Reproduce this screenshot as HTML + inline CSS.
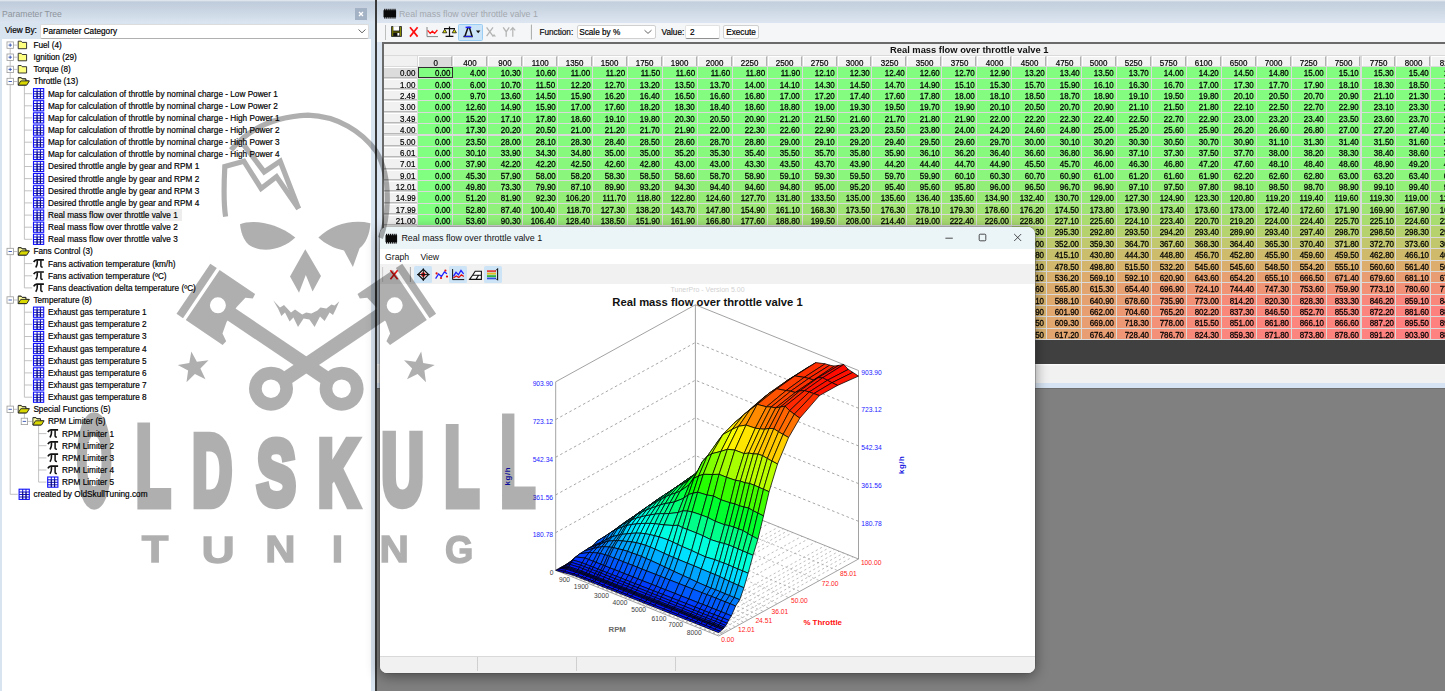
<!DOCTYPE html><html><head><meta charset="utf-8"><title>TunerPro</title><style>
*{box-sizing:border-box}
html,body{margin:0;padding:0}
body{width:1445px;height:691px;overflow:hidden;position:relative;background:#808080;font-family:"Liberation Sans",sans-serif;}
.abs{position:absolute}
.t{position:absolute;white-space:nowrap;line-height:1}
.tree{font-size:8.22px;color:#000;-webkit-text-stroke:0.18px #000}
.cell{position:absolute;height:10.3px;font-size:9.5px;line-height:12.3px;text-align:right;padding-right:1.7px;color:#000;-webkit-text-stroke:0.28px #000;white-space:nowrap;overflow:hidden}
.cell span,.hdr span{display:inline-block;transform:scaleX(0.84);transform-origin:100% 50%}
.hdr.c span{transform-origin:50% 50%}
.hdr{position:absolute;font-size:9.5px;color:#000;-webkit-text-stroke:0.22px #000;white-space:nowrap;overflow:hidden}
</style></head><body>
<div class="abs" style="left:0;top:0;width:376px;height:691px;background:#d9e4f1"></div>
<div class="abs" style="left:0;top:0;width:376px;height:23px;background:linear-gradient(#e9edf2 0px,#bfccdb 2px,#c6d2e0 8px,#dbe5f1 23px)"></div>
<div class="t" style="left:2px;top:10.2px;font-size:8.64px;color:#8e949b">Parameter Tree</div>
<div class="abs" style="left:355px;top:8px;width:12px;height:12px;background:#a4b2c5"></div>
<svg class="abs" style="left:355px;top:8px" width="12" height="12"><path d="M4 4L8 8M8 4L4 8" stroke="#fff" stroke-width="1.3"/></svg>
<div class="t tree" style="left:5px;top:27.3px">View By:</div>
<div class="abs" style="left:40px;top:24px;width:329px;height:14.5px;background:#fff;border:1px solid #dcdcdc;border-bottom-color:#b0b0b0;border-radius:2px"></div>
<div class="t tree" style="left:43px;top:27.6px">Parameter Category</div>
<svg class="abs" style="left:357px;top:27px" width="10" height="8"><path d="M1.5 2.5L5 5.8L8.5 2.5" stroke="#666" stroke-width="1" fill="none"/></svg>
<div class="abs" style="left:2px;top:39px;width:368.5px;height:652px;background:#fff"></div>
<div class="t tree" style="left:33.4px;top:42.0px">Fuel (4)</div>
<div class="t tree" style="left:33.4px;top:54.1px">Ignition (29)</div>
<div class="t tree" style="left:33.4px;top:66.3px">Torque (8)</div>
<div class="t tree" style="left:33.4px;top:78.4px">Throttle (13)</div>
<div class="t tree" style="left:48.0px;top:90.6px">Map for calculation of throttle by nominal charge - Low Power 1</div>
<div class="t tree" style="left:48.0px;top:102.7px">Map for calculation of throttle by nominal charge - Low Power 2</div>
<div class="t tree" style="left:48.0px;top:114.8px">Map for calculation of throttle by nominal charge - High Power 1</div>
<div class="t tree" style="left:48.0px;top:127.0px">Map for calculation of throttle by nominal charge - High Power 2</div>
<div class="t tree" style="left:48.0px;top:139.1px">Map for calculation of throttle by nominal charge - High Power 3</div>
<div class="t tree" style="left:48.0px;top:151.3px">Map for calculation of throttle by nominal charge - High Power 4</div>
<div class="t tree" style="left:48.0px;top:163.4px">Desired throttle angle by gear and RPM 1</div>
<div class="t tree" style="left:48.0px;top:175.5px">Desired throttle angle by gear and RPM 2</div>
<div class="t tree" style="left:48.0px;top:187.7px">Desired throttle angle by gear and RPM 3</div>
<div class="t tree" style="left:48.0px;top:199.8px">Desired throttle angle by gear and RPM 4</div>
<div class="abs" style="left:46.5px;top:209.1px;width:135px;height:12px;background:#ededed"></div>
<div class="t tree" style="left:48.0px;top:212.0px">Real mass flow over throttle valve 1</div>
<div class="t tree" style="left:48.0px;top:224.1px">Real mass flow over throttle valve 2</div>
<div class="t tree" style="left:48.0px;top:236.2px">Real mass flow over throttle valve 3</div>
<div class="t tree" style="left:33.4px;top:248.4px">Fans Control (3)</div>
<div class="t tree" style="left:48.0px;top:260.5px">Fans activation temperature (km/h)</div>
<div class="t tree" style="left:48.0px;top:272.7px">Fans activation temperature (ºC)</div>
<div class="t tree" style="left:48.0px;top:284.8px">Fans deactivation delta temperature (ºC)</div>
<div class="t tree" style="left:33.4px;top:296.9px">Temperature (8)</div>
<div class="t tree" style="left:48.0px;top:309.1px">Exhaust gas temperature 1</div>
<div class="t tree" style="left:48.0px;top:321.2px">Exhaust gas temperature 2</div>
<div class="t tree" style="left:48.0px;top:333.4px">Exhaust gas temperature 3</div>
<div class="t tree" style="left:48.0px;top:345.5px">Exhaust gas temperature 4</div>
<div class="t tree" style="left:48.0px;top:357.6px">Exhaust gas temperature 5</div>
<div class="t tree" style="left:48.0px;top:369.8px">Exhaust gas temperature 6</div>
<div class="t tree" style="left:48.0px;top:381.9px">Exhaust gas temperature 7</div>
<div class="t tree" style="left:48.0px;top:394.1px">Exhaust gas temperature 8</div>
<div class="t tree" style="left:33.4px;top:406.2px">Special Functions (5)</div>
<div class="t tree" style="left:47.9px;top:418.3px">RPM Limiter (5)</div>
<div class="t tree" style="left:62.1px;top:430.5px">RPM Limiter 1</div>
<div class="t tree" style="left:62.1px;top:442.6px">RPM Limiter 2</div>
<div class="t tree" style="left:62.1px;top:454.8px">RPM Limiter 3</div>
<div class="t tree" style="left:62.1px;top:466.9px">RPM Limiter 4</div>
<div class="t tree" style="left:62.1px;top:479.0px">RPM Limiter 5</div>
<div class="t tree" style="left:33.6px;top:491.2px">created by OldSkullTuning.com</div>
<svg class="abs" style="left:0;top:0" width="376" height="691"><path d="M10.2 45.1V494.3" stroke="#b4b4b4" stroke-width="0.8"/><path d="M10.2 45.1H17.2" stroke="#b4b4b4" stroke-width="0.8"/><rect x="7.0" y="41.9" width="6.4" height="6.4" fill="#fff" stroke="#9b9b9b" stroke-width="0.8"/><path d="M8.5 45.1H11.9" stroke="#3050b0" stroke-width="0.9"/><path d="M10.2 43.4V46.8" stroke="#3050b0" stroke-width="0.9"/><path d="M18.2 41.2h3l1 1.2h4.4v6.3h-8.4z" fill="#ffff80" stroke="#222" stroke-width="0.9"/><path d="M10.2 57.2H17.2" stroke="#b4b4b4" stroke-width="0.8"/><rect x="7.0" y="54.0" width="6.4" height="6.4" fill="#fff" stroke="#9b9b9b" stroke-width="0.8"/><path d="M8.5 57.2H11.9" stroke="#3050b0" stroke-width="0.9"/><path d="M10.2 55.5V58.9" stroke="#3050b0" stroke-width="0.9"/><path d="M18.2 53.3h3l1 1.2h4.4v6.3h-8.4z" fill="#ffff80" stroke="#222" stroke-width="0.9"/><path d="M10.2 69.4H17.2" stroke="#b4b4b4" stroke-width="0.8"/><rect x="7.0" y="66.2" width="6.4" height="6.4" fill="#fff" stroke="#9b9b9b" stroke-width="0.8"/><path d="M8.5 69.4H11.9" stroke="#3050b0" stroke-width="0.9"/><path d="M10.2 67.7V71.1" stroke="#3050b0" stroke-width="0.9"/><path d="M18.2 65.5h3l1 1.2h4.4v6.3h-8.4z" fill="#ffff80" stroke="#222" stroke-width="0.9"/><path d="M10.2 81.5H17.2" stroke="#b4b4b4" stroke-width="0.8"/><path d="M24.4 85.5V239.3" stroke="#b4b4b4" stroke-width="0.8"/><rect x="7.0" y="78.3" width="6.4" height="6.4" fill="#fff" stroke="#9b9b9b" stroke-width="0.8"/><path d="M8.5 81.5H11.9" stroke="#3050b0" stroke-width="0.9"/><path d="M18.2 77.6h3l1 1.2h3.6v1.8" fill="#ffffa0" stroke="#222" stroke-width="0.9"/><path d="M18.2 85.1v-7.3h3l1 1.2h3.6v1.9h3l-2.6 4.2z" fill="#ffffa0" stroke="#222" stroke-width="0.9"/><path d="M18.2 85.1l2.6 -4.2h8.6l-2.6 4.2z" fill="#d8d800" stroke="#222" stroke-width="0.9"/><path d="M24.4 93.7H32.2" stroke="#b4b4b4" stroke-width="0.8"/><rect x="33.5" y="88.6" width="10.2" height="10.2" fill="#fff" stroke="#1010ff" stroke-width="1.1"/><path d="M37.1 88.6v10.2M40.4 88.6v10.2M33.5 91.4h10.2M33.5 93.9h10.2M33.5 96.4h10.2" stroke="#1010d0" stroke-width="1"/><path d="M37.1 91.4v7.2M40.4 91.4v7.2" stroke="#101060" stroke-width="0.9"/><path d="M24.4 105.8H32.2" stroke="#b4b4b4" stroke-width="0.8"/><rect x="33.5" y="100.7" width="10.2" height="10.2" fill="#fff" stroke="#1010ff" stroke-width="1.1"/><path d="M37.1 100.7v10.2M40.4 100.7v10.2M33.5 103.5h10.2M33.5 106.0h10.2M33.5 108.5h10.2" stroke="#1010d0" stroke-width="1"/><path d="M37.1 103.5v7.2M40.4 103.5v7.2" stroke="#101060" stroke-width="0.9"/><path d="M24.4 117.9H32.2" stroke="#b4b4b4" stroke-width="0.8"/><rect x="33.5" y="112.8" width="10.2" height="10.2" fill="#fff" stroke="#1010ff" stroke-width="1.1"/><path d="M37.1 112.8v10.2M40.4 112.8v10.2M33.5 115.6h10.2M33.5 118.1h10.2M33.5 120.6h10.2" stroke="#1010d0" stroke-width="1"/><path d="M37.1 115.6v7.2M40.4 115.6v7.2" stroke="#101060" stroke-width="0.9"/><path d="M24.4 130.1H32.2" stroke="#b4b4b4" stroke-width="0.8"/><rect x="33.5" y="125.0" width="10.2" height="10.2" fill="#fff" stroke="#1010ff" stroke-width="1.1"/><path d="M37.1 125.0v10.2M40.4 125.0v10.2M33.5 127.8h10.2M33.5 130.3h10.2M33.5 132.8h10.2" stroke="#1010d0" stroke-width="1"/><path d="M37.1 127.8v7.2M40.4 127.8v7.2" stroke="#101060" stroke-width="0.9"/><path d="M24.4 142.2H32.2" stroke="#b4b4b4" stroke-width="0.8"/><rect x="33.5" y="137.1" width="10.2" height="10.2" fill="#fff" stroke="#1010ff" stroke-width="1.1"/><path d="M37.1 137.1v10.2M40.4 137.1v10.2M33.5 139.9h10.2M33.5 142.4h10.2M33.5 144.9h10.2" stroke="#1010d0" stroke-width="1"/><path d="M37.1 139.9v7.2M40.4 139.9v7.2" stroke="#101060" stroke-width="0.9"/><path d="M24.4 154.4H32.2" stroke="#b4b4b4" stroke-width="0.8"/><rect x="33.5" y="149.3" width="10.2" height="10.2" fill="#fff" stroke="#1010ff" stroke-width="1.1"/><path d="M37.1 149.3v10.2M40.4 149.3v10.2M33.5 152.1h10.2M33.5 154.6h10.2M33.5 157.1h10.2" stroke="#1010d0" stroke-width="1"/><path d="M37.1 152.1v7.2M40.4 152.1v7.2" stroke="#101060" stroke-width="0.9"/><path d="M24.4 166.5H32.2" stroke="#b4b4b4" stroke-width="0.8"/><rect x="33.5" y="161.4" width="10.2" height="10.2" fill="#fff" stroke="#1010ff" stroke-width="1.1"/><path d="M37.1 161.4v10.2M40.4 161.4v10.2M33.5 164.2h10.2M33.5 166.7h10.2M33.5 169.2h10.2" stroke="#1010d0" stroke-width="1"/><path d="M37.1 164.2v7.2M40.4 164.2v7.2" stroke="#101060" stroke-width="0.9"/><path d="M24.4 178.6H32.2" stroke="#b4b4b4" stroke-width="0.8"/><rect x="33.5" y="173.5" width="10.2" height="10.2" fill="#fff" stroke="#1010ff" stroke-width="1.1"/><path d="M37.1 173.5v10.2M40.4 173.5v10.2M33.5 176.3h10.2M33.5 178.8h10.2M33.5 181.3h10.2" stroke="#1010d0" stroke-width="1"/><path d="M37.1 176.3v7.2M40.4 176.3v7.2" stroke="#101060" stroke-width="0.9"/><path d="M24.4 190.8H32.2" stroke="#b4b4b4" stroke-width="0.8"/><rect x="33.5" y="185.7" width="10.2" height="10.2" fill="#fff" stroke="#1010ff" stroke-width="1.1"/><path d="M37.1 185.7v10.2M40.4 185.7v10.2M33.5 188.5h10.2M33.5 191.0h10.2M33.5 193.5h10.2" stroke="#1010d0" stroke-width="1"/><path d="M37.1 188.5v7.2M40.4 188.5v7.2" stroke="#101060" stroke-width="0.9"/><path d="M24.4 202.9H32.2" stroke="#b4b4b4" stroke-width="0.8"/><rect x="33.5" y="197.8" width="10.2" height="10.2" fill="#fff" stroke="#1010ff" stroke-width="1.1"/><path d="M37.1 197.8v10.2M40.4 197.8v10.2M33.5 200.6h10.2M33.5 203.1h10.2M33.5 205.6h10.2" stroke="#1010d0" stroke-width="1"/><path d="M37.1 200.6v7.2M40.4 200.6v7.2" stroke="#101060" stroke-width="0.9"/><path d="M24.4 215.1H32.2" stroke="#b4b4b4" stroke-width="0.8"/><rect x="33.5" y="210.0" width="10.2" height="10.2" fill="#fff" stroke="#1010ff" stroke-width="1.1"/><path d="M37.1 210.0v10.2M40.4 210.0v10.2M33.5 212.8h10.2M33.5 215.3h10.2M33.5 217.8h10.2" stroke="#1010d0" stroke-width="1"/><path d="M37.1 212.8v7.2M40.4 212.8v7.2" stroke="#101060" stroke-width="0.9"/><path d="M24.4 227.2H32.2" stroke="#b4b4b4" stroke-width="0.8"/><rect x="33.5" y="222.1" width="10.2" height="10.2" fill="#fff" stroke="#1010ff" stroke-width="1.1"/><path d="M37.1 222.1v10.2M40.4 222.1v10.2M33.5 224.9h10.2M33.5 227.4h10.2M33.5 229.9h10.2" stroke="#1010d0" stroke-width="1"/><path d="M37.1 224.9v7.2M40.4 224.9v7.2" stroke="#101060" stroke-width="0.9"/><path d="M24.4 239.3H32.2" stroke="#b4b4b4" stroke-width="0.8"/><rect x="33.5" y="234.2" width="10.2" height="10.2" fill="#fff" stroke="#1010ff" stroke-width="1.1"/><path d="M37.1 234.2v10.2M40.4 234.2v10.2M33.5 237.0h10.2M33.5 239.5h10.2M33.5 242.0h10.2" stroke="#1010d0" stroke-width="1"/><path d="M37.1 237.0v7.2M40.4 237.0v7.2" stroke="#101060" stroke-width="0.9"/><path d="M10.2 251.5H17.2" stroke="#b4b4b4" stroke-width="0.8"/><path d="M24.4 255.5V287.9" stroke="#b4b4b4" stroke-width="0.8"/><rect x="7.0" y="248.3" width="6.4" height="6.4" fill="#fff" stroke="#9b9b9b" stroke-width="0.8"/><path d="M8.5 251.5H11.9" stroke="#3050b0" stroke-width="0.9"/><path d="M18.2 247.6h3l1 1.2h3.6v1.8" fill="#ffffa0" stroke="#222" stroke-width="0.9"/><path d="M18.2 255.1v-7.3h3l1 1.2h3.6v1.9h3l-2.6 4.2z" fill="#ffffa0" stroke="#222" stroke-width="0.9"/><path d="M18.2 255.1l2.6 -4.2h8.6l-2.6 4.2z" fill="#d8d800" stroke="#222" stroke-width="0.9"/><path d="M24.4 263.6H32.2" stroke="#b4b4b4" stroke-width="0.8"/><path d="M33.7 262.0q1.2 -2.2 3 -2.2h7.2" stroke="#111" stroke-width="1.7" fill="none"/><path d="M37.3 260.2q0.3 5 -1.6 7.2M40.9 260.2v5.6q0 1.6 1.8 1.2" stroke="#111" stroke-width="1.5" fill="none"/><path d="M24.4 275.8H32.2" stroke="#b4b4b4" stroke-width="0.8"/><path d="M33.7 274.2q1.2 -2.2 3 -2.2h7.2" stroke="#111" stroke-width="1.7" fill="none"/><path d="M37.3 272.4q0.3 5 -1.6 7.2M40.9 272.4v5.6q0 1.6 1.8 1.2" stroke="#111" stroke-width="1.5" fill="none"/><path d="M24.4 287.9H32.2" stroke="#b4b4b4" stroke-width="0.8"/><path d="M33.7 286.3q1.2 -2.2 3 -2.2h7.2" stroke="#111" stroke-width="1.7" fill="none"/><path d="M37.3 284.5q0.3 5 -1.6 7.2M40.9 284.5v5.6q0 1.6 1.8 1.2" stroke="#111" stroke-width="1.5" fill="none"/><path d="M10.2 300.0H17.2" stroke="#b4b4b4" stroke-width="0.8"/><path d="M24.4 304.0V397.2" stroke="#b4b4b4" stroke-width="0.8"/><rect x="7.0" y="296.8" width="6.4" height="6.4" fill="#fff" stroke="#9b9b9b" stroke-width="0.8"/><path d="M8.5 300.0H11.9" stroke="#3050b0" stroke-width="0.9"/><path d="M18.2 296.1h3l1 1.2h3.6v1.8" fill="#ffffa0" stroke="#222" stroke-width="0.9"/><path d="M18.2 303.6v-7.3h3l1 1.2h3.6v1.9h3l-2.6 4.2z" fill="#ffffa0" stroke="#222" stroke-width="0.9"/><path d="M18.2 303.6l2.6 -4.2h8.6l-2.6 4.2z" fill="#d8d800" stroke="#222" stroke-width="0.9"/><path d="M24.4 312.2H32.2" stroke="#b4b4b4" stroke-width="0.8"/><rect x="33.5" y="307.1" width="10.2" height="10.2" fill="#fff" stroke="#1010ff" stroke-width="1.1"/><path d="M37.1 307.1v10.2M40.4 307.1v10.2M33.5 309.9h10.2M33.5 312.4h10.2M33.5 314.9h10.2" stroke="#1010d0" stroke-width="1"/><path d="M37.1 309.9v7.2M40.4 309.9v7.2" stroke="#101060" stroke-width="0.9"/><path d="M24.4 324.3H32.2" stroke="#b4b4b4" stroke-width="0.8"/><rect x="33.5" y="319.2" width="10.2" height="10.2" fill="#fff" stroke="#1010ff" stroke-width="1.1"/><path d="M37.1 319.2v10.2M40.4 319.2v10.2M33.5 322.0h10.2M33.5 324.5h10.2M33.5 327.0h10.2" stroke="#1010d0" stroke-width="1"/><path d="M37.1 322.0v7.2M40.4 322.0v7.2" stroke="#101060" stroke-width="0.9"/><path d="M24.4 336.5H32.2" stroke="#b4b4b4" stroke-width="0.8"/><rect x="33.5" y="331.4" width="10.2" height="10.2" fill="#fff" stroke="#1010ff" stroke-width="1.1"/><path d="M37.1 331.4v10.2M40.4 331.4v10.2M33.5 334.2h10.2M33.5 336.7h10.2M33.5 339.2h10.2" stroke="#1010d0" stroke-width="1"/><path d="M37.1 334.2v7.2M40.4 334.2v7.2" stroke="#101060" stroke-width="0.9"/><path d="M24.4 348.6H32.2" stroke="#b4b4b4" stroke-width="0.8"/><rect x="33.5" y="343.5" width="10.2" height="10.2" fill="#fff" stroke="#1010ff" stroke-width="1.1"/><path d="M37.1 343.5v10.2M40.4 343.5v10.2M33.5 346.3h10.2M33.5 348.8h10.2M33.5 351.3h10.2" stroke="#1010d0" stroke-width="1"/><path d="M37.1 346.3v7.2M40.4 346.3v7.2" stroke="#101060" stroke-width="0.9"/><path d="M24.4 360.7H32.2" stroke="#b4b4b4" stroke-width="0.8"/><rect x="33.5" y="355.6" width="10.2" height="10.2" fill="#fff" stroke="#1010ff" stroke-width="1.1"/><path d="M37.1 355.6v10.2M40.4 355.6v10.2M33.5 358.4h10.2M33.5 360.9h10.2M33.5 363.4h10.2" stroke="#1010d0" stroke-width="1"/><path d="M37.1 358.4v7.2M40.4 358.4v7.2" stroke="#101060" stroke-width="0.9"/><path d="M24.4 372.9H32.2" stroke="#b4b4b4" stroke-width="0.8"/><rect x="33.5" y="367.8" width="10.2" height="10.2" fill="#fff" stroke="#1010ff" stroke-width="1.1"/><path d="M37.1 367.8v10.2M40.4 367.8v10.2M33.5 370.6h10.2M33.5 373.1h10.2M33.5 375.6h10.2" stroke="#1010d0" stroke-width="1"/><path d="M37.1 370.6v7.2M40.4 370.6v7.2" stroke="#101060" stroke-width="0.9"/><path d="M24.4 385.0H32.2" stroke="#b4b4b4" stroke-width="0.8"/><rect x="33.5" y="379.9" width="10.2" height="10.2" fill="#fff" stroke="#1010ff" stroke-width="1.1"/><path d="M37.1 379.9v10.2M40.4 379.9v10.2M33.5 382.7h10.2M33.5 385.2h10.2M33.5 387.7h10.2" stroke="#1010d0" stroke-width="1"/><path d="M37.1 382.7v7.2M40.4 382.7v7.2" stroke="#101060" stroke-width="0.9"/><path d="M24.4 397.2H32.2" stroke="#b4b4b4" stroke-width="0.8"/><rect x="33.5" y="392.1" width="10.2" height="10.2" fill="#fff" stroke="#1010ff" stroke-width="1.1"/><path d="M37.1 392.1v10.2M40.4 392.1v10.2M33.5 394.9h10.2M33.5 397.4h10.2M33.5 399.9h10.2" stroke="#1010d0" stroke-width="1"/><path d="M37.1 394.9v7.2M40.4 394.9v7.2" stroke="#101060" stroke-width="0.9"/><path d="M10.2 409.3H17.2" stroke="#b4b4b4" stroke-width="0.8"/><path d="M24.4 413.3V421.4" stroke="#b4b4b4" stroke-width="0.8"/><rect x="7.0" y="406.1" width="6.4" height="6.4" fill="#fff" stroke="#9b9b9b" stroke-width="0.8"/><path d="M8.5 409.3H11.9" stroke="#3050b0" stroke-width="0.9"/><path d="M18.2 405.4h3l1 1.2h3.6v1.8" fill="#ffffa0" stroke="#222" stroke-width="0.9"/><path d="M18.2 412.9v-7.3h3l1 1.2h3.6v1.9h3l-2.6 4.2z" fill="#ffffa0" stroke="#222" stroke-width="0.9"/><path d="M18.2 412.9l2.6 -4.2h8.6l-2.6 4.2z" fill="#d8d800" stroke="#222" stroke-width="0.9"/><path d="M24.4 421.4H31.9" stroke="#b4b4b4" stroke-width="0.8"/><path d="M38.6 425.4V482.1" stroke="#b4b4b4" stroke-width="0.8"/><rect x="21.2" y="418.2" width="6.4" height="6.4" fill="#fff" stroke="#9b9b9b" stroke-width="0.8"/><path d="M22.7 421.4H26.1" stroke="#3050b0" stroke-width="0.9"/><path d="M32.9 417.5h3l1 1.2h3.6v1.8" fill="#ffffa0" stroke="#222" stroke-width="0.9"/><path d="M32.9 425.0v-7.3h3l1 1.2h3.6v1.9h3l-2.6 4.2z" fill="#ffffa0" stroke="#222" stroke-width="0.9"/><path d="M32.9 425.0l2.6 -4.2h8.6l-2.6 4.2z" fill="#d8d800" stroke="#222" stroke-width="0.9"/><path d="M38.6 433.6H46.4" stroke="#b4b4b4" stroke-width="0.8"/><path d="M47.9 432.0q1.2 -2.2 3 -2.2h7.2" stroke="#111" stroke-width="1.7" fill="none"/><path d="M51.5 430.2q0.3 5 -1.6 7.2M55.1 430.2v5.6q0 1.6 1.8 1.2" stroke="#111" stroke-width="1.5" fill="none"/><path d="M38.6 445.7H46.4" stroke="#b4b4b4" stroke-width="0.8"/><path d="M47.9 444.1q1.2 -2.2 3 -2.2h7.2" stroke="#111" stroke-width="1.7" fill="none"/><path d="M51.5 442.3q0.3 5 -1.6 7.2M55.1 442.3v5.6q0 1.6 1.8 1.2" stroke="#111" stroke-width="1.5" fill="none"/><path d="M38.6 457.9H46.4" stroke="#b4b4b4" stroke-width="0.8"/><path d="M47.9 456.3q1.2 -2.2 3 -2.2h7.2" stroke="#111" stroke-width="1.7" fill="none"/><path d="M51.5 454.5q0.3 5 -1.6 7.2M55.1 454.5v5.6q0 1.6 1.8 1.2" stroke="#111" stroke-width="1.5" fill="none"/><path d="M38.6 470.0H46.4" stroke="#b4b4b4" stroke-width="0.8"/><path d="M47.9 468.4q1.2 -2.2 3 -2.2h7.2" stroke="#111" stroke-width="1.7" fill="none"/><path d="M51.5 466.6q0.3 5 -1.6 7.2M55.1 466.6v5.6q0 1.6 1.8 1.2" stroke="#111" stroke-width="1.5" fill="none"/><path d="M38.6 482.1H46.4" stroke="#b4b4b4" stroke-width="0.8"/><rect x="47.7" y="477.0" width="10.2" height="10.2" fill="#fff" stroke="#1010ff" stroke-width="1.1"/><path d="M51.3 477.0v10.2M54.6 477.0v10.2M47.7 479.8h10.2M47.7 482.3h10.2M47.7 484.8h10.2" stroke="#1010d0" stroke-width="1"/><path d="M51.3 479.8v7.2M54.6 479.8v7.2" stroke="#101060" stroke-width="0.9"/><path d="M10.2 494.3H17.8" stroke="#b4b4b4" stroke-width="0.8"/><rect x="19.1" y="489.2" width="10.2" height="10.2" fill="#fff" stroke="#1010ff" stroke-width="1.1"/><path d="M22.7 489.2v10.2M26.0 489.2v10.2M19.1 492.0h10.2M19.1 494.5h10.2M19.1 497.0h10.2" stroke="#1010d0" stroke-width="1"/><path d="M22.7 492.0v7.2M26.0 492.0v7.2" stroke="#101060" stroke-width="0.9"/></svg>
<div class="abs" style="left:375px;top:0;width:1.6px;height:691px;background:#3a3a3a"></div>
<div class="abs" style="left:376.6px;top:0;width:1070px;height:23px;background:linear-gradient(#eef1f5 0px,#c3cfdd 2px,#cbd6e3 9px,#dde6f1 23px)"></div>
<div class="abs" style="left:376.6px;top:22px;width:1070px;height:342px;background:#dbe5f1"></div>
<svg class="abs" style="left:383.0px;top:8.0px" width="14" height="12"><rect x="0.5" y="2.2" width="12.6" height="7" fill="#0a0a0a"/><rect x="1.2" y="0.8" width="1.2" height="9.8" fill="#0a0a0a"/><rect x="3.2" y="0.8" width="1.2" height="9.8" fill="#0a0a0a"/><rect x="5.3" y="0.8" width="1.2" height="9.8" fill="#0a0a0a"/><rect x="7.3" y="0.8" width="1.2" height="9.8" fill="#0a0a0a"/><rect x="9.4" y="0.8" width="1.2" height="9.8" fill="#0a0a0a"/><rect x="11.4" y="0.8" width="1.2" height="9.8" fill="#0a0a0a"/></svg>
<div class="t" style="left:399px;top:9.6px;font-size:8.81px;color:#a3a8ae">Real mass flow over throttle valve 1</div>
<div class="abs" style="left:377.4px;top:22.5px;width:1069px;height:19.5px;background:#f5f6f7"></div>
<div class="abs" style="left:384.6px;top:24.5px;width:1px;height:15px;background:#bdbdbd"></div>
<div class="abs" style="left:458.2px;top:24px;width:24.8px;height:16.5px;background:#cce4f7;border:0.8px solid #99cdf3;border-radius:1.5px"></div>
<svg class="abs" style="left:385px;top:22px" width="160" height="20"><rect x="6.2" y="4.2" width="10.6" height="10.6" fill="#111"/><rect x="8.2" y="4.2" width="6" height="4.4" fill="#fff"/><rect x="7.2" y="5" width="1" height="9" fill="#8a8a00"/><rect x="15" y="5" width="1" height="9" fill="#8a8a00"/><rect x="12.4" y="11" width="2" height="2.6" fill="#fff"/><rect x="8" y="9.6" width="7" height="0.9" fill="#8a8a00"/><path d="M25 5.2L32.6 14.6M32.6 5.2L25 14.6" stroke="#ff1010" stroke-width="1.7"/><path d="M42 5v9.6h11" stroke="#777" stroke-width="0.9" fill="none"/><path d="M42.6 8.4l2.6 3 2.2-2.2 2.2 2.2 2.8-3.4" stroke="#ff1010" stroke-width="1.3" fill="none"/><path d="M64.5 4.6v9.2M60.6 14.4h7.8M59 6.6h11" stroke="#111" stroke-width="1.2"/><path d="M57.6 10.8h4.2l-2.1-3.6zM67.2 10.8h4.2l-2.1-3.6z" fill="#e8e800" stroke="#111" stroke-width="0.8"/><path d="M78.4 14.6h9.4M80 14l3-8.4h1.4l2.6 8.4" stroke="#111" stroke-width="1.5" fill="none"/><path d="M80.6 5.4h5.6" stroke="#2020ff" stroke-width="1.5"/><path d="M79.4 14.4h7.8" stroke="#2020ff" stroke-width="1"/><path d="M91 8.6h4.4l-2.2 2.6z" fill="#111"/><path d="M101.6 5.4l6.4 8.8M108 5.4l-6.4 8.8" stroke="#b4b4b4" stroke-width="1.3"/><path d="M107 14.6l2-2.6 2 2.6z" fill="#b4b4b4"/><path d="M118.2 5.4l3 4.4v5M124.2 5.4l-3 4.4" stroke="#b4b4b4" stroke-width="1.3" fill="none"/><path d="M127.8 14.8V6M125.4 8.4l2.4-2.8 2.4 2.8" stroke="#b4b4b4" stroke-width="1.2" fill="none"/><path d="M146.4 2.6v15" stroke="#a8a8a8" stroke-width="1"/></svg>
<div class="t tree" style="left:539.4px;top:28.9px;color:#111">Function:</div>
<div class="abs" style="left:576.6px;top:24.6px;width:79px;height:14.8px;background:#fff;border:0.8px solid #d0d0d0;border-radius:2px"></div>
<div class="t tree" style="left:579.2px;top:29.1px">Scale by %</div>
<svg class="abs" style="left:643px;top:28px" width="10" height="8"><path d="M1.5 2.2L5 5.4L8.5 2.2" stroke="#555" stroke-width="0.9" fill="none"/></svg>
<div class="t tree" style="left:661.6px;top:28.9px">Value:</div>
<div class="abs" style="left:685.4px;top:24.6px;width:34.6px;height:14.8px;background:#fff;border:0.8px solid #e2e2e2;border-bottom-color:#909090;border-radius:2px"></div>
<div class="t tree" style="left:690px;top:29.1px">2</div>
<div class="abs" style="left:723.4px;top:24.6px;width:35.4px;height:14.8px;background:#fdfdfd;border:0.8px solid #d0d0d0;border-radius:2px"></div>
<div class="t tree" style="left:726.2px;top:29.1px">Execute</div>
<div class="abs" style="left:382.4px;top:42.0px;width:1064px;height:298px;background:#dadada"></div>
<div class="abs" style="left:382.4px;top:42.0px;width:1064px;height:1.8px;background:#6a6a6a"></div>
<div class="abs" style="left:382.4px;top:42.0px;width:1.6px;height:298px;background:#6a6a6a"></div>
<div class="abs" style="left:384px;top:44px;width:1062px;height:10.8px;background:#f1f1f1"></div>
<div class="t" style="left:889.8px;top:45.8px;font-size:8.6px;font-weight:bold;color:#111;transform-origin:0 0;transform:scaleX(1.088)">Real mass flow over throttle valve 1</div>
<div class="abs" style="left:384px;top:55.8px;width:33.4px;height:10.6px;background:#f1f1f1"></div>
<div class="hdr c" style="left:418.40px;top:55.8px;width:33.9px;height:10.6px;background:#dcdcdc;border-left:1px solid #fff;border-top:1px solid #fff;border-right:0.8px solid #b0b0b0;text-align:center;line-height:12.2px"><span>0</span></div>
<div class="hdr c" style="left:453.33px;top:55.8px;width:33.9px;height:10.6px;background:#f3f3f3;border-left:1px solid #fff;border-top:1px solid #fff;border-right:0.8px solid #b0b0b0;text-align:center;line-height:12.2px"><span>400</span></div>
<div class="hdr c" style="left:488.26px;top:55.8px;width:33.9px;height:10.6px;background:#f3f3f3;border-left:1px solid #fff;border-top:1px solid #fff;border-right:0.8px solid #b0b0b0;text-align:center;line-height:12.2px"><span>900</span></div>
<div class="hdr c" style="left:523.19px;top:55.8px;width:33.9px;height:10.6px;background:#f3f3f3;border-left:1px solid #fff;border-top:1px solid #fff;border-right:0.8px solid #b0b0b0;text-align:center;line-height:12.2px"><span>1100</span></div>
<div class="hdr c" style="left:558.12px;top:55.8px;width:33.9px;height:10.6px;background:#f3f3f3;border-left:1px solid #fff;border-top:1px solid #fff;border-right:0.8px solid #b0b0b0;text-align:center;line-height:12.2px"><span>1350</span></div>
<div class="hdr c" style="left:593.05px;top:55.8px;width:33.9px;height:10.6px;background:#f3f3f3;border-left:1px solid #fff;border-top:1px solid #fff;border-right:0.8px solid #b0b0b0;text-align:center;line-height:12.2px"><span>1500</span></div>
<div class="hdr c" style="left:627.98px;top:55.8px;width:33.9px;height:10.6px;background:#f3f3f3;border-left:1px solid #fff;border-top:1px solid #fff;border-right:0.8px solid #b0b0b0;text-align:center;line-height:12.2px"><span>1750</span></div>
<div class="hdr c" style="left:662.91px;top:55.8px;width:33.9px;height:10.6px;background:#f3f3f3;border-left:1px solid #fff;border-top:1px solid #fff;border-right:0.8px solid #b0b0b0;text-align:center;line-height:12.2px"><span>1900</span></div>
<div class="hdr c" style="left:697.84px;top:55.8px;width:33.9px;height:10.6px;background:#f3f3f3;border-left:1px solid #fff;border-top:1px solid #fff;border-right:0.8px solid #b0b0b0;text-align:center;line-height:12.2px"><span>2000</span></div>
<div class="hdr c" style="left:732.77px;top:55.8px;width:33.9px;height:10.6px;background:#f3f3f3;border-left:1px solid #fff;border-top:1px solid #fff;border-right:0.8px solid #b0b0b0;text-align:center;line-height:12.2px"><span>2250</span></div>
<div class="hdr c" style="left:767.70px;top:55.8px;width:33.9px;height:10.6px;background:#f3f3f3;border-left:1px solid #fff;border-top:1px solid #fff;border-right:0.8px solid #b0b0b0;text-align:center;line-height:12.2px"><span>2500</span></div>
<div class="hdr c" style="left:802.63px;top:55.8px;width:33.9px;height:10.6px;background:#f3f3f3;border-left:1px solid #fff;border-top:1px solid #fff;border-right:0.8px solid #b0b0b0;text-align:center;line-height:12.2px"><span>2750</span></div>
<div class="hdr c" style="left:837.56px;top:55.8px;width:33.9px;height:10.6px;background:#f3f3f3;border-left:1px solid #fff;border-top:1px solid #fff;border-right:0.8px solid #b0b0b0;text-align:center;line-height:12.2px"><span>3000</span></div>
<div class="hdr c" style="left:872.49px;top:55.8px;width:33.9px;height:10.6px;background:#f3f3f3;border-left:1px solid #fff;border-top:1px solid #fff;border-right:0.8px solid #b0b0b0;text-align:center;line-height:12.2px"><span>3250</span></div>
<div class="hdr c" style="left:907.42px;top:55.8px;width:33.9px;height:10.6px;background:#f3f3f3;border-left:1px solid #fff;border-top:1px solid #fff;border-right:0.8px solid #b0b0b0;text-align:center;line-height:12.2px"><span>3500</span></div>
<div class="hdr c" style="left:942.35px;top:55.8px;width:33.9px;height:10.6px;background:#f3f3f3;border-left:1px solid #fff;border-top:1px solid #fff;border-right:0.8px solid #b0b0b0;text-align:center;line-height:12.2px"><span>3750</span></div>
<div class="hdr c" style="left:977.28px;top:55.8px;width:33.9px;height:10.6px;background:#f3f3f3;border-left:1px solid #fff;border-top:1px solid #fff;border-right:0.8px solid #b0b0b0;text-align:center;line-height:12.2px"><span>4000</span></div>
<div class="hdr c" style="left:1012.21px;top:55.8px;width:33.9px;height:10.6px;background:#f3f3f3;border-left:1px solid #fff;border-top:1px solid #fff;border-right:0.8px solid #b0b0b0;text-align:center;line-height:12.2px"><span>4500</span></div>
<div class="hdr c" style="left:1047.14px;top:55.8px;width:33.9px;height:10.6px;background:#f3f3f3;border-left:1px solid #fff;border-top:1px solid #fff;border-right:0.8px solid #b0b0b0;text-align:center;line-height:12.2px"><span>4750</span></div>
<div class="hdr c" style="left:1082.07px;top:55.8px;width:33.9px;height:10.6px;background:#f3f3f3;border-left:1px solid #fff;border-top:1px solid #fff;border-right:0.8px solid #b0b0b0;text-align:center;line-height:12.2px"><span>5000</span></div>
<div class="hdr c" style="left:1117.00px;top:55.8px;width:33.9px;height:10.6px;background:#f3f3f3;border-left:1px solid #fff;border-top:1px solid #fff;border-right:0.8px solid #b0b0b0;text-align:center;line-height:12.2px"><span>5250</span></div>
<div class="hdr c" style="left:1151.93px;top:55.8px;width:33.9px;height:10.6px;background:#f3f3f3;border-left:1px solid #fff;border-top:1px solid #fff;border-right:0.8px solid #b0b0b0;text-align:center;line-height:12.2px"><span>5750</span></div>
<div class="hdr c" style="left:1186.86px;top:55.8px;width:33.9px;height:10.6px;background:#f3f3f3;border-left:1px solid #fff;border-top:1px solid #fff;border-right:0.8px solid #b0b0b0;text-align:center;line-height:12.2px"><span>6100</span></div>
<div class="hdr c" style="left:1221.79px;top:55.8px;width:33.9px;height:10.6px;background:#f3f3f3;border-left:1px solid #fff;border-top:1px solid #fff;border-right:0.8px solid #b0b0b0;text-align:center;line-height:12.2px"><span>6500</span></div>
<div class="hdr c" style="left:1256.72px;top:55.8px;width:33.9px;height:10.6px;background:#f3f3f3;border-left:1px solid #fff;border-top:1px solid #fff;border-right:0.8px solid #b0b0b0;text-align:center;line-height:12.2px"><span>7000</span></div>
<div class="hdr c" style="left:1291.65px;top:55.8px;width:33.9px;height:10.6px;background:#f3f3f3;border-left:1px solid #fff;border-top:1px solid #fff;border-right:0.8px solid #b0b0b0;text-align:center;line-height:12.2px"><span>7250</span></div>
<div class="hdr c" style="left:1326.58px;top:55.8px;width:33.9px;height:10.6px;background:#f3f3f3;border-left:1px solid #fff;border-top:1px solid #fff;border-right:0.8px solid #b0b0b0;text-align:center;line-height:12.2px"><span>7500</span></div>
<div class="hdr c" style="left:1361.51px;top:55.8px;width:33.9px;height:10.6px;background:#f3f3f3;border-left:1px solid #fff;border-top:1px solid #fff;border-right:0.8px solid #b0b0b0;text-align:center;line-height:12.2px"><span>7750</span></div>
<div class="hdr c" style="left:1396.44px;top:55.8px;width:33.9px;height:10.6px;background:#f3f3f3;border-left:1px solid #fff;border-top:1px solid #fff;border-right:0.8px solid #b0b0b0;text-align:center;line-height:12.2px"><span>8000</span></div>
<div class="hdr c" style="left:1431.37px;top:55.8px;width:33.9px;height:10.6px;background:#f3f3f3;border-left:1px solid #fff;border-top:1px solid #fff;border-right:0.8px solid #b0b0b0;text-align:center;line-height:12.2px"><span>8250</span></div>
<div class="hdr" style="left:384px;top:67.30px;width:33.4px;height:10.3px;background:#dcdcdc;border-top:1px solid #fff;border-bottom:0.8px solid #b8b8b8;text-align:right;padding-right:2.1px;line-height:10.4px"><span>0.00</span></div>
<div class="cell" style="left:418.40px;top:67.30px;width:33.9px;background:rgb(128,255,128)"><span>0.00</span></div>
<div class="cell" style="left:453.33px;top:67.30px;width:33.9px;background:rgb(129,254,128)"><span>4.00</span></div>
<div class="cell" style="left:488.26px;top:67.30px;width:33.9px;background:rgb(130,253,127)"><span>10.30</span></div>
<div class="cell" style="left:523.19px;top:67.30px;width:33.9px;background:rgb(130,253,127)"><span>10.60</span></div>
<div class="cell" style="left:558.12px;top:67.30px;width:33.9px;background:rgb(130,253,127)"><span>11.00</span></div>
<div class="cell" style="left:593.05px;top:67.30px;width:33.9px;background:rgb(130,253,127)"><span>11.20</span></div>
<div class="cell" style="left:627.98px;top:67.30px;width:33.9px;background:rgb(130,253,127)"><span>11.50</span></div>
<div class="cell" style="left:662.91px;top:67.30px;width:33.9px;background:rgb(130,253,127)"><span>11.60</span></div>
<div class="cell" style="left:697.84px;top:67.30px;width:33.9px;background:rgb(130,253,127)"><span>11.60</span></div>
<div class="cell" style="left:732.77px;top:67.30px;width:33.9px;background:rgb(130,253,127)"><span>11.80</span></div>
<div class="cell" style="left:767.70px;top:67.30px;width:33.9px;background:rgb(130,253,127)"><span>11.90</span></div>
<div class="cell" style="left:802.63px;top:67.30px;width:33.9px;background:rgb(130,253,127)"><span>12.10</span></div>
<div class="cell" style="left:837.56px;top:67.30px;width:33.9px;background:rgb(130,253,127)"><span>12.30</span></div>
<div class="cell" style="left:872.49px;top:67.30px;width:33.9px;background:rgb(130,253,127)"><span>12.40</span></div>
<div class="cell" style="left:907.42px;top:67.30px;width:33.9px;background:rgb(130,253,127)"><span>12.60</span></div>
<div class="cell" style="left:942.35px;top:67.30px;width:33.9px;background:rgb(130,253,127)"><span>12.70</span></div>
<div class="cell" style="left:977.28px;top:67.30px;width:33.9px;background:rgb(130,253,127)"><span>12.90</span></div>
<div class="cell" style="left:1012.21px;top:67.30px;width:33.9px;background:rgb(130,253,127)"><span>13.20</span></div>
<div class="cell" style="left:1047.14px;top:67.30px;width:33.9px;background:rgb(131,253,127)"><span>13.40</span></div>
<div class="cell" style="left:1082.07px;top:67.30px;width:33.9px;background:rgb(131,253,127)"><span>13.50</span></div>
<div class="cell" style="left:1117.00px;top:67.30px;width:33.9px;background:rgb(131,253,127)"><span>13.70</span></div>
<div class="cell" style="left:1151.93px;top:67.30px;width:33.9px;background:rgb(131,253,127)"><span>14.00</span></div>
<div class="cell" style="left:1186.86px;top:67.30px;width:33.9px;background:rgb(131,253,127)"><span>14.20</span></div>
<div class="cell" style="left:1221.79px;top:67.30px;width:33.9px;background:rgb(131,253,127)"><span>14.50</span></div>
<div class="cell" style="left:1256.72px;top:67.30px;width:33.9px;background:rgb(131,253,127)"><span>14.80</span></div>
<div class="cell" style="left:1291.65px;top:67.30px;width:33.9px;background:rgb(131,253,127)"><span>15.00</span></div>
<div class="cell" style="left:1326.58px;top:67.30px;width:33.9px;background:rgb(131,253,127)"><span>15.10</span></div>
<div class="cell" style="left:1361.51px;top:67.30px;width:33.9px;background:rgb(131,253,127)"><span>15.30</span></div>
<div class="cell" style="left:1396.44px;top:67.30px;width:33.9px;background:rgb(131,253,127)"><span>15.40</span></div>
<div class="cell" style="left:1431.37px;top:67.30px;width:33.9px;background:rgb(131,253,127)"><span>15.50</span></div>
<div class="hdr" style="left:384px;top:78.67px;width:33.4px;height:10.3px;background:#f1f1f1;border-top:1px solid #fff;border-bottom:0.8px solid #b8b8b8;text-align:right;padding-right:2.1px;line-height:10.4px"><span>1.00</span></div>
<div class="cell" style="left:418.40px;top:78.67px;width:33.9px;background:rgb(128,255,128)"><span>0.00</span></div>
<div class="cell" style="left:453.33px;top:78.67px;width:33.9px;background:rgb(129,254,128)"><span>6.00</span></div>
<div class="cell" style="left:488.26px;top:78.67px;width:33.9px;background:rgb(130,253,127)"><span>10.70</span></div>
<div class="cell" style="left:523.19px;top:78.67px;width:33.9px;background:rgb(130,253,127)"><span>11.50</span></div>
<div class="cell" style="left:558.12px;top:78.67px;width:33.9px;background:rgb(130,253,127)"><span>12.20</span></div>
<div class="cell" style="left:593.05px;top:78.67px;width:33.9px;background:rgb(130,253,127)"><span>12.70</span></div>
<div class="cell" style="left:627.98px;top:78.67px;width:33.9px;background:rgb(130,253,127)"><span>13.20</span></div>
<div class="cell" style="left:662.91px;top:78.67px;width:33.9px;background:rgb(131,253,127)"><span>13.50</span></div>
<div class="cell" style="left:697.84px;top:78.67px;width:33.9px;background:rgb(131,253,127)"><span>13.70</span></div>
<div class="cell" style="left:732.77px;top:78.67px;width:33.9px;background:rgb(131,253,127)"><span>14.00</span></div>
<div class="cell" style="left:767.70px;top:78.67px;width:33.9px;background:rgb(131,253,127)"><span>14.10</span></div>
<div class="cell" style="left:802.63px;top:78.67px;width:33.9px;background:rgb(131,253,127)"><span>14.30</span></div>
<div class="cell" style="left:837.56px;top:78.67px;width:33.9px;background:rgb(131,253,127)"><span>14.50</span></div>
<div class="cell" style="left:872.49px;top:78.67px;width:33.9px;background:rgb(131,253,127)"><span>14.70</span></div>
<div class="cell" style="left:907.42px;top:78.67px;width:33.9px;background:rgb(131,253,127)"><span>14.90</span></div>
<div class="cell" style="left:942.35px;top:78.67px;width:33.9px;background:rgb(131,253,127)"><span>15.10</span></div>
<div class="cell" style="left:977.28px;top:78.67px;width:33.9px;background:rgb(131,253,127)"><span>15.30</span></div>
<div class="cell" style="left:1012.21px;top:78.67px;width:33.9px;background:rgb(131,253,127)"><span>15.70</span></div>
<div class="cell" style="left:1047.14px;top:78.67px;width:33.9px;background:rgb(131,253,127)"><span>15.90</span></div>
<div class="cell" style="left:1082.07px;top:78.67px;width:33.9px;background:rgb(131,253,127)"><span>16.10</span></div>
<div class="cell" style="left:1117.00px;top:78.67px;width:33.9px;background:rgb(131,252,127)"><span>16.30</span></div>
<div class="cell" style="left:1151.93px;top:78.67px;width:33.9px;background:rgb(131,252,127)"><span>16.70</span></div>
<div class="cell" style="left:1186.86px;top:78.67px;width:33.9px;background:rgb(131,252,127)"><span>17.00</span></div>
<div class="cell" style="left:1221.79px;top:78.67px;width:33.9px;background:rgb(131,252,127)"><span>17.30</span></div>
<div class="cell" style="left:1256.72px;top:78.67px;width:33.9px;background:rgb(131,252,127)"><span>17.70</span></div>
<div class="cell" style="left:1291.65px;top:78.67px;width:33.9px;background:rgb(131,252,127)"><span>17.90</span></div>
<div class="cell" style="left:1326.58px;top:78.67px;width:33.9px;background:rgb(131,252,127)"><span>18.10</span></div>
<div class="cell" style="left:1361.51px;top:78.67px;width:33.9px;background:rgb(131,252,127)"><span>18.30</span></div>
<div class="cell" style="left:1396.44px;top:78.67px;width:33.9px;background:rgb(131,252,127)"><span>18.50</span></div>
<div class="cell" style="left:1431.37px;top:78.67px;width:33.9px;background:rgb(132,252,127)"><span>18.60</span></div>
<div class="hdr" style="left:384px;top:90.04px;width:33.4px;height:10.3px;background:#f1f1f1;border-top:1px solid #fff;border-bottom:0.8px solid #b8b8b8;text-align:right;padding-right:2.1px;line-height:10.4px"><span>2.49</span></div>
<div class="cell" style="left:418.40px;top:90.04px;width:33.9px;background:rgb(128,255,128)"><span>0.00</span></div>
<div class="cell" style="left:453.33px;top:90.04px;width:33.9px;background:rgb(130,254,127)"><span>9.70</span></div>
<div class="cell" style="left:488.26px;top:90.04px;width:33.9px;background:rgb(131,253,127)"><span>13.60</span></div>
<div class="cell" style="left:523.19px;top:90.04px;width:33.9px;background:rgb(131,253,127)"><span>14.50</span></div>
<div class="cell" style="left:558.12px;top:90.04px;width:33.9px;background:rgb(131,253,127)"><span>15.90</span></div>
<div class="cell" style="left:593.05px;top:90.04px;width:33.9px;background:rgb(131,252,127)"><span>16.20</span></div>
<div class="cell" style="left:627.98px;top:90.04px;width:33.9px;background:rgb(131,252,127)"><span>16.40</span></div>
<div class="cell" style="left:662.91px;top:90.04px;width:33.9px;background:rgb(131,252,127)"><span>16.50</span></div>
<div class="cell" style="left:697.84px;top:90.04px;width:33.9px;background:rgb(131,252,127)"><span>16.60</span></div>
<div class="cell" style="left:732.77px;top:90.04px;width:33.9px;background:rgb(131,252,127)"><span>16.80</span></div>
<div class="cell" style="left:767.70px;top:90.04px;width:33.9px;background:rgb(131,252,127)"><span>17.00</span></div>
<div class="cell" style="left:802.63px;top:90.04px;width:33.9px;background:rgb(131,252,127)"><span>17.20</span></div>
<div class="cell" style="left:837.56px;top:90.04px;width:33.9px;background:rgb(131,252,127)"><span>17.40</span></div>
<div class="cell" style="left:872.49px;top:90.04px;width:33.9px;background:rgb(131,252,127)"><span>17.60</span></div>
<div class="cell" style="left:907.42px;top:90.04px;width:33.9px;background:rgb(131,252,127)"><span>17.80</span></div>
<div class="cell" style="left:942.35px;top:90.04px;width:33.9px;background:rgb(131,252,127)"><span>18.00</span></div>
<div class="cell" style="left:977.28px;top:90.04px;width:33.9px;background:rgb(131,252,127)"><span>18.10</span></div>
<div class="cell" style="left:1012.21px;top:90.04px;width:33.9px;background:rgb(131,252,127)"><span>18.50</span></div>
<div class="cell" style="left:1047.14px;top:90.04px;width:33.9px;background:rgb(132,252,127)"><span>18.70</span></div>
<div class="cell" style="left:1082.07px;top:90.04px;width:33.9px;background:rgb(132,252,127)"><span>18.90</span></div>
<div class="cell" style="left:1117.00px;top:90.04px;width:33.9px;background:rgb(132,252,127)"><span>19.10</span></div>
<div class="cell" style="left:1151.93px;top:90.04px;width:33.9px;background:rgb(132,252,127)"><span>19.50</span></div>
<div class="cell" style="left:1186.86px;top:90.04px;width:33.9px;background:rgb(132,252,127)"><span>19.80</span></div>
<div class="cell" style="left:1221.79px;top:90.04px;width:33.9px;background:rgb(132,252,127)"><span>20.10</span></div>
<div class="cell" style="left:1256.72px;top:90.04px;width:33.9px;background:rgb(132,252,127)"><span>20.50</span></div>
<div class="cell" style="left:1291.65px;top:90.04px;width:33.9px;background:rgb(132,252,127)"><span>20.70</span></div>
<div class="cell" style="left:1326.58px;top:90.04px;width:33.9px;background:rgb(132,252,127)"><span>20.90</span></div>
<div class="cell" style="left:1361.51px;top:90.04px;width:33.9px;background:rgb(132,252,127)"><span>21.10</span></div>
<div class="cell" style="left:1396.44px;top:90.04px;width:33.9px;background:rgb(132,252,127)"><span>21.30</span></div>
<div class="cell" style="left:1431.37px;top:90.04px;width:33.9px;background:rgb(132,252,127)"><span>21.40</span></div>
<div class="hdr" style="left:384px;top:101.41px;width:33.4px;height:10.3px;background:#f1f1f1;border-top:1px solid #fff;border-bottom:0.8px solid #b8b8b8;text-align:right;padding-right:2.1px;line-height:10.4px"><span>3.00</span></div>
<div class="cell" style="left:418.40px;top:101.41px;width:33.9px;background:rgb(128,255,128)"><span>0.00</span></div>
<div class="cell" style="left:453.33px;top:101.41px;width:33.9px;background:rgb(130,253,127)"><span>12.60</span></div>
<div class="cell" style="left:488.26px;top:101.41px;width:33.9px;background:rgb(131,253,127)"><span>14.90</span></div>
<div class="cell" style="left:523.19px;top:101.41px;width:33.9px;background:rgb(131,253,127)"><span>15.90</span></div>
<div class="cell" style="left:558.12px;top:101.41px;width:33.9px;background:rgb(131,252,127)"><span>17.00</span></div>
<div class="cell" style="left:593.05px;top:101.41px;width:33.9px;background:rgb(131,252,127)"><span>17.60</span></div>
<div class="cell" style="left:627.98px;top:101.41px;width:33.9px;background:rgb(131,252,127)"><span>18.20</span></div>
<div class="cell" style="left:662.91px;top:101.41px;width:33.9px;background:rgb(131,252,127)"><span>18.30</span></div>
<div class="cell" style="left:697.84px;top:101.41px;width:33.9px;background:rgb(131,252,127)"><span>18.40</span></div>
<div class="cell" style="left:732.77px;top:101.41px;width:33.9px;background:rgb(132,252,127)"><span>18.60</span></div>
<div class="cell" style="left:767.70px;top:101.41px;width:33.9px;background:rgb(132,252,127)"><span>18.80</span></div>
<div class="cell" style="left:802.63px;top:101.41px;width:33.9px;background:rgb(132,252,127)"><span>19.00</span></div>
<div class="cell" style="left:837.56px;top:101.41px;width:33.9px;background:rgb(132,252,127)"><span>19.30</span></div>
<div class="cell" style="left:872.49px;top:101.41px;width:33.9px;background:rgb(132,252,127)"><span>19.50</span></div>
<div class="cell" style="left:907.42px;top:101.41px;width:33.9px;background:rgb(132,252,127)"><span>19.70</span></div>
<div class="cell" style="left:942.35px;top:101.41px;width:33.9px;background:rgb(132,252,127)"><span>19.90</span></div>
<div class="cell" style="left:977.28px;top:101.41px;width:33.9px;background:rgb(132,252,127)"><span>20.10</span></div>
<div class="cell" style="left:1012.21px;top:101.41px;width:33.9px;background:rgb(132,252,127)"><span>20.50</span></div>
<div class="cell" style="left:1047.14px;top:101.41px;width:33.9px;background:rgb(132,252,127)"><span>20.70</span></div>
<div class="cell" style="left:1082.07px;top:101.41px;width:33.9px;background:rgb(132,252,127)"><span>20.90</span></div>
<div class="cell" style="left:1117.00px;top:101.41px;width:33.9px;background:rgb(132,252,127)"><span>21.10</span></div>
<div class="cell" style="left:1151.93px;top:101.41px;width:33.9px;background:rgb(132,252,127)"><span>21.50</span></div>
<div class="cell" style="left:1186.86px;top:101.41px;width:33.9px;background:rgb(132,252,126)"><span>21.80</span></div>
<div class="cell" style="left:1221.79px;top:101.41px;width:33.9px;background:rgb(132,252,126)"><span>22.10</span></div>
<div class="cell" style="left:1256.72px;top:101.41px;width:33.9px;background:rgb(132,252,126)"><span>22.50</span></div>
<div class="cell" style="left:1291.65px;top:101.41px;width:33.9px;background:rgb(132,251,126)"><span>22.70</span></div>
<div class="cell" style="left:1326.58px;top:101.41px;width:33.9px;background:rgb(132,251,126)"><span>22.90</span></div>
<div class="cell" style="left:1361.51px;top:101.41px;width:33.9px;background:rgb(132,251,126)"><span>23.10</span></div>
<div class="cell" style="left:1396.44px;top:101.41px;width:33.9px;background:rgb(132,251,126)"><span>23.30</span></div>
<div class="cell" style="left:1431.37px;top:101.41px;width:33.9px;background:rgb(132,251,126)"><span>23.40</span></div>
<div class="hdr" style="left:384px;top:112.78px;width:33.4px;height:10.3px;background:#f1f1f1;border-top:1px solid #fff;border-bottom:0.8px solid #b8b8b8;text-align:right;padding-right:2.1px;line-height:10.4px"><span>3.49</span></div>
<div class="cell" style="left:418.40px;top:112.78px;width:33.9px;background:rgb(128,255,128)"><span>0.00</span></div>
<div class="cell" style="left:453.33px;top:112.78px;width:33.9px;background:rgb(131,253,127)"><span>15.20</span></div>
<div class="cell" style="left:488.26px;top:112.78px;width:33.9px;background:rgb(131,252,127)"><span>17.10</span></div>
<div class="cell" style="left:523.19px;top:112.78px;width:33.9px;background:rgb(131,252,127)"><span>17.80</span></div>
<div class="cell" style="left:558.12px;top:112.78px;width:33.9px;background:rgb(132,252,127)"><span>18.60</span></div>
<div class="cell" style="left:593.05px;top:112.78px;width:33.9px;background:rgb(132,252,127)"><span>19.10</span></div>
<div class="cell" style="left:627.98px;top:112.78px;width:33.9px;background:rgb(132,252,127)"><span>19.80</span></div>
<div class="cell" style="left:662.91px;top:112.78px;width:33.9px;background:rgb(132,252,127)"><span>20.30</span></div>
<div class="cell" style="left:697.84px;top:112.78px;width:33.9px;background:rgb(132,252,127)"><span>20.50</span></div>
<div class="cell" style="left:732.77px;top:112.78px;width:33.9px;background:rgb(132,252,127)"><span>20.90</span></div>
<div class="cell" style="left:767.70px;top:112.78px;width:33.9px;background:rgb(132,252,127)"><span>21.20</span></div>
<div class="cell" style="left:802.63px;top:112.78px;width:33.9px;background:rgb(132,252,127)"><span>21.50</span></div>
<div class="cell" style="left:837.56px;top:112.78px;width:33.9px;background:rgb(132,252,126)"><span>21.60</span></div>
<div class="cell" style="left:872.49px;top:112.78px;width:33.9px;background:rgb(132,252,126)"><span>21.70</span></div>
<div class="cell" style="left:907.42px;top:112.78px;width:33.9px;background:rgb(132,252,126)"><span>21.80</span></div>
<div class="cell" style="left:942.35px;top:112.78px;width:33.9px;background:rgb(132,252,126)"><span>21.90</span></div>
<div class="cell" style="left:977.28px;top:112.78px;width:33.9px;background:rgb(132,252,126)"><span>22.00</span></div>
<div class="cell" style="left:1012.21px;top:112.78px;width:33.9px;background:rgb(132,252,126)"><span>22.20</span></div>
<div class="cell" style="left:1047.14px;top:112.78px;width:33.9px;background:rgb(132,252,126)"><span>22.30</span></div>
<div class="cell" style="left:1082.07px;top:112.78px;width:33.9px;background:rgb(132,252,126)"><span>22.40</span></div>
<div class="cell" style="left:1117.00px;top:112.78px;width:33.9px;background:rgb(132,252,126)"><span>22.50</span></div>
<div class="cell" style="left:1151.93px;top:112.78px;width:33.9px;background:rgb(132,251,126)"><span>22.70</span></div>
<div class="cell" style="left:1186.86px;top:112.78px;width:33.9px;background:rgb(132,251,126)"><span>22.90</span></div>
<div class="cell" style="left:1221.79px;top:112.78px;width:33.9px;background:rgb(132,251,126)"><span>23.00</span></div>
<div class="cell" style="left:1256.72px;top:112.78px;width:33.9px;background:rgb(132,251,126)"><span>23.20</span></div>
<div class="cell" style="left:1291.65px;top:112.78px;width:33.9px;background:rgb(132,251,126)"><span>23.40</span></div>
<div class="cell" style="left:1326.58px;top:112.78px;width:33.9px;background:rgb(132,251,126)"><span>23.50</span></div>
<div class="cell" style="left:1361.51px;top:112.78px;width:33.9px;background:rgb(132,251,126)"><span>23.60</span></div>
<div class="cell" style="left:1396.44px;top:112.78px;width:33.9px;background:rgb(132,251,126)"><span>23.70</span></div>
<div class="cell" style="left:1431.37px;top:112.78px;width:33.9px;background:rgb(133,251,126)"><span>23.80</span></div>
<div class="hdr" style="left:384px;top:124.15px;width:33.4px;height:10.3px;background:#f1f1f1;border-top:1px solid #fff;border-bottom:0.8px solid #b8b8b8;text-align:right;padding-right:2.1px;line-height:10.4px"><span>4.00</span></div>
<div class="cell" style="left:418.40px;top:124.15px;width:33.9px;background:rgb(128,255,128)"><span>0.00</span></div>
<div class="cell" style="left:453.33px;top:124.15px;width:33.9px;background:rgb(131,252,127)"><span>17.30</span></div>
<div class="cell" style="left:488.26px;top:124.15px;width:33.9px;background:rgb(132,252,127)"><span>20.20</span></div>
<div class="cell" style="left:523.19px;top:124.15px;width:33.9px;background:rgb(132,252,127)"><span>20.50</span></div>
<div class="cell" style="left:558.12px;top:124.15px;width:33.9px;background:rgb(132,252,127)"><span>21.00</span></div>
<div class="cell" style="left:593.05px;top:124.15px;width:33.9px;background:rgb(132,252,127)"><span>21.20</span></div>
<div class="cell" style="left:627.98px;top:124.15px;width:33.9px;background:rgb(132,252,126)"><span>21.70</span></div>
<div class="cell" style="left:662.91px;top:124.15px;width:33.9px;background:rgb(132,252,126)"><span>21.90</span></div>
<div class="cell" style="left:697.84px;top:124.15px;width:33.9px;background:rgb(132,252,126)"><span>22.00</span></div>
<div class="cell" style="left:732.77px;top:124.15px;width:33.9px;background:rgb(132,252,126)"><span>22.30</span></div>
<div class="cell" style="left:767.70px;top:124.15px;width:33.9px;background:rgb(132,252,126)"><span>22.60</span></div>
<div class="cell" style="left:802.63px;top:124.15px;width:33.9px;background:rgb(132,251,126)"><span>22.90</span></div>
<div class="cell" style="left:837.56px;top:124.15px;width:33.9px;background:rgb(132,251,126)"><span>23.20</span></div>
<div class="cell" style="left:872.49px;top:124.15px;width:33.9px;background:rgb(132,251,126)"><span>23.50</span></div>
<div class="cell" style="left:907.42px;top:124.15px;width:33.9px;background:rgb(133,251,126)"><span>23.80</span></div>
<div class="cell" style="left:942.35px;top:124.15px;width:33.9px;background:rgb(133,251,126)"><span>24.00</span></div>
<div class="cell" style="left:977.28px;top:124.15px;width:33.9px;background:rgb(133,251,126)"><span>24.20</span></div>
<div class="cell" style="left:1012.21px;top:124.15px;width:33.9px;background:rgb(133,251,126)"><span>24.60</span></div>
<div class="cell" style="left:1047.14px;top:124.15px;width:33.9px;background:rgb(133,251,126)"><span>24.80</span></div>
<div class="cell" style="left:1082.07px;top:124.15px;width:33.9px;background:rgb(133,251,126)"><span>25.00</span></div>
<div class="cell" style="left:1117.00px;top:124.15px;width:33.9px;background:rgb(133,251,126)"><span>25.20</span></div>
<div class="cell" style="left:1151.93px;top:124.15px;width:33.9px;background:rgb(133,251,126)"><span>25.60</span></div>
<div class="cell" style="left:1186.86px;top:124.15px;width:33.9px;background:rgb(133,251,126)"><span>25.90</span></div>
<div class="cell" style="left:1221.79px;top:124.15px;width:33.9px;background:rgb(133,251,126)"><span>26.20</span></div>
<div class="cell" style="left:1256.72px;top:124.15px;width:33.9px;background:rgb(133,251,126)"><span>26.60</span></div>
<div class="cell" style="left:1291.65px;top:124.15px;width:33.9px;background:rgb(133,251,126)"><span>26.80</span></div>
<div class="cell" style="left:1326.58px;top:124.15px;width:33.9px;background:rgb(133,251,126)"><span>27.00</span></div>
<div class="cell" style="left:1361.51px;top:124.15px;width:33.9px;background:rgb(133,251,126)"><span>27.20</span></div>
<div class="cell" style="left:1396.44px;top:124.15px;width:33.9px;background:rgb(133,251,126)"><span>27.40</span></div>
<div class="cell" style="left:1431.37px;top:124.15px;width:33.9px;background:rgb(133,251,126)"><span>27.50</span></div>
<div class="hdr" style="left:384px;top:135.52px;width:33.4px;height:10.3px;background:#f1f1f1;border-top:1px solid #fff;border-bottom:0.8px solid #b8b8b8;text-align:right;padding-right:2.1px;line-height:10.4px"><span>5.00</span></div>
<div class="cell" style="left:418.40px;top:135.52px;width:33.9px;background:rgb(128,255,128)"><span>0.00</span></div>
<div class="cell" style="left:453.33px;top:135.52px;width:33.9px;background:rgb(132,251,126)"><span>23.50</span></div>
<div class="cell" style="left:488.26px;top:135.52px;width:33.9px;background:rgb(133,251,126)"><span>28.00</span></div>
<div class="cell" style="left:523.19px;top:135.52px;width:33.9px;background:rgb(133,251,126)"><span>28.10</span></div>
<div class="cell" style="left:558.12px;top:135.52px;width:33.9px;background:rgb(133,251,126)"><span>28.30</span></div>
<div class="cell" style="left:593.05px;top:135.52px;width:33.9px;background:rgb(133,251,126)"><span>28.40</span></div>
<div class="cell" style="left:627.98px;top:135.52px;width:33.9px;background:rgb(133,251,126)"><span>28.50</span></div>
<div class="cell" style="left:662.91px;top:135.52px;width:33.9px;background:rgb(133,251,126)"><span>28.60</span></div>
<div class="cell" style="left:697.84px;top:135.52px;width:33.9px;background:rgb(133,251,126)"><span>28.70</span></div>
<div class="cell" style="left:732.77px;top:135.52px;width:33.9px;background:rgb(133,251,126)"><span>28.80</span></div>
<div class="cell" style="left:767.70px;top:135.52px;width:33.9px;background:rgb(133,251,126)"><span>29.00</span></div>
<div class="cell" style="left:802.63px;top:135.52px;width:33.9px;background:rgb(134,251,126)"><span>29.10</span></div>
<div class="cell" style="left:837.56px;top:135.52px;width:33.9px;background:rgb(134,250,126)"><span>29.20</span></div>
<div class="cell" style="left:872.49px;top:135.52px;width:33.9px;background:rgb(134,250,126)"><span>29.40</span></div>
<div class="cell" style="left:907.42px;top:135.52px;width:33.9px;background:rgb(134,250,126)"><span>29.50</span></div>
<div class="cell" style="left:942.35px;top:135.52px;width:33.9px;background:rgb(134,250,126)"><span>29.60</span></div>
<div class="cell" style="left:977.28px;top:135.52px;width:33.9px;background:rgb(134,250,126)"><span>29.70</span></div>
<div class="cell" style="left:1012.21px;top:135.52px;width:33.9px;background:rgb(134,250,126)"><span>30.00</span></div>
<div class="cell" style="left:1047.14px;top:135.52px;width:33.9px;background:rgb(134,250,126)"><span>30.10</span></div>
<div class="cell" style="left:1082.07px;top:135.52px;width:33.9px;background:rgb(134,250,126)"><span>30.20</span></div>
<div class="cell" style="left:1117.00px;top:135.52px;width:33.9px;background:rgb(134,250,126)"><span>30.30</span></div>
<div class="cell" style="left:1151.93px;top:135.52px;width:33.9px;background:rgb(134,250,126)"><span>30.50</span></div>
<div class="cell" style="left:1186.86px;top:135.52px;width:33.9px;background:rgb(134,250,126)"><span>30.70</span></div>
<div class="cell" style="left:1221.79px;top:135.52px;width:33.9px;background:rgb(134,250,126)"><span>30.90</span></div>
<div class="cell" style="left:1256.72px;top:135.52px;width:33.9px;background:rgb(134,250,126)"><span>31.10</span></div>
<div class="cell" style="left:1291.65px;top:135.52px;width:33.9px;background:rgb(134,250,126)"><span>31.30</span></div>
<div class="cell" style="left:1326.58px;top:135.52px;width:33.9px;background:rgb(134,250,126)"><span>31.40</span></div>
<div class="cell" style="left:1361.51px;top:135.52px;width:33.9px;background:rgb(134,250,126)"><span>31.50</span></div>
<div class="cell" style="left:1396.44px;top:135.52px;width:33.9px;background:rgb(134,250,126)"><span>31.60</span></div>
<div class="cell" style="left:1431.37px;top:135.52px;width:33.9px;background:rgb(134,250,126)"><span>31.70</span></div>
<div class="hdr" style="left:384px;top:146.89px;width:33.4px;height:10.3px;background:#f1f1f1;border-top:1px solid #fff;border-bottom:0.8px solid #b8b8b8;text-align:right;padding-right:2.1px;line-height:10.4px"><span>6.01</span></div>
<div class="cell" style="left:418.40px;top:146.89px;width:33.9px;background:rgb(128,255,128)"><span>0.00</span></div>
<div class="cell" style="left:453.33px;top:146.89px;width:33.9px;background:rgb(134,250,126)"><span>30.10</span></div>
<div class="cell" style="left:488.26px;top:146.89px;width:33.9px;background:rgb(134,250,126)"><span>33.90</span></div>
<div class="cell" style="left:523.19px;top:146.89px;width:33.9px;background:rgb(134,250,126)"><span>34.30</span></div>
<div class="cell" style="left:558.12px;top:146.89px;width:33.9px;background:rgb(135,250,126)"><span>34.80</span></div>
<div class="cell" style="left:593.05px;top:146.89px;width:33.9px;background:rgb(135,250,126)"><span>35.00</span></div>
<div class="cell" style="left:627.98px;top:146.89px;width:33.9px;background:rgb(135,250,126)"><span>35.00</span></div>
<div class="cell" style="left:662.91px;top:146.89px;width:33.9px;background:rgb(135,250,126)"><span>35.20</span></div>
<div class="cell" style="left:697.84px;top:146.89px;width:33.9px;background:rgb(135,250,126)"><span>35.30</span></div>
<div class="cell" style="left:732.77px;top:146.89px;width:33.9px;background:rgb(135,250,126)"><span>35.40</span></div>
<div class="cell" style="left:767.70px;top:146.89px;width:33.9px;background:rgb(135,250,126)"><span>35.50</span></div>
<div class="cell" style="left:802.63px;top:146.89px;width:33.9px;background:rgb(135,249,126)"><span>35.70</span></div>
<div class="cell" style="left:837.56px;top:146.89px;width:33.9px;background:rgb(135,249,126)"><span>35.80</span></div>
<div class="cell" style="left:872.49px;top:146.89px;width:33.9px;background:rgb(135,249,126)"><span>35.90</span></div>
<div class="cell" style="left:907.42px;top:146.89px;width:33.9px;background:rgb(135,249,125)"><span>36.10</span></div>
<div class="cell" style="left:942.35px;top:146.89px;width:33.9px;background:rgb(135,249,125)"><span>36.20</span></div>
<div class="cell" style="left:977.28px;top:146.89px;width:33.9px;background:rgb(135,249,125)"><span>36.40</span></div>
<div class="cell" style="left:1012.21px;top:146.89px;width:33.9px;background:rgb(135,249,125)"><span>36.60</span></div>
<div class="cell" style="left:1047.14px;top:146.89px;width:33.9px;background:rgb(135,249,125)"><span>36.80</span></div>
<div class="cell" style="left:1082.07px;top:146.89px;width:33.9px;background:rgb(135,249,125)"><span>36.90</span></div>
<div class="cell" style="left:1117.00px;top:146.89px;width:33.9px;background:rgb(135,249,125)"><span>37.10</span></div>
<div class="cell" style="left:1151.93px;top:146.89px;width:33.9px;background:rgb(135,249,125)"><span>37.30</span></div>
<div class="cell" style="left:1186.86px;top:146.89px;width:33.9px;background:rgb(135,249,125)"><span>37.50</span></div>
<div class="cell" style="left:1221.79px;top:146.89px;width:33.9px;background:rgb(135,249,125)"><span>37.70</span></div>
<div class="cell" style="left:1256.72px;top:146.89px;width:33.9px;background:rgb(135,249,125)"><span>38.00</span></div>
<div class="cell" style="left:1291.65px;top:146.89px;width:33.9px;background:rgb(135,249,125)"><span>38.20</span></div>
<div class="cell" style="left:1326.58px;top:146.89px;width:33.9px;background:rgb(135,249,125)"><span>38.30</span></div>
<div class="cell" style="left:1361.51px;top:146.89px;width:33.9px;background:rgb(135,249,125)"><span>38.40</span></div>
<div class="cell" style="left:1396.44px;top:146.89px;width:33.9px;background:rgb(135,249,125)"><span>38.60</span></div>
<div class="cell" style="left:1431.37px;top:146.89px;width:33.9px;background:rgb(135,249,125)"><span>38.70</span></div>
<div class="hdr" style="left:384px;top:158.26px;width:33.4px;height:10.3px;background:#f1f1f1;border-top:1px solid #fff;border-bottom:0.8px solid #b8b8b8;text-align:right;padding-right:2.1px;line-height:10.4px"><span>7.01</span></div>
<div class="cell" style="left:418.40px;top:158.26px;width:33.9px;background:rgb(128,255,128)"><span>0.00</span></div>
<div class="cell" style="left:453.33px;top:158.26px;width:33.9px;background:rgb(135,249,125)"><span>37.90</span></div>
<div class="cell" style="left:488.26px;top:158.26px;width:33.9px;background:rgb(136,248,125)"><span>42.20</span></div>
<div class="cell" style="left:523.19px;top:158.26px;width:33.9px;background:rgb(136,248,125)"><span>42.20</span></div>
<div class="cell" style="left:558.12px;top:158.26px;width:33.9px;background:rgb(136,248,125)"><span>42.50</span></div>
<div class="cell" style="left:593.05px;top:158.26px;width:33.9px;background:rgb(136,248,125)"><span>42.60</span></div>
<div class="cell" style="left:627.98px;top:158.26px;width:33.9px;background:rgb(136,248,125)"><span>42.80</span></div>
<div class="cell" style="left:662.91px;top:158.26px;width:33.9px;background:rgb(136,248,125)"><span>43.00</span></div>
<div class="cell" style="left:697.84px;top:158.26px;width:33.9px;background:rgb(136,248,125)"><span>43.00</span></div>
<div class="cell" style="left:732.77px;top:158.26px;width:33.9px;background:rgb(136,248,125)"><span>43.30</span></div>
<div class="cell" style="left:767.70px;top:158.26px;width:33.9px;background:rgb(136,248,125)"><span>43.50</span></div>
<div class="cell" style="left:802.63px;top:158.26px;width:33.9px;background:rgb(136,248,125)"><span>43.70</span></div>
<div class="cell" style="left:837.56px;top:158.26px;width:33.9px;background:rgb(136,248,125)"><span>43.90</span></div>
<div class="cell" style="left:872.49px;top:158.26px;width:33.9px;background:rgb(136,248,125)"><span>44.20</span></div>
<div class="cell" style="left:907.42px;top:158.26px;width:33.9px;background:rgb(136,248,125)"><span>44.40</span></div>
<div class="cell" style="left:942.35px;top:158.26px;width:33.9px;background:rgb(136,248,125)"><span>44.70</span></div>
<div class="cell" style="left:977.28px;top:158.26px;width:33.9px;background:rgb(136,248,125)"><span>44.90</span></div>
<div class="cell" style="left:1012.21px;top:158.26px;width:33.9px;background:rgb(137,248,125)"><span>45.50</span></div>
<div class="cell" style="left:1047.14px;top:158.26px;width:33.9px;background:rgb(137,248,125)"><span>45.70</span></div>
<div class="cell" style="left:1082.07px;top:158.26px;width:33.9px;background:rgb(137,248,125)"><span>46.00</span></div>
<div class="cell" style="left:1117.00px;top:158.26px;width:33.9px;background:rgb(137,248,125)"><span>46.30</span></div>
<div class="cell" style="left:1151.93px;top:158.26px;width:33.9px;background:rgb(137,248,125)"><span>46.80</span></div>
<div class="cell" style="left:1186.86px;top:158.26px;width:33.9px;background:rgb(137,248,125)"><span>47.20</span></div>
<div class="cell" style="left:1221.79px;top:158.26px;width:33.9px;background:rgb(137,248,125)"><span>47.60</span></div>
<div class="cell" style="left:1256.72px;top:158.26px;width:33.9px;background:rgb(137,248,125)"><span>48.10</span></div>
<div class="cell" style="left:1291.65px;top:158.26px;width:33.9px;background:rgb(137,248,125)"><span>48.40</span></div>
<div class="cell" style="left:1326.58px;top:158.26px;width:33.9px;background:rgb(137,247,125)"><span>48.60</span></div>
<div class="cell" style="left:1361.51px;top:158.26px;width:33.9px;background:rgb(137,247,125)"><span>48.90</span></div>
<div class="cell" style="left:1396.44px;top:158.26px;width:33.9px;background:rgb(137,247,125)"><span>49.20</span></div>
<div class="cell" style="left:1431.37px;top:158.26px;width:33.9px;background:rgb(137,247,125)"><span>49.40</span></div>
<div class="hdr" style="left:384px;top:169.63px;width:33.4px;height:10.3px;background:#f1f1f1;border-top:1px solid #fff;border-bottom:0.8px solid #b8b8b8;text-align:right;padding-right:2.1px;line-height:10.4px"><span>9.01</span></div>
<div class="cell" style="left:418.40px;top:169.63px;width:33.9px;background:rgb(128,255,128)"><span>0.00</span></div>
<div class="cell" style="left:453.33px;top:169.63px;width:33.9px;background:rgb(137,248,125)"><span>45.30</span></div>
<div class="cell" style="left:488.26px;top:169.63px;width:33.9px;background:rgb(139,246,124)"><span>57.90</span></div>
<div class="cell" style="left:523.19px;top:169.63px;width:33.9px;background:rgb(139,246,124)"><span>58.00</span></div>
<div class="cell" style="left:558.12px;top:169.63px;width:33.9px;background:rgb(139,246,124)"><span>58.20</span></div>
<div class="cell" style="left:593.05px;top:169.63px;width:33.9px;background:rgb(139,246,124)"><span>58.30</span></div>
<div class="cell" style="left:627.98px;top:169.63px;width:33.9px;background:rgb(139,246,124)"><span>58.50</span></div>
<div class="cell" style="left:662.91px;top:169.63px;width:33.9px;background:rgb(139,246,124)"><span>58.60</span></div>
<div class="cell" style="left:697.84px;top:169.63px;width:33.9px;background:rgb(139,246,124)"><span>58.70</span></div>
<div class="cell" style="left:732.77px;top:169.63px;width:33.9px;background:rgb(139,246,124)"><span>58.90</span></div>
<div class="cell" style="left:767.70px;top:169.63px;width:33.9px;background:rgb(139,246,124)"><span>59.10</span></div>
<div class="cell" style="left:802.63px;top:169.63px;width:33.9px;background:rgb(139,246,124)"><span>59.30</span></div>
<div class="cell" style="left:837.56px;top:169.63px;width:33.9px;background:rgb(139,246,124)"><span>59.50</span></div>
<div class="cell" style="left:872.49px;top:169.63px;width:33.9px;background:rgb(139,246,124)"><span>59.70</span></div>
<div class="cell" style="left:907.42px;top:169.63px;width:33.9px;background:rgb(139,246,124)"><span>59.90</span></div>
<div class="cell" style="left:942.35px;top:169.63px;width:33.9px;background:rgb(139,246,124)"><span>60.10</span></div>
<div class="cell" style="left:977.28px;top:169.63px;width:33.9px;background:rgb(139,246,124)"><span>60.30</span></div>
<div class="cell" style="left:1012.21px;top:169.63px;width:33.9px;background:rgb(139,246,124)"><span>60.70</span></div>
<div class="cell" style="left:1047.14px;top:169.63px;width:33.9px;background:rgb(139,246,124)"><span>60.90</span></div>
<div class="cell" style="left:1082.07px;top:169.63px;width:33.9px;background:rgb(140,246,124)"><span>61.00</span></div>
<div class="cell" style="left:1117.00px;top:169.63px;width:33.9px;background:rgb(140,246,124)"><span>61.20</span></div>
<div class="cell" style="left:1151.93px;top:169.63px;width:33.9px;background:rgb(140,245,124)"><span>61.60</span></div>
<div class="cell" style="left:1186.86px;top:169.63px;width:33.9px;background:rgb(140,245,124)"><span>61.90</span></div>
<div class="cell" style="left:1221.79px;top:169.63px;width:33.9px;background:rgb(140,245,124)"><span>62.20</span></div>
<div class="cell" style="left:1256.72px;top:169.63px;width:33.9px;background:rgb(140,245,124)"><span>62.60</span></div>
<div class="cell" style="left:1291.65px;top:169.63px;width:33.9px;background:rgb(140,245,124)"><span>62.80</span></div>
<div class="cell" style="left:1326.58px;top:169.63px;width:33.9px;background:rgb(140,245,124)"><span>63.00</span></div>
<div class="cell" style="left:1361.51px;top:169.63px;width:33.9px;background:rgb(140,245,124)"><span>63.20</span></div>
<div class="cell" style="left:1396.44px;top:169.63px;width:33.9px;background:rgb(140,245,124)"><span>63.40</span></div>
<div class="cell" style="left:1431.37px;top:169.63px;width:33.9px;background:rgb(140,245,124)"><span>63.50</span></div>
<div class="hdr" style="left:384px;top:181.00px;width:33.4px;height:10.3px;background:#f1f1f1;border-top:1px solid #fff;border-bottom:0.8px solid #b8b8b8;text-align:right;padding-right:2.1px;line-height:10.4px"><span>12.01</span></div>
<div class="cell" style="left:418.40px;top:181.00px;width:33.9px;background:rgb(128,255,128)"><span>0.00</span></div>
<div class="cell" style="left:453.33px;top:181.00px;width:33.9px;background:rgb(137,247,125)"><span>49.80</span></div>
<div class="cell" style="left:488.26px;top:181.00px;width:33.9px;background:rgb(142,244,123)"><span>73.30</span></div>
<div class="cell" style="left:523.19px;top:181.00px;width:33.9px;background:rgb(143,243,123)"><span>79.90</span></div>
<div class="cell" style="left:558.12px;top:181.00px;width:33.9px;background:rgb(144,242,122)"><span>87.10</span></div>
<div class="cell" style="left:593.05px;top:181.00px;width:33.9px;background:rgb(145,241,122)"><span>89.90</span></div>
<div class="cell" style="left:627.98px;top:181.00px;width:33.9px;background:rgb(146,241,122)"><span>93.20</span></div>
<div class="cell" style="left:662.91px;top:181.00px;width:33.9px;background:rgb(146,240,122)"><span>94.30</span></div>
<div class="cell" style="left:697.84px;top:181.00px;width:33.9px;background:rgb(146,240,122)"><span>94.40</span></div>
<div class="cell" style="left:732.77px;top:181.00px;width:33.9px;background:rgb(146,240,122)"><span>94.60</span></div>
<div class="cell" style="left:767.70px;top:181.00px;width:33.9px;background:rgb(146,240,122)"><span>94.80</span></div>
<div class="cell" style="left:802.63px;top:181.00px;width:33.9px;background:rgb(146,240,122)"><span>95.00</span></div>
<div class="cell" style="left:837.56px;top:181.00px;width:33.9px;background:rgb(146,240,122)"><span>95.20</span></div>
<div class="cell" style="left:872.49px;top:181.00px;width:33.9px;background:rgb(146,240,121)"><span>95.40</span></div>
<div class="cell" style="left:907.42px;top:181.00px;width:33.9px;background:rgb(146,240,121)"><span>95.60</span></div>
<div class="cell" style="left:942.35px;top:181.00px;width:33.9px;background:rgb(146,240,121)"><span>95.80</span></div>
<div class="cell" style="left:977.28px;top:181.00px;width:33.9px;background:rgb(146,240,121)"><span>96.00</span></div>
<div class="cell" style="left:1012.21px;top:181.00px;width:33.9px;background:rgb(146,240,121)"><span>96.50</span></div>
<div class="cell" style="left:1047.14px;top:181.00px;width:33.9px;background:rgb(146,240,121)"><span>96.70</span></div>
<div class="cell" style="left:1082.07px;top:181.00px;width:33.9px;background:rgb(146,240,121)"><span>96.90</span></div>
<div class="cell" style="left:1117.00px;top:181.00px;width:33.9px;background:rgb(146,240,121)"><span>97.10</span></div>
<div class="cell" style="left:1151.93px;top:181.00px;width:33.9px;background:rgb(146,240,121)"><span>97.50</span></div>
<div class="cell" style="left:1186.86px;top:181.00px;width:33.9px;background:rgb(146,240,121)"><span>97.80</span></div>
<div class="cell" style="left:1221.79px;top:181.00px;width:33.9px;background:rgb(146,240,121)"><span>98.10</span></div>
<div class="cell" style="left:1256.72px;top:181.00px;width:33.9px;background:rgb(147,240,121)"><span>98.50</span></div>
<div class="cell" style="left:1291.65px;top:181.00px;width:33.9px;background:rgb(147,240,121)"><span>98.70</span></div>
<div class="cell" style="left:1326.58px;top:181.00px;width:33.9px;background:rgb(147,240,121)"><span>98.90</span></div>
<div class="cell" style="left:1361.51px;top:181.00px;width:33.9px;background:rgb(147,240,121)"><span>99.10</span></div>
<div class="cell" style="left:1396.44px;top:181.00px;width:33.9px;background:rgb(147,240,121)"><span>99.40</span></div>
<div class="cell" style="left:1431.37px;top:181.00px;width:33.9px;background:rgb(147,240,121)"><span>99.50</span></div>
<div class="hdr" style="left:384px;top:192.37px;width:33.4px;height:10.3px;background:#f1f1f1;border-top:1px solid #fff;border-bottom:0.8px solid #b8b8b8;text-align:right;padding-right:2.1px;line-height:10.4px"><span>14.99</span></div>
<div class="cell" style="left:418.40px;top:192.37px;width:33.9px;background:rgb(128,255,128)"><span>0.00</span></div>
<div class="cell" style="left:453.33px;top:192.37px;width:33.9px;background:rgb(138,247,124)"><span>51.20</span></div>
<div class="cell" style="left:488.26px;top:192.37px;width:33.9px;background:rgb(143,242,122)"><span>81.90</span></div>
<div class="cell" style="left:523.19px;top:192.37px;width:33.9px;background:rgb(145,241,122)"><span>92.30</span></div>
<div class="cell" style="left:558.12px;top:192.37px;width:33.9px;background:rgb(148,239,121)"><span>106.20</span></div>
<div class="cell" style="left:593.05px;top:192.37px;width:33.9px;background:rgb(149,238,120)"><span>111.70</span></div>
<div class="cell" style="left:627.98px;top:192.37px;width:33.9px;background:rgb(150,237,120)"><span>118.80</span></div>
<div class="cell" style="left:662.91px;top:192.37px;width:33.9px;background:rgb(151,236,120)"><span>122.80</span></div>
<div class="cell" style="left:697.84px;top:192.37px;width:33.9px;background:rgb(151,236,120)"><span>124.60</span></div>
<div class="cell" style="left:732.77px;top:192.37px;width:33.9px;background:rgb(152,235,119)"><span>127.70</span></div>
<div class="cell" style="left:767.70px;top:192.37px;width:33.9px;background:rgb(153,235,119)"><span>131.80</span></div>
<div class="cell" style="left:802.63px;top:192.37px;width:33.9px;background:rgb(153,234,119)"><span>133.50</span></div>
<div class="cell" style="left:837.56px;top:192.37px;width:33.9px;background:rgb(153,234,119)"><span>135.00</span></div>
<div class="cell" style="left:872.49px;top:192.37px;width:33.9px;background:rgb(153,234,119)"><span>135.60</span></div>
<div class="cell" style="left:907.42px;top:192.37px;width:33.9px;background:rgb(154,234,119)"><span>136.40</span></div>
<div class="cell" style="left:942.35px;top:192.37px;width:33.9px;background:rgb(153,234,119)"><span>135.60</span></div>
<div class="cell" style="left:977.28px;top:192.37px;width:33.9px;background:rgb(153,234,119)"><span>134.90</span></div>
<div class="cell" style="left:1012.21px;top:192.37px;width:33.9px;background:rgb(153,235,119)"><span>132.40</span></div>
<div class="cell" style="left:1047.14px;top:192.37px;width:33.9px;background:rgb(153,235,119)"><span>130.70</span></div>
<div class="cell" style="left:1082.07px;top:192.37px;width:33.9px;background:rgb(152,235,119)"><span>129.00</span></div>
<div class="cell" style="left:1117.00px;top:192.37px;width:33.9px;background:rgb(152,235,119)"><span>127.30</span></div>
<div class="cell" style="left:1151.93px;top:192.37px;width:33.9px;background:rgb(151,236,120)"><span>124.90</span></div>
<div class="cell" style="left:1186.86px;top:192.37px;width:33.9px;background:rgb(151,236,120)"><span>123.30</span></div>
<div class="cell" style="left:1221.79px;top:192.37px;width:33.9px;background:rgb(151,236,120)"><span>120.80</span></div>
<div class="cell" style="left:1256.72px;top:192.37px;width:33.9px;background:rgb(150,237,120)"><span>119.20</span></div>
<div class="cell" style="left:1291.65px;top:192.37px;width:33.9px;background:rgb(150,237,120)"><span>119.40</span></div>
<div class="cell" style="left:1326.58px;top:192.37px;width:33.9px;background:rgb(150,237,120)"><span>119.60</span></div>
<div class="cell" style="left:1361.51px;top:192.37px;width:33.9px;background:rgb(150,237,120)"><span>119.30</span></div>
<div class="cell" style="left:1396.44px;top:192.37px;width:33.9px;background:rgb(150,237,120)"><span>119.00</span></div>
<div class="cell" style="left:1431.37px;top:192.37px;width:33.9px;background:rgb(150,237,120)"><span>118.80</span></div>
<div class="hdr" style="left:384px;top:203.74px;width:33.4px;height:10.3px;background:#f1f1f1;border-top:1px solid #fff;border-bottom:0.8px solid #b8b8b8;text-align:right;padding-right:2.1px;line-height:10.4px"><span>17.99</span></div>
<div class="cell" style="left:418.40px;top:203.74px;width:33.9px;background:rgb(128,255,128)"><span>0.00</span></div>
<div class="cell" style="left:453.33px;top:203.74px;width:33.9px;background:rgb(138,247,124)"><span>52.80</span></div>
<div class="cell" style="left:488.26px;top:203.74px;width:33.9px;background:rgb(144,242,122)"><span>87.40</span></div>
<div class="cell" style="left:523.19px;top:203.74px;width:33.9px;background:rgb(147,240,121)"><span>100.40</span></div>
<div class="cell" style="left:558.12px;top:203.74px;width:33.9px;background:rgb(150,237,120)"><span>118.70</span></div>
<div class="cell" style="left:593.05px;top:203.74px;width:33.9px;background:rgb(152,235,119)"><span>127.30</span></div>
<div class="cell" style="left:627.98px;top:203.74px;width:33.9px;background:rgb(154,234,119)"><span>138.20</span></div>
<div class="cell" style="left:662.91px;top:203.74px;width:33.9px;background:rgb(155,233,118)"><span>143.70</span></div>
<div class="cell" style="left:697.84px;top:203.74px;width:33.9px;background:rgb(156,232,118)"><span>147.80</span></div>
<div class="cell" style="left:732.77px;top:203.74px;width:33.9px;background:rgb(157,231,118)"><span>154.90</span></div>
<div class="cell" style="left:767.70px;top:203.74px;width:33.9px;background:rgb(158,230,117)"><span>161.10</span></div>
<div class="cell" style="left:802.63px;top:203.74px;width:33.9px;background:rgb(159,229,117)"><span>168.30</span></div>
<div class="cell" style="left:837.56px;top:203.74px;width:33.9px;background:rgb(160,228,117)"><span>173.50</span></div>
<div class="cell" style="left:872.49px;top:203.74px;width:33.9px;background:rgb(161,228,116)"><span>176.30</span></div>
<div class="cell" style="left:907.42px;top:203.74px;width:33.9px;background:rgb(161,228,116)"><span>178.10</span></div>
<div class="cell" style="left:942.35px;top:203.74px;width:33.9px;background:rgb(161,227,116)"><span>179.30</span></div>
<div class="cell" style="left:977.28px;top:203.74px;width:33.9px;background:rgb(161,228,116)"><span>178.60</span></div>
<div class="cell" style="left:1012.21px;top:203.74px;width:33.9px;background:rgb(161,228,117)"><span>176.20</span></div>
<div class="cell" style="left:1047.14px;top:203.74px;width:33.9px;background:rgb(160,228,117)"><span>174.50</span></div>
<div class="cell" style="left:1082.07px;top:203.74px;width:33.9px;background:rgb(160,228,117)"><span>173.80</span></div>
<div class="cell" style="left:1117.00px;top:203.74px;width:33.9px;background:rgb(160,228,117)"><span>173.90</span></div>
<div class="cell" style="left:1151.93px;top:203.74px;width:33.9px;background:rgb(160,228,117)"><span>173.40</span></div>
<div class="cell" style="left:1186.86px;top:203.74px;width:33.9px;background:rgb(160,228,117)"><span>173.60</span></div>
<div class="cell" style="left:1221.79px;top:203.74px;width:33.9px;background:rgb(160,228,117)"><span>173.00</span></div>
<div class="cell" style="left:1256.72px;top:203.74px;width:33.9px;background:rgb(160,229,117)"><span>172.40</span></div>
<div class="cell" style="left:1291.65px;top:203.74px;width:33.9px;background:rgb(160,228,117)"><span>172.60</span></div>
<div class="cell" style="left:1326.58px;top:203.74px;width:33.9px;background:rgb(160,229,117)"><span>171.90</span></div>
<div class="cell" style="left:1361.51px;top:203.74px;width:33.9px;background:rgb(160,229,117)"><span>169.90</span></div>
<div class="cell" style="left:1396.44px;top:203.74px;width:33.9px;background:rgb(159,229,117)"><span>167.90</span></div>
<div class="cell" style="left:1431.37px;top:203.74px;width:33.9px;background:rgb(159,229,117)"><span>166.50</span></div>
<div class="hdr" style="left:384px;top:215.11px;width:33.4px;height:10.3px;background:#f1f1f1;border-top:1px solid #fff;border-bottom:0.8px solid #b8b8b8;text-align:right;padding-right:2.1px;line-height:10.4px"><span>21.00</span></div>
<div class="cell" style="left:418.40px;top:215.11px;width:33.9px;background:rgb(128,255,128)"><span>0.00</span></div>
<div class="cell" style="left:453.33px;top:215.11px;width:33.9px;background:rgb(138,247,124)"><span>53.60</span></div>
<div class="cell" style="left:488.26px;top:215.11px;width:33.9px;background:rgb(145,241,122)"><span>90.30</span></div>
<div class="cell" style="left:523.19px;top:215.11px;width:33.9px;background:rgb(148,239,121)"><span>106.40</span></div>
<div class="cell" style="left:558.12px;top:215.11px;width:33.9px;background:rgb(152,235,119)"><span>128.40</span></div>
<div class="cell" style="left:593.05px;top:215.11px;width:33.9px;background:rgb(154,234,119)"><span>138.50</span></div>
<div class="cell" style="left:627.98px;top:215.11px;width:33.9px;background:rgb(156,232,118)"><span>151.90</span></div>
<div class="cell" style="left:662.91px;top:215.11px;width:33.9px;background:rgb(158,230,117)"><span>161.90</span></div>
<div class="cell" style="left:697.84px;top:215.11px;width:33.9px;background:rgb(159,229,117)"><span>166.80</span></div>
<div class="cell" style="left:732.77px;top:215.11px;width:33.9px;background:rgb(161,228,116)"><span>177.60</span></div>
<div class="cell" style="left:767.70px;top:215.11px;width:33.9px;background:rgb(163,226,116)"><span>188.80</span></div>
<div class="cell" style="left:802.63px;top:215.11px;width:33.9px;background:rgb(165,224,115)"><span>199.50</span></div>
<div class="cell" style="left:837.56px;top:215.11px;width:33.9px;background:rgb(166,223,115)"><span>208.00</span></div>
<div class="cell" style="left:872.49px;top:215.11px;width:33.9px;background:rgb(168,222,114)"><span>214.40</span></div>
<div class="cell" style="left:907.42px;top:215.11px;width:33.9px;background:rgb(168,221,114)"><span>219.00</span></div>
<div class="cell" style="left:942.35px;top:215.11px;width:33.9px;background:rgb(169,221,114)"><span>222.40</span></div>
<div class="cell" style="left:977.28px;top:215.11px;width:33.9px;background:rgb(170,220,114)"><span>226.00</span></div>
<div class="cell" style="left:1012.21px;top:215.11px;width:33.9px;background:rgb(170,220,114)"><span>228.80</span></div>
<div class="cell" style="left:1047.14px;top:215.11px;width:33.9px;background:rgb(170,220,114)"><span>227.10</span></div>
<div class="cell" style="left:1082.07px;top:215.11px;width:33.9px;background:rgb(170,220,114)"><span>225.60</span></div>
<div class="cell" style="left:1117.00px;top:215.11px;width:33.9px;background:rgb(169,221,114)"><span>224.10</span></div>
<div class="cell" style="left:1151.93px;top:215.11px;width:33.9px;background:rgb(169,221,114)"><span>223.40</span></div>
<div class="cell" style="left:1186.86px;top:215.11px;width:33.9px;background:rgb(169,221,114)"><span>220.70</span></div>
<div class="cell" style="left:1221.79px;top:215.11px;width:33.9px;background:rgb(168,221,114)"><span>219.20</span></div>
<div class="cell" style="left:1256.72px;top:215.11px;width:33.9px;background:rgb(169,221,114)"><span>224.00</span></div>
<div class="cell" style="left:1291.65px;top:215.11px;width:33.9px;background:rgb(169,221,114)"><span>224.40</span></div>
<div class="cell" style="left:1326.58px;top:215.11px;width:33.9px;background:rgb(170,220,114)"><span>225.70</span></div>
<div class="cell" style="left:1361.51px;top:215.11px;width:33.9px;background:rgb(169,221,114)"><span>225.10</span></div>
<div class="cell" style="left:1396.44px;top:215.11px;width:33.9px;background:rgb(169,221,114)"><span>224.60</span></div>
<div class="cell" style="left:1431.37px;top:215.11px;width:33.9px;background:rgb(169,221,114)"><span>224.10</span></div>
<div class="hdr" style="left:384px;top:226.48px;width:33.4px;height:10.3px;background:#f1f1f1;border-top:1px solid #fff;border-bottom:0.8px solid #b8b8b8;text-align:right;padding-right:2.1px;line-height:10.4px"><span>24.51</span></div>
<div class="cell" style="left:1012.21px;top:226.48px;width:33.9px;background:rgb(180,212,111)"><span>285.30</span></div>
<div class="cell" style="left:1047.14px;top:226.48px;width:33.9px;background:rgb(181,210,111)"><span>295.30</span></div>
<div class="cell" style="left:1082.07px;top:226.48px;width:33.9px;background:rgb(181,210,111)"><span>292.80</span></div>
<div class="cell" style="left:1117.00px;top:226.48px;width:33.9px;background:rgb(181,210,111)"><span>293.50</span></div>
<div class="cell" style="left:1151.93px;top:226.48px;width:33.9px;background:rgb(181,210,111)"><span>294.20</span></div>
<div class="cell" style="left:1186.86px;top:226.48px;width:33.9px;background:rgb(181,210,111)"><span>293.40</span></div>
<div class="cell" style="left:1221.79px;top:226.48px;width:33.9px;background:rgb(181,211,111)"><span>289.90</span></div>
<div class="cell" style="left:1256.72px;top:226.48px;width:33.9px;background:rgb(181,210,111)"><span>293.40</span></div>
<div class="cell" style="left:1291.65px;top:226.48px;width:33.9px;background:rgb(182,210,111)"><span>297.40</span></div>
<div class="cell" style="left:1326.58px;top:226.48px;width:33.9px;background:rgb(182,210,111)"><span>298.70</span></div>
<div class="cell" style="left:1361.51px;top:226.48px;width:33.9px;background:rgb(182,210,111)"><span>298.50</span></div>
<div class="cell" style="left:1396.44px;top:226.48px;width:33.9px;background:rgb(182,210,111)"><span>298.30</span></div>
<div class="cell" style="left:1431.37px;top:226.48px;width:33.9px;background:rgb(182,210,111)"><span>297.60</span></div>
<div class="hdr" style="left:384px;top:237.85px;width:33.4px;height:10.3px;background:#f1f1f1;border-top:1px solid #fff;border-bottom:0.8px solid #b8b8b8;text-align:right;padding-right:2.1px;line-height:10.4px"><span>28.00</span></div>
<div class="cell" style="left:1012.21px;top:237.85px;width:33.9px;background:rgb(188,204,110)"><span>335.00</span></div>
<div class="cell" style="left:1047.14px;top:237.85px;width:33.9px;background:rgb(191,202,109)"><span>352.00</span></div>
<div class="cell" style="left:1082.07px;top:237.85px;width:33.9px;background:rgb(192,201,109)"><span>359.30</span></div>
<div class="cell" style="left:1117.00px;top:237.85px;width:33.9px;background:rgb(193,200,109)"><span>364.70</span></div>
<div class="cell" style="left:1151.93px;top:237.85px;width:33.9px;background:rgb(193,200,109)"><span>367.60</span></div>
<div class="cell" style="left:1186.86px;top:237.85px;width:33.9px;background:rgb(193,199,109)"><span>368.30</span></div>
<div class="cell" style="left:1221.79px;top:237.85px;width:33.9px;background:rgb(193,200,109)"><span>364.40</span></div>
<div class="cell" style="left:1256.72px;top:237.85px;width:33.9px;background:rgb(193,200,109)"><span>365.30</span></div>
<div class="cell" style="left:1291.65px;top:237.85px;width:33.9px;background:rgb(193,199,109)"><span>370.40</span></div>
<div class="cell" style="left:1326.58px;top:237.85px;width:33.9px;background:rgb(194,199,109)"><span>371.80</span></div>
<div class="cell" style="left:1361.51px;top:237.85px;width:33.9px;background:rgb(194,199,109)"><span>372.70</span></div>
<div class="cell" style="left:1396.44px;top:237.85px;width:33.9px;background:rgb(194,199,109)"><span>373.60</span></div>
<div class="cell" style="left:1431.37px;top:237.85px;width:33.9px;background:rgb(193,199,109)"><span>368.20</span></div>
<div class="hdr" style="left:384px;top:249.22px;width:33.4px;height:10.3px;background:#f1f1f1;border-top:1px solid #fff;border-bottom:0.8px solid #b8b8b8;text-align:right;padding-right:2.1px;line-height:10.4px"><span>32.00</span></div>
<div class="cell" style="left:1012.21px;top:249.22px;width:33.9px;background:rgb(196,196,108)"><span>388.80</span></div>
<div class="cell" style="left:1047.14px;top:249.22px;width:33.9px;background:rgb(200,193,108)"><span>415.10</span></div>
<div class="cell" style="left:1082.07px;top:249.22px;width:33.9px;background:rgb(202,190,108)"><span>430.80</span></div>
<div class="cell" style="left:1117.00px;top:249.22px;width:33.9px;background:rgb(204,189,108)"><span>444.30</span></div>
<div class="cell" style="left:1151.93px;top:249.22px;width:33.9px;background:rgb(205,188,108)"><span>448.80</span></div>
<div class="cell" style="left:1186.86px;top:249.22px;width:33.9px;background:rgb(206,187,108)"><span>456.70</span></div>
<div class="cell" style="left:1221.79px;top:249.22px;width:33.9px;background:rgb(206,187,108)"><span>452.80</span></div>
<div class="cell" style="left:1256.72px;top:249.22px;width:33.9px;background:rgb(206,187,108)"><span>455.90</span></div>
<div class="cell" style="left:1291.65px;top:249.22px;width:33.9px;background:rgb(207,186,108)"><span>459.60</span></div>
<div class="cell" style="left:1326.58px;top:249.22px;width:33.9px;background:rgb(207,186,108)"><span>459.50</span></div>
<div class="cell" style="left:1361.51px;top:249.22px;width:33.9px;background:rgb(207,186,108)"><span>462.80</span></div>
<div class="cell" style="left:1396.44px;top:249.22px;width:33.9px;background:rgb(207,186,108)"><span>466.10</span></div>
<div class="cell" style="left:1431.37px;top:249.22px;width:33.9px;background:rgb(207,186,108)"><span>462.40</span></div>
<div class="hdr" style="left:384px;top:260.59px;width:33.4px;height:10.3px;background:#f1f1f1;border-top:1px solid #fff;border-bottom:0.8px solid #b8b8b8;text-align:right;padding-right:2.1px;line-height:10.4px"><span>36.01</span></div>
<div class="cell" style="left:1012.21px;top:260.59px;width:33.9px;background:rgb(204,189,108)"><span>439.10</span></div>
<div class="cell" style="left:1047.14px;top:260.59px;width:33.9px;background:rgb(209,184,108)"><span>478.50</span></div>
<div class="cell" style="left:1082.07px;top:260.59px;width:33.9px;background:rgb(212,181,108)"><span>498.80</span></div>
<div class="cell" style="left:1117.00px;top:260.59px;width:33.9px;background:rgb(214,179,108)"><span>515.50</span></div>
<div class="cell" style="left:1151.93px;top:260.59px;width:33.9px;background:rgb(216,176,109)"><span>532.20</span></div>
<div class="cell" style="left:1186.86px;top:260.59px;width:33.9px;background:rgb(218,175,109)"><span>545.60</span></div>
<div class="cell" style="left:1221.79px;top:260.59px;width:33.9px;background:rgb(218,175,109)"><span>545.60</span></div>
<div class="cell" style="left:1256.72px;top:260.59px;width:33.9px;background:rgb(218,174,109)"><span>548.50</span></div>
<div class="cell" style="left:1291.65px;top:260.59px;width:33.9px;background:rgb(219,173,109)"><span>554.20</span></div>
<div class="cell" style="left:1326.58px;top:260.59px;width:33.9px;background:rgb(219,173,109)"><span>555.10</span></div>
<div class="cell" style="left:1361.51px;top:260.59px;width:33.9px;background:rgb(220,173,109)"><span>560.60</span></div>
<div class="cell" style="left:1396.44px;top:260.59px;width:33.9px;background:rgb(220,172,109)"><span>561.40</span></div>
<div class="cell" style="left:1431.37px;top:260.59px;width:33.9px;background:rgb(220,173,109)"><span>560.30</span></div>
<div class="hdr" style="left:384px;top:271.96px;width:33.4px;height:10.3px;background:#f1f1f1;border-top:1px solid #fff;border-bottom:0.8px solid #b8b8b8;text-align:right;padding-right:2.1px;line-height:10.4px"><span>42.00</span></div>
<div class="cell" style="left:1012.21px;top:271.96px;width:33.9px;background:rgb(210,183,108)"><span>483.10</span></div>
<div class="cell" style="left:1047.14px;top:271.96px;width:33.9px;background:rgb(217,176,109)"><span>536.20</span></div>
<div class="cell" style="left:1082.07px;top:271.96px;width:33.9px;background:rgb(221,171,110)"><span>569.10</span></div>
<div class="cell" style="left:1117.00px;top:271.96px;width:33.9px;background:rgb(224,168,110)"><span>592.10</span></div>
<div class="cell" style="left:1151.93px;top:271.96px;width:33.9px;background:rgb(227,164,111)"><span>620.90</span></div>
<div class="cell" style="left:1186.86px;top:271.96px;width:33.9px;background:rgb(229,161,112)"><span>643.60</span></div>
<div class="cell" style="left:1221.79px;top:271.96px;width:33.9px;background:rgb(231,160,113)"><span>654.20</span></div>
<div class="cell" style="left:1256.72px;top:271.96px;width:33.9px;background:rgb(231,160,113)"><span>655.10</span></div>
<div class="cell" style="left:1291.65px;top:271.96px;width:33.9px;background:rgb(232,158,113)"><span>666.50</span></div>
<div class="cell" style="left:1326.58px;top:271.96px;width:33.9px;background:rgb(232,158,114)"><span>671.40</span></div>
<div class="cell" style="left:1361.51px;top:271.96px;width:33.9px;background:rgb(233,157,114)"><span>679.60</span></div>
<div class="cell" style="left:1396.44px;top:271.96px;width:33.9px;background:rgb(233,157,114)"><span>681.10</span></div>
<div class="cell" style="left:1431.37px;top:271.96px;width:33.9px;background:rgb(233,157,114)"><span>676.20</span></div>
<div class="hdr" style="left:384px;top:283.33px;width:33.4px;height:10.3px;background:#f1f1f1;border-top:1px solid #fff;border-bottom:0.8px solid #b8b8b8;text-align:right;padding-right:2.1px;line-height:10.4px"><span>50.00</span></div>
<div class="cell" style="left:1012.21px;top:283.33px;width:33.9px;background:rgb(213,180,108)"><span>504.60</span></div>
<div class="cell" style="left:1047.14px;top:283.33px;width:33.9px;background:rgb(220,172,110)"><span>565.80</span></div>
<div class="cell" style="left:1082.07px;top:283.33px;width:33.9px;background:rgb(226,165,111)"><span>615.30</span></div>
<div class="cell" style="left:1117.00px;top:283.33px;width:33.9px;background:rgb(231,160,113)"><span>654.40</span></div>
<div class="cell" style="left:1151.93px;top:283.33px;width:33.9px;background:rgb(235,154,115)"><span>696.90</span></div>
<div class="cell" style="left:1186.86px;top:283.33px;width:33.9px;background:rgb(238,151,116)"><span>724.10</span></div>
<div class="cell" style="left:1221.79px;top:283.33px;width:33.9px;background:rgb(240,148,117)"><span>744.40</span></div>
<div class="cell" style="left:1256.72px;top:283.33px;width:33.9px;background:rgb(240,148,118)"><span>747.30</span></div>
<div class="cell" style="left:1291.65px;top:283.33px;width:33.9px;background:rgb(241,147,118)"><span>753.60</span></div>
<div class="cell" style="left:1326.58px;top:283.33px;width:33.9px;background:rgb(241,146,118)"><span>759.90</span></div>
<div class="cell" style="left:1361.51px;top:283.33px;width:33.9px;background:rgb(243,145,119)"><span>773.10</span></div>
<div class="cell" style="left:1396.44px;top:283.33px;width:33.9px;background:rgb(243,144,120)"><span>780.60</span></div>
<div class="cell" style="left:1431.37px;top:283.33px;width:33.9px;background:rgb(243,144,119)"><span>774.80</span></div>
<div class="hdr" style="left:384px;top:294.70px;width:33.4px;height:10.3px;background:#f1f1f1;border-top:1px solid #fff;border-bottom:0.8px solid #b8b8b8;text-align:right;padding-right:2.1px;line-height:10.4px"><span>58.00</span></div>
<div class="cell" style="left:1012.21px;top:294.70px;width:33.9px;background:rgb(215,178,109)"><span>520.10</span></div>
<div class="cell" style="left:1047.14px;top:294.70px;width:33.9px;background:rgb(223,169,110)"><span>588.10</span></div>
<div class="cell" style="left:1082.07px;top:294.70px;width:33.9px;background:rgb(229,162,112)"><span>640.90</span></div>
<div class="cell" style="left:1117.00px;top:294.70px;width:33.9px;background:rgb(233,157,114)"><span>678.60</span></div>
<div class="cell" style="left:1151.93px;top:294.70px;width:33.9px;background:rgb(239,149,117)"><span>735.90</span></div>
<div class="cell" style="left:1186.86px;top:294.70px;width:33.9px;background:rgb(243,145,119)"><span>773.00</span></div>
<div class="cell" style="left:1221.79px;top:294.70px;width:33.9px;background:rgb(247,139,122)"><span>814.20</span></div>
<div class="cell" style="left:1256.72px;top:294.70px;width:33.9px;background:rgb(247,139,122)"><span>820.30</span></div>
<div class="cell" style="left:1291.65px;top:294.70px;width:33.9px;background:rgb(248,138,123)"><span>828.30</span></div>
<div class="cell" style="left:1326.58px;top:294.70px;width:33.9px;background:rgb(248,137,123)"><span>833.30</span></div>
<div class="cell" style="left:1361.51px;top:294.70px;width:33.9px;background:rgb(250,135,124)"><span>846.20</span></div>
<div class="cell" style="left:1396.44px;top:294.70px;width:33.9px;background:rgb(251,134,125)"><span>859.10</span></div>
<div class="cell" style="left:1431.37px;top:294.70px;width:33.9px;background:rgb(250,135,124)"><span>846.50</span></div>
<div class="hdr" style="left:384px;top:306.07px;width:33.4px;height:10.3px;background:#f1f1f1;border-top:1px solid #fff;border-bottom:0.8px solid #b8b8b8;text-align:right;padding-right:2.1px;line-height:10.4px"><span>72.00</span></div>
<div class="cell" style="left:1012.21px;top:306.07px;width:33.9px;background:rgb(216,177,109)"><span>529.90</span></div>
<div class="cell" style="left:1047.14px;top:306.07px;width:33.9px;background:rgb(225,167,111)"><span>601.90</span></div>
<div class="cell" style="left:1082.07px;top:306.07px;width:33.9px;background:rgb(231,159,113)"><span>662.00</span></div>
<div class="cell" style="left:1117.00px;top:306.07px;width:33.9px;background:rgb(236,153,115)"><span>704.60</span></div>
<div class="cell" style="left:1151.93px;top:306.07px;width:33.9px;background:rgb(242,146,119)"><span>765.20</span></div>
<div class="cell" style="left:1186.86px;top:306.07px;width:33.9px;background:rgb(246,141,121)"><span>802.20</span></div>
<div class="cell" style="left:1221.79px;top:306.07px;width:33.9px;background:rgb(249,136,123)"><span>837.30</span></div>
<div class="cell" style="left:1256.72px;top:306.07px;width:33.9px;background:rgb(250,135,124)"><span>846.50</span></div>
<div class="cell" style="left:1291.65px;top:306.07px;width:33.9px;background:rgb(250,134,124)"><span>852.70</span></div>
<div class="cell" style="left:1326.58px;top:306.07px;width:33.9px;background:rgb(251,134,125)"><span>855.30</span></div>
<div class="cell" style="left:1361.51px;top:306.07px;width:33.9px;background:rgb(252,132,126)"><span>872.20</span></div>
<div class="cell" style="left:1396.44px;top:306.07px;width:33.9px;background:rgb(253,131,126)"><span>881.60</span></div>
<div class="cell" style="left:1431.37px;top:306.07px;width:33.9px;background:rgb(253,130,127)"><span>884.30</span></div>
<div class="hdr" style="left:384px;top:317.44px;width:33.4px;height:10.3px;background:#f1f1f1;border-top:1px solid #fff;border-bottom:0.8px solid #b8b8b8;text-align:right;padding-right:2.1px;line-height:10.4px"><span>85.01</span></div>
<div class="cell" style="left:1012.21px;top:317.44px;width:33.9px;background:rgb(217,176,109)"><span>534.50</span></div>
<div class="cell" style="left:1047.14px;top:317.44px;width:33.9px;background:rgb(226,166,111)"><span>609.30</span></div>
<div class="cell" style="left:1082.07px;top:317.44px;width:33.9px;background:rgb(232,158,113)"><span>669.00</span></div>
<div class="cell" style="left:1117.00px;top:317.44px;width:33.9px;background:rgb(237,152,116)"><span>718.30</span></div>
<div class="cell" style="left:1151.93px;top:317.44px;width:33.9px;background:rgb(243,144,120)"><span>778.00</span></div>
<div class="cell" style="left:1186.86px;top:317.44px;width:33.9px;background:rgb(247,139,122)"><span>815.50</span></div>
<div class="cell" style="left:1221.79px;top:317.44px;width:33.9px;background:rgb(250,135,124)"><span>851.00</span></div>
<div class="cell" style="left:1256.72px;top:317.44px;width:33.9px;background:rgb(251,133,125)"><span>861.80</span></div>
<div class="cell" style="left:1291.65px;top:317.44px;width:33.9px;background:rgb(252,133,125)"><span>866.10</span></div>
<div class="cell" style="left:1326.58px;top:317.44px;width:33.9px;background:rgb(252,133,125)"><span>866.60</span></div>
<div class="cell" style="left:1361.51px;top:317.44px;width:33.9px;background:rgb(253,130,127)"><span>887.20</span></div>
<div class="cell" style="left:1396.44px;top:317.44px;width:33.9px;background:rgb(254,129,127)"><span>895.50</span></div>
<div class="cell" style="left:1431.37px;top:317.44px;width:33.9px;background:rgb(254,129,127)"><span>892.70</span></div>
<div class="hdr" style="left:384px;top:328.81px;width:33.4px;height:10.3px;background:#f1f1f1;border-top:1px solid #fff;border-bottom:0.8px solid #b8b8b8;text-align:right;padding-right:2.1px;line-height:10.4px"><span>100.00</span></div>
<div class="cell" style="left:1012.21px;top:328.81px;width:33.9px;background:rgb(217,175,109)"><span>539.50</span></div>
<div class="cell" style="left:1047.14px;top:328.81px;width:33.9px;background:rgb(226,165,111)"><span>617.20</span></div>
<div class="cell" style="left:1082.07px;top:328.81px;width:33.9px;background:rgb(233,157,114)"><span>676.40</span></div>
<div class="cell" style="left:1117.00px;top:328.81px;width:33.9px;background:rgb(238,150,117)"><span>728.40</span></div>
<div class="cell" style="left:1151.93px;top:328.81px;width:33.9px;background:rgb(244,143,120)"><span>786.70</span></div>
<div class="cell" style="left:1186.86px;top:328.81px;width:33.9px;background:rgb(248,138,123)"><span>824.30</span></div>
<div class="cell" style="left:1221.79px;top:328.81px;width:33.9px;background:rgb(251,134,125)"><span>859.30</span></div>
<div class="cell" style="left:1256.72px;top:328.81px;width:33.9px;background:rgb(252,132,126)"><span>871.80</span></div>
<div class="cell" style="left:1291.65px;top:328.81px;width:33.9px;background:rgb(252,132,126)"><span>873.80</span></div>
<div class="cell" style="left:1326.58px;top:328.81px;width:33.9px;background:rgb(253,131,126)"><span>878.60</span></div>
<div class="cell" style="left:1361.51px;top:328.81px;width:33.9px;background:rgb(254,130,127)"><span>891.20</span></div>
<div class="cell" style="left:1396.44px;top:328.81px;width:33.9px;background:rgb(255,128,128)"><span>903.90</span></div>
<div class="cell" style="left:1431.37px;top:328.81px;width:33.9px;background:rgb(254,130,127)"><span>889.40</span></div>
<div class="abs" style="left:417.8px;top:66.6px;width:35.3px;height:11.6px;border:1px solid #303030"></div>
<div class="abs" style="left:382.4px;top:339.8px;width:1064px;height:24px;background:#404040"></div>
<div class="abs" style="left:376.6px;top:363.6px;width:1070px;height:19.2px;background:linear-gradient(#fff 0,#f1f1f1 2px,#f1f1f1 100%)"></div>
<div class="abs" style="left:376.6px;top:382.6px;width:1070px;height:5.2px;background:#d6e3f2"></div>
<div class="abs" style="left:376.6px;top:387.8px;width:1070px;height:1px;background:#6e6e6e"></div>
<div class="abs" style="left:380px;top:227.4px;width:655.4px;height:445.4px;background:#fff;border-radius:7px;box-shadow:0 3px 14px rgba(0,0,0,0.45),0 0 0 0.6px rgba(90,90,90,0.55);overflow:hidden">
<div class="abs" style="left:0;top:0;width:100%;height:21.6px;background:#ebf4f7"></div>
<div class="abs" style="left:0;top:36.8px;width:100%;height:20px;background:#f1f1f1"></div>
<div class="abs" style="left:0;top:428.6px;width:100%;height:17px;background:#f1f1f1;border-top:0.8px solid #d9d9d9"></div>
<div class="abs" style="left:97.4px;top:430px;width:0.8px;height:14px;background:#d0d0d0"></div>
<div class="abs" style="left:196.3px;top:430px;width:0.8px;height:14px;background:#d0d0d0"></div>
<div class="abs" style="left:294.5px;top:430px;width:0.8px;height:14px;background:#d0d0d0"></div>
</div>
<svg class="abs" style="left:385.2px;top:232.6px" width="14" height="12"><rect x="0.5" y="2.2" width="11.6" height="7" fill="#0a0a0a"/><rect x="1.0" y="0.8" width="1.2" height="9.8" fill="#0a0a0a"/><rect x="2.9" y="0.8" width="1.2" height="9.8" fill="#0a0a0a"/><rect x="4.8" y="0.8" width="1.2" height="9.8" fill="#0a0a0a"/><rect x="6.7" y="0.8" width="1.2" height="9.8" fill="#0a0a0a"/><rect x="8.6" y="0.8" width="1.2" height="9.8" fill="#0a0a0a"/><rect x="10.5" y="0.8" width="1.2" height="9.8" fill="#0a0a0a"/></svg>
<div class="t" style="left:401.4px;top:233.8px;font-size:8.93px;color:#111">Real mass flow over throttle valve 1</div>
<svg class="abs" style="left:940px;top:228px" width="95" height="21"><path d="M5.4 10.2h7.4" stroke="#222" stroke-width="0.8"/><rect x="39.2" y="6.2" width="6.6" height="6.6" rx="1" fill="none" stroke="#222" stroke-width="0.8"/><path d="M74.2 6l7 7M81.2 6l-7 7" stroke="#222" stroke-width="0.8"/></svg>
<div class="t" style="left:385px;top:252.8px;font-size:8.7px;color:#111">Graph</div>
<div class="t" style="left:420.4px;top:252.8px;font-size:8.7px;color:#111">View</div>
<div class="abs" style="left:414.4px;top:266px;width:17.8px;height:17px;background:#cde4f7;border-radius:1.5px"></div>
<div class="abs" style="left:449.4px;top:266px;width:17.8px;height:17px;background:#cde4f7;border-radius:1.5px"></div>
<div class="abs" style="left:484.2px;top:266px;width:17.8px;height:17px;background:#cde4f7;border-radius:1.5px"></div>
<svg class="abs" style="left:380px;top:264px" width="130" height="21"><path d="M2.6 3v15" stroke="#c6c6c6" stroke-width="0.9"/><path d="M10.4 6.2L17.6 15.2M17.6 6.2L10.4 15.2" stroke="#e81010" stroke-width="1.6"/><path d="M30.4 3v15" stroke="#a0a0a0" stroke-width="0.9"/><path d="M43.3 5.4l5.2 5.2-5.2 5.2-5.2-5.2z" fill="#fff" stroke="#111" stroke-width="1.3"/><circle cx="43.3" cy="10.6" r="2.3" fill="#e01010"/><path d="M43.3 4.4v12.4M37 10.6h12.6" stroke="#111" stroke-width="1"/><path d="M55.6 14.6l3-4.6 2.8 2.6 3-4.6 2.6 1.8" stroke="#2020ff" stroke-width="1.3" fill="none"/><circle cx="56.6" cy="9.4" r="1.1" fill="#e01010"/><circle cx="61" cy="14" r="1.1" fill="#e01010"/><circle cx="65.4" cy="6.6" r="1.1" fill="#e01010"/><circle cx="67" cy="12.6" r="1.1" fill="#e01010"/><path d="M72.6 5v10.6h11.6" stroke="#111" stroke-width="1" fill="none"/><path d="M73.4 12.4l2.6-4 2.4 2.4 2.6-4.4 2.6 3.4" stroke="#2020ff" stroke-width="1.3" fill="none"/><path d="M73.4 14l2.8-2 2.6 1.4 2.6-2.6 2.4 1.6" stroke="#e01010" stroke-width="1.2" fill="none"/><path d="M89.6 15.4l3-4.2h8.8v4.2zM92.6 11.2l2.6-4h6.2v4M96 15.4l2.6-4.2M95.2 7.2" stroke="#111" stroke-width="1.1" fill="#fff"/><rect x="107" y="6.2" width="9" height="1.9" fill="#e04040"/><rect x="107" y="8.7" width="9" height="1.9" fill="#e0c020"/><rect x="107" y="11.2" width="9" height="1.9" fill="#30b040"/><rect x="107" y="13.6" width="9" height="1.7" fill="#3050e0"/><path d="M117.6 4.6v11.6" stroke="#111" stroke-width="1.1"/><path d="M116 6.4l1.6-1.8M116 14.6l1.6 1.6" stroke="#111" stroke-width="0.9"/></svg>
<svg class="abs" style="left:380px;top:284px" width="655" height="372" viewBox="380 284 655 372" font-family="Liberation Sans, sans-serif"><path d="M563.1 573.3L702.8 496.3M572.4 577.0L712.1 500.0M576.1 578.5L715.8 501.5M580.7 580.4L720.4 503.4M583.5 581.5L723.2 504.5M588.1 583.4L727.8 506.4M590.9 584.5L730.6 507.5M592.8 585.2L732.5 508.2M597.4 587.1L737.1 510.1M602.0 589.0L741.7 512.0M606.7 590.8L746.4 513.8M611.3 592.7L751.0 515.7M615.9 594.6L755.6 517.6M620.6 596.4L760.3 519.4M625.2 598.3L764.9 521.3M629.8 600.2L769.5 523.2M639.1 603.9L778.8 526.9M643.7 605.8L783.4 528.8M648.4 607.6L788.1 530.6M653.0 609.5L792.7 532.5M662.3 613.2L802.0 536.2M668.8 615.8L808.5 538.8M676.2 618.8L815.9 541.8M685.4 622.6L825.1 545.6M690.1 624.4L829.8 547.4M694.7 626.3L834.4 549.3M699.3 628.2L839.0 551.2M704.0 630.0L843.7 553.0M708.6 631.9L848.3 554.9M713.2 633.8L852.9 556.8M557.1 569.5L720.2 635.2M559.2 568.4L722.3 634.1M559.9 568.0L723.0 633.7M560.6 567.6L723.7 633.3M561.3 567.2L724.4 632.9M562.7 566.4L725.8 632.1M564.1 565.7L727.2 631.4M565.5 564.9L728.6 630.6M568.3 563.4L731.4 629.1M572.5 561.1L735.6 626.8M576.6 558.8L739.7 624.5M580.8 556.4L743.9 622.1M585.0 554.1L748.1 619.8M589.9 551.4L753.0 617.1M594.8 548.7L757.9 614.4M600.4 545.7L763.5 611.4M606.0 542.6L769.1 608.3M614.4 538.0L777.5 603.7M625.6 531.8L788.6 597.5M636.7 525.6L799.8 591.3M656.3 514.9L819.4 580.6M674.5 504.8L837.6 570.5" stroke="#a0a0a0" stroke-width="0.7" stroke-dasharray="2.2 2.6" fill="none"/><path d="M555.7 532.6L695.4 455.6L858.5 521.3M555.7 494.9L695.4 417.9L858.5 483.6M555.7 457.2L695.4 380.2L858.5 445.9M555.7 419.5L695.4 342.5L858.5 408.2" stroke="#909090" stroke-width="0.8" stroke-dasharray="2.6 2.6" fill="none"/><path d="M555.7 381.8L695.4 304.8L858.5 370.5M555.7 570.3L695.4 493.3L858.5 559.0M555.7 570.3L718.8 636.0L858.5 559.0M555.7 570.3V381.8M695.4 493.3V304.8M858.5 559.0V370.5" stroke="#8a8a8a" stroke-width="0.8" fill="none"/><g stroke="#000" stroke-width="0.75" stroke-linejoin="round"><path d="M674.5 504.8L681.9 494.1L702.8 482.5L695.4 493.3Z" fill="#0025ff"/><path d="M681.9 494.1L691.1 487.4L712.1 475.8L702.8 482.5Z" fill="#0066ff"/><path d="M691.1 487.4L694.8 484.1L715.8 472.5L712.1 475.8Z" fill="#008fff"/><path d="M694.8 484.1L699.5 479.5L720.4 467.9L715.8 472.5Z" fill="#00aeff"/><path d="M699.5 479.5L702.3 477.5L723.2 466.0L720.4 467.9Z" fill="#00c8ff"/><path d="M702.3 477.5L706.9 473.6L727.8 462.0L723.2 466.0Z" fill="#00e0ff"/><path d="M706.9 473.6L709.7 471.3L730.6 459.6L727.8 462.0Z" fill="#00f9ff"/><path d="M709.7 471.3L711.5 469.7L732.5 458.0L730.6 459.6Z" fill="#00fff5"/><path d="M711.5 469.7L716.2 465.8L737.1 454.1L732.5 458.0Z" fill="#00ffdf"/><path d="M716.2 465.8L720.8 462.2L741.7 450.5L737.1 454.1Z" fill="#00ffc0"/><path d="M720.8 462.2L725.4 458.6L746.4 446.9L741.7 450.5Z" fill="#00ffa3"/><path d="M725.4 458.6L730.1 455.1L751.0 443.3L746.4 446.9Z" fill="#00ff85"/><path d="M730.1 455.1L734.7 451.1L755.6 439.2L751.0 443.3Z" fill="#00ff66"/><path d="M734.7 451.1L739.3 447.4L760.3 435.4L755.6 439.2Z" fill="#00ff47"/><path d="M739.3 447.4L744.0 444.4L764.9 432.4L760.3 435.4Z" fill="#00ff2b"/><path d="M744.0 444.4L748.6 440.7L769.5 428.5L764.9 432.4Z" fill="#00ff0e"/><path d="M748.6 440.7L757.9 427.0L778.8 414.4L769.5 428.5Z" fill="#30ff00"/><path d="M757.9 427.0L762.5 413.2L783.4 400.1L778.8 414.4Z" fill="#8aff00"/><path d="M762.5 413.2L767.1 402.7L788.1 389.6L783.4 400.1Z" fill="#d7ff00"/><path d="M767.1 402.7L771.8 394.2L792.7 380.6L788.1 389.6Z" fill="#ffe800"/><path d="M771.8 394.2L781.0 385.5L802.0 372.2L792.7 380.6Z" fill="#ffaa00"/><path d="M781.0 385.5L787.5 380.3L808.5 366.9L802.0 372.2Z" fill="#ff7300"/><path d="M787.5 380.3L794.9 375.9L815.9 362.6L808.5 366.9Z" fill="#ff4a00"/><path d="M794.9 375.9L804.2 377.4L825.1 363.8L815.9 362.6Z" fill="#ff3000"/><path d="M804.2 377.4L808.8 378.4L829.8 365.2L825.1 363.8Z" fill="#ff2800"/><path d="M808.8 378.4L813.5 380.1L834.4 366.1L829.8 365.2Z" fill="#ff2400"/><path d="M813.5 380.1L818.1 377.7L839.0 365.3L834.4 366.1Z" fill="#ff1900"/><path d="M818.1 377.7L822.7 377.8L843.7 364.5L839.0 365.3Z" fill="#ff0a00"/><path d="M822.7 377.8L827.4 380.3L848.3 369.4L843.7 364.5Z" fill="#ff0900"/><path d="M827.4 380.3L832.0 382.7L852.9 372.4L848.3 369.4Z" fill="#ff1000"/><path d="M832.0 382.7L837.6 385.4L858.5 376.1L852.9 372.4Z" fill="#ff1500"/><path d="M656.3 514.9L663.7 504.1L681.9 494.1L674.5 504.8Z" fill="#0025ff"/><path d="M663.7 504.1L673.0 497.4L691.1 487.4L681.9 494.1Z" fill="#0066ff"/><path d="M673.0 497.4L676.7 494.1L694.8 484.1L691.1 487.4Z" fill="#008fff"/><path d="M676.7 494.1L681.3 489.6L699.5 479.5L694.8 484.1Z" fill="#00aeff"/><path d="M681.3 489.6L684.1 487.6L702.3 477.5L699.5 479.5Z" fill="#00c7ff"/><path d="M684.1 487.6L688.7 483.7L706.9 473.6L702.3 477.5Z" fill="#00dfff"/><path d="M688.7 483.7L691.5 481.4L709.7 471.3L706.9 473.6Z" fill="#00f8ff"/><path d="M691.5 481.4L693.4 479.8L711.5 469.7L709.7 471.3Z" fill="#00fff5"/><path d="M693.4 479.8L698.0 476.0L716.2 465.8L711.5 469.7Z" fill="#00ffdf"/><path d="M698.0 476.0L702.6 472.4L720.8 462.2L716.2 465.8Z" fill="#00ffc1"/><path d="M702.6 472.4L707.3 468.9L725.4 458.6L720.8 462.2Z" fill="#00ffa4"/><path d="M707.3 468.9L711.9 465.4L730.1 455.1L725.4 458.6Z" fill="#00ff86"/><path d="M711.9 465.4L716.5 461.5L734.7 451.1L730.1 455.1Z" fill="#00ff68"/><path d="M716.5 461.5L721.2 457.8L739.3 447.4L734.7 451.1Z" fill="#00ff49"/><path d="M721.2 457.8L725.8 455.0L744.0 444.4L739.3 447.4Z" fill="#00ff2d"/><path d="M725.8 455.0L730.4 451.3L748.6 440.7L744.0 444.4Z" fill="#00ff11"/><path d="M730.4 451.3L739.7 438.0L757.9 427.0L748.6 440.7Z" fill="#2bff00"/><path d="M739.7 438.0L744.3 424.8L762.5 413.2L757.9 427.0Z" fill="#83ff00"/><path d="M744.3 424.8L749.0 414.1L767.1 402.7L762.5 413.2Z" fill="#cfff00"/><path d="M749.0 414.1L753.6 407.1L771.8 394.2L767.1 402.7Z" fill="#fff300"/><path d="M753.6 407.1L762.9 398.2L781.0 385.5L771.8 394.2Z" fill="#ffb700"/><path d="M762.9 398.2L769.3 393.1L787.5 380.3L781.0 385.5Z" fill="#ff8000"/><path d="M769.3 393.1L776.8 388.8L794.9 375.9L787.5 380.3Z" fill="#ff5700"/><path d="M776.8 388.8L786.0 390.6L804.2 377.4L794.9 375.9Z" fill="#ff3d00"/><path d="M786.0 390.6L790.7 391.2L808.8 378.4L804.2 377.4Z" fill="#ff3500"/><path d="M790.7 391.2L795.3 392.5L813.5 380.1L808.8 378.4Z" fill="#ff3100"/><path d="M795.3 392.5L799.9 390.8L818.1 377.7L813.5 380.1Z" fill="#ff2500"/><path d="M799.9 390.8L804.6 390.7L822.7 377.8L818.1 377.7Z" fill="#ff1600"/><path d="M804.6 390.7L809.2 392.0L827.4 380.3L822.7 377.8Z" fill="#ff1100"/><path d="M809.2 392.0L813.8 393.6L832.0 382.7L827.4 380.3Z" fill="#ff1100"/><path d="M813.8 393.6L819.4 395.6L837.6 385.4L832.0 382.7Z" fill="#ff1200"/><path d="M636.7 525.6L644.1 514.9L663.7 504.1L656.3 514.9Z" fill="#0025ff"/><path d="M644.1 514.9L653.4 508.2L673.0 497.4L663.7 504.1Z" fill="#0066ff"/><path d="M653.4 508.2L657.1 504.9L676.7 494.1L673.0 497.4Z" fill="#008fff"/><path d="M657.1 504.9L661.7 500.4L681.3 489.6L676.7 494.1Z" fill="#00adff"/><path d="M661.7 500.4L664.5 498.5L684.1 487.6L681.3 489.6Z" fill="#00c7ff"/><path d="M664.5 498.5L669.2 494.6L688.7 483.7L684.1 487.6Z" fill="#00dfff"/><path d="M669.2 494.6L671.9 492.3L691.5 481.4L688.7 483.7Z" fill="#00f8ff"/><path d="M671.9 492.3L673.8 490.8L693.4 479.8L691.5 481.4Z" fill="#00fff6"/><path d="M673.8 490.8L678.4 487.0L698.0 476.0L693.4 479.8Z" fill="#00ffe0"/><path d="M678.4 487.0L683.1 483.5L702.6 472.4L698.0 476.0Z" fill="#00ffc2"/><path d="M683.1 483.5L687.7 480.1L707.3 468.9L702.6 472.4Z" fill="#00ffa5"/><path d="M687.7 480.1L692.3 476.7L711.9 465.4L707.3 468.9Z" fill="#00ff89"/><path d="M692.3 476.7L697.0 473.0L716.5 461.5L711.9 465.4Z" fill="#00ff6b"/><path d="M697.0 473.0L701.6 469.5L721.2 457.8L716.5 461.5Z" fill="#00ff4d"/><path d="M701.6 469.5L706.2 466.8L725.8 455.0L721.2 457.8Z" fill="#00ff31"/><path d="M706.2 466.8L710.9 463.3L730.4 451.3L725.8 455.0Z" fill="#00ff16"/><path d="M710.9 463.3L720.1 450.8L739.7 438.0L730.4 451.3Z" fill="#25ff00"/><path d="M720.1 450.8L724.8 438.5L744.3 424.8L739.7 438.0Z" fill="#79ff00"/><path d="M724.8 438.5L729.4 429.3L749.0 414.1L744.3 424.8Z" fill="#c1ff00"/><path d="M729.4 429.3L734.0 423.3L753.6 407.1L749.0 414.1Z" fill="#f7ff00"/><path d="M734.0 423.3L743.3 415.1L762.9 398.2L753.6 407.1Z" fill="#ffce00"/><path d="M743.3 415.1L749.8 410.0L769.3 393.1L762.9 398.2Z" fill="#ff9800"/><path d="M749.8 410.0L757.2 404.4L776.8 388.8L769.3 393.1Z" fill="#ff6d00"/><path d="M757.2 404.4L766.5 406.8L786.0 390.6L776.8 388.8Z" fill="#ff5300"/><path d="M766.5 406.8L771.1 407.0L790.7 391.2L786.0 390.6Z" fill="#ff4b00"/><path d="M771.1 407.0L775.7 407.9L795.3 392.5L790.7 391.2Z" fill="#ff4500"/><path d="M775.7 407.9L780.4 407.0L799.9 390.8L795.3 392.5Z" fill="#ff3a00"/><path d="M780.4 407.0L785.0 406.2L804.6 390.7L799.9 390.8Z" fill="#ff2c00"/><path d="M785.0 406.2L789.6 410.7L809.2 392.0L804.6 390.7Z" fill="#ff2800"/><path d="M789.6 410.7L794.3 414.2L813.8 393.6L809.2 392.0Z" fill="#ff2d00"/><path d="M794.3 414.2L799.8 418.2L819.4 395.6L813.8 393.6Z" fill="#ff3000"/><path d="M625.6 531.8L633.0 521.1L644.1 514.9L636.7 525.6Z" fill="#0025ff"/><path d="M633.0 521.1L642.2 514.4L653.4 508.2L644.1 514.9Z" fill="#0066ff"/><path d="M642.2 514.4L645.9 511.2L657.1 504.9L653.4 508.2Z" fill="#008fff"/><path d="M645.9 511.2L650.6 506.7L661.7 500.4L657.1 504.9Z" fill="#00adff"/><path d="M650.6 506.7L653.4 504.8L664.5 498.5L661.7 500.4Z" fill="#00c6ff"/><path d="M653.4 504.8L658.0 501.0L669.2 494.6L664.5 498.5Z" fill="#00deff"/><path d="M658.0 501.0L660.8 498.8L671.9 492.3L669.2 494.6Z" fill="#00f7ff"/><path d="M660.8 498.8L662.6 497.2L673.8 490.8L671.9 492.3Z" fill="#00fff7"/><path d="M662.6 497.2L667.3 493.6L678.4 487.0L673.8 490.8Z" fill="#00ffe2"/><path d="M667.3 493.6L671.9 490.3L683.1 483.5L678.4 487.0Z" fill="#00ffc4"/><path d="M671.9 490.3L676.5 487.0L687.7 480.1L683.1 483.5Z" fill="#00ffa8"/><path d="M676.5 487.0L681.2 483.9L692.3 476.7L687.7 480.1Z" fill="#00ff8c"/><path d="M681.2 483.9L685.8 480.3L697.0 473.0L692.3 476.7Z" fill="#00ff6f"/><path d="M685.8 480.3L690.4 477.1L701.6 469.5L697.0 473.0Z" fill="#00ff52"/><path d="M690.4 477.1L695.1 474.6L706.2 466.8L701.6 469.5Z" fill="#00ff38"/><path d="M695.1 474.6L699.7 471.5L710.9 463.3L706.2 466.8Z" fill="#00ff1e"/><path d="M699.7 471.5L709.0 460.2L720.1 450.8L710.9 463.3Z" fill="#19ff00"/><path d="M709.0 460.2L713.6 449.3L724.8 438.5L720.1 450.8Z" fill="#68ff00"/><path d="M713.6 449.3L718.2 440.8L729.4 429.3L724.8 438.5Z" fill="#a9ff00"/><path d="M718.2 440.8L722.9 434.5L734.0 423.3L729.4 429.3Z" fill="#dcff00"/><path d="M722.9 434.5L732.1 429.4L743.3 415.1L734.0 423.3Z" fill="#ffef00"/><path d="M732.1 429.4L738.6 426.3L749.8 410.0L743.3 415.1Z" fill="#ffc100"/><path d="M738.6 426.3L746.0 425.1L757.2 404.4L749.8 410.0Z" fill="#ff9d00"/><path d="M746.0 425.1L755.3 428.2L766.5 406.8L757.2 404.4Z" fill="#ff8a00"/><path d="M755.3 428.2L759.9 428.8L771.1 407.0L766.5 406.8Z" fill="#ff8300"/><path d="M759.9 428.8L764.6 429.3L775.7 407.9L771.1 407.0Z" fill="#ff7c00"/><path d="M764.6 429.3L769.2 428.4L780.4 407.0L775.7 407.9Z" fill="#ff7100"/><path d="M769.2 428.4L773.8 428.7L785.0 406.2L780.4 407.0Z" fill="#ff6400"/><path d="M773.8 428.7L778.5 431.8L789.6 410.7L785.0 406.2Z" fill="#ff6400"/><path d="M778.5 431.8L783.1 434.4L794.3 414.2L789.6 410.7Z" fill="#ff6c00"/><path d="M783.1 434.4L788.6 437.5L799.8 418.2L794.3 414.2Z" fill="#ff7300"/><path d="M614.4 538.0L621.8 527.2L633.0 521.1L625.6 531.8Z" fill="#0025ff"/><path d="M621.8 527.2L631.1 520.6L642.2 514.4L633.0 521.1Z" fill="#0066ff"/><path d="M631.1 520.6L634.8 517.4L645.9 511.2L642.2 514.4Z" fill="#008fff"/><path d="M634.8 517.4L639.4 513.0L650.6 506.7L645.9 511.2Z" fill="#00acff"/><path d="M639.4 513.0L642.2 511.2L653.4 504.8L650.6 506.7Z" fill="#00c6ff"/><path d="M642.2 511.2L646.8 507.5L658.0 501.0L653.4 504.8Z" fill="#00ddff"/><path d="M646.8 507.5L649.6 505.3L660.8 498.8L658.0 501.0Z" fill="#00f5ff"/><path d="M649.6 505.3L651.4 503.9L662.6 497.2L660.8 498.8Z" fill="#00fff9"/><path d="M651.4 503.9L656.1 500.4L667.3 493.6L662.6 497.2Z" fill="#00ffe4"/><path d="M656.1 500.4L660.7 497.3L671.9 490.3L667.3 493.6Z" fill="#00ffc8"/><path d="M660.7 497.3L665.3 494.3L676.5 487.0L671.9 490.3Z" fill="#00ffad"/><path d="M665.3 494.3L670.0 491.4L681.2 483.9L676.5 487.0Z" fill="#00ff92"/><path d="M670.0 491.4L674.6 488.2L685.8 480.3L681.2 483.9Z" fill="#00ff76"/><path d="M674.6 488.2L679.2 485.3L690.4 477.1L685.8 480.3Z" fill="#00ff5b"/><path d="M679.2 485.3L683.9 483.2L695.1 474.6L690.4 477.1Z" fill="#00ff42"/><path d="M683.9 483.2L688.5 480.5L699.7 471.5L695.1 474.6Z" fill="#00ff2a"/><path d="M688.5 480.5L697.8 470.8L709.0 460.2L699.7 471.5Z" fill="#08ff00"/><path d="M697.8 470.8L702.4 461.6L713.6 449.3L709.0 460.2Z" fill="#4fff00"/><path d="M702.4 461.6L707.0 456.6L718.2 440.8L713.6 449.3Z" fill="#87ff00"/><path d="M707.0 456.6L711.7 453.7L722.9 434.5L718.2 440.8Z" fill="#afff00"/><path d="M711.7 453.7L720.9 451.4L732.1 429.4L722.9 434.5Z" fill="#d5ff00"/><path d="M720.9 451.4L727.4 449.3L738.6 426.3L732.1 429.4Z" fill="#f7ff00"/><path d="M727.4 449.3L734.8 450.1L746.0 425.1L738.6 426.3Z" fill="#ffef00"/><path d="M734.8 450.1L744.1 453.6L755.3 428.2L746.0 425.1Z" fill="#ffe500"/><path d="M744.1 453.6L748.7 453.1L759.9 428.8L755.3 428.2Z" fill="#ffdf00"/><path d="M748.7 453.1L753.4 453.9L764.6 429.3L759.9 428.8Z" fill="#ffd700"/><path d="M753.4 453.9L758.0 454.1L769.2 428.4L764.6 429.3Z" fill="#ffce00"/><path d="M758.0 454.1L762.6 455.7L773.8 428.7L769.2 428.4Z" fill="#ffc500"/><path d="M762.6 455.7L767.3 458.5L778.5 431.8L773.8 428.7Z" fill="#ffc600"/><path d="M767.3 458.5L771.9 461.0L783.1 434.4L778.5 431.8Z" fill="#ffcb00"/><path d="M771.9 461.0L777.5 464.0L788.6 437.5L783.1 434.4Z" fill="#ffcf00"/><path d="M606.0 542.6L613.4 531.9L621.8 527.2L614.4 538.0Z" fill="#0025ff"/><path d="M613.4 531.9L622.7 525.4L631.1 520.6L621.8 527.2Z" fill="#0066ff"/><path d="M622.7 525.4L626.4 522.3L634.8 517.4L631.1 520.6Z" fill="#008eff"/><path d="M626.4 522.3L631.0 518.1L639.4 513.0L634.8 517.4Z" fill="#00abff"/><path d="M631.0 518.1L633.8 516.3L642.2 511.2L639.4 513.0Z" fill="#00c4ff"/><path d="M633.8 516.3L638.4 512.9L646.8 507.5L642.2 511.2Z" fill="#00daff"/><path d="M638.4 512.9L641.2 511.0L649.6 505.3L646.8 507.5Z" fill="#00f1ff"/><path d="M641.2 511.0L643.1 509.7L651.4 503.9L649.6 505.3Z" fill="#00fffd"/><path d="M643.1 509.7L647.7 506.6L656.1 500.4L651.4 503.9Z" fill="#00ffea"/><path d="M647.7 506.6L652.3 504.0L660.7 497.3L656.1 500.4Z" fill="#00ffcf"/><path d="M652.3 504.0L657.0 501.5L665.3 494.3L660.7 497.3Z" fill="#00ffb6"/><path d="M657.0 501.5L661.6 499.1L670.0 491.4L665.3 494.3Z" fill="#00ff9d"/><path d="M661.6 499.1L666.2 496.6L674.6 488.2L670.0 491.4Z" fill="#00ff84"/><path d="M666.2 496.6L670.9 494.5L679.2 485.3L674.6 488.2Z" fill="#00ff6b"/><path d="M670.9 494.5L675.5 493.1L683.9 483.2L679.2 485.3Z" fill="#00ff56"/><path d="M675.5 493.1L680.1 491.2L688.5 480.5L683.9 483.2Z" fill="#00ff41"/><path d="M680.1 491.2L689.4 484.6L697.8 470.8L688.5 480.5Z" fill="#00ff15"/><path d="M689.4 484.6L694.0 478.2L702.4 461.6L697.8 470.8Z" fill="#24ff00"/><path d="M694.0 478.2L698.7 475.9L707.0 456.6L702.4 461.6Z" fill="#4dff00"/><path d="M698.7 475.9L703.3 474.3L711.7 453.7L707.0 456.6Z" fill="#67ff00"/><path d="M703.3 474.3L712.6 474.5L720.9 451.4L711.7 453.7Z" fill="#7fff00"/><path d="M712.6 474.5L719.1 474.3L727.4 449.3L720.9 451.4Z" fill="#96ff00"/><path d="M719.1 474.3L726.5 477.3L734.8 450.1L727.4 449.3Z" fill="#a3ff00"/><path d="M726.5 477.3L735.7 480.4L744.1 453.6L734.8 450.1Z" fill="#a8ff00"/><path d="M735.7 480.4L740.4 481.1L748.7 453.1L744.1 453.6Z" fill="#adff00"/><path d="M740.4 481.1L745.0 482.8L753.4 453.9L748.7 453.1Z" fill="#b4ff00"/><path d="M745.0 482.8L749.6 483.5L758.0 454.1L753.4 453.9Z" fill="#b9ff00"/><path d="M749.6 483.5L754.3 485.2L762.6 455.7L758.0 454.1Z" fill="#beff00"/><path d="M754.3 485.2L758.9 487.3L767.3 458.5L762.6 455.7Z" fill="#bdff00"/><path d="M758.9 487.3L763.5 489.3L771.9 461.0L767.3 458.5Z" fill="#baff00"/><path d="M763.5 489.3L769.1 491.7L777.5 464.0L771.9 461.0Z" fill="#b8ff00"/><path d="M600.4 545.7L607.8 535.0L613.4 531.9L606.0 542.6Z" fill="#0024ff"/><path d="M607.8 535.0L617.1 528.7L622.7 525.4L613.4 531.9Z" fill="#0065ff"/><path d="M617.1 528.7L620.8 525.7L626.4 522.3L622.7 525.4Z" fill="#008dff"/><path d="M620.8 525.7L625.4 521.8L631.0 518.1L626.4 522.3Z" fill="#00a9ff"/><path d="M625.4 521.8L628.2 520.3L633.8 516.3L631.0 518.1Z" fill="#00c0ff"/><path d="M628.2 520.3L632.8 517.2L638.4 512.9L633.8 516.3Z" fill="#00d6ff"/><path d="M632.8 517.2L635.6 515.6L641.2 511.0L638.4 512.9Z" fill="#00ebff"/><path d="M635.6 515.6L637.5 514.5L643.1 509.7L641.2 511.0Z" fill="#00f8ff"/><path d="M637.5 514.5L642.1 512.0L647.7 506.6L643.1 509.7Z" fill="#00fff3"/><path d="M642.1 512.0L646.7 509.9L652.3 504.0L647.7 506.6Z" fill="#00ffdb"/><path d="M646.7 509.9L651.4 508.1L657.0 501.5L652.3 504.0Z" fill="#00ffc4"/><path d="M651.4 508.1L656.0 506.5L661.6 499.1L657.0 501.5Z" fill="#00ffaf"/><path d="M656.0 506.5L660.6 504.8L666.2 496.6L661.6 499.1Z" fill="#00ff9a"/><path d="M660.6 504.8L665.3 503.5L670.9 494.5L666.2 496.6Z" fill="#00ff86"/><path d="M665.3 503.5L669.9 502.9L675.5 493.1L670.9 494.5Z" fill="#00ff74"/><path d="M669.9 502.9L674.5 501.9L680.1 491.2L675.5 493.1Z" fill="#00ff63"/><path d="M674.5 501.9L683.8 498.2L689.4 484.6L680.1 491.2Z" fill="#00ff43"/><path d="M683.8 498.2L688.4 494.6L694.0 478.2L689.4 484.6Z" fill="#00ff18"/><path d="M688.4 494.6L693.1 493.2L698.7 475.9L694.0 478.2Z" fill="#04ff00"/><path d="M693.1 493.2L697.7 492.2L703.3 474.3L698.7 475.9Z" fill="#17ff00"/><path d="M697.7 492.2L707.0 495.0L712.6 474.5L703.3 474.3Z" fill="#25ff00"/><path d="M707.0 495.0L713.5 496.0L719.1 474.3L712.6 474.5Z" fill="#31ff00"/><path d="M713.5 496.0L720.9 499.8L726.5 477.3L719.1 474.3Z" fill="#36ff00"/><path d="M720.9 499.8L730.1 502.8L735.7 480.4L726.5 477.3Z" fill="#37ff00"/><path d="M730.1 502.8L734.8 503.9L740.4 481.1L735.7 480.4Z" fill="#3bff00"/><path d="M734.8 503.9L739.4 505.8L745.0 482.8L740.4 481.1Z" fill="#3eff00"/><path d="M739.4 505.8L744.0 507.0L749.6 483.5L745.0 482.8Z" fill="#40ff00"/><path d="M744.0 507.0L748.7 508.2L754.3 485.2L749.6 483.5Z" fill="#44ff00"/><path d="M748.7 508.2L753.3 510.8L758.9 487.3L754.3 485.2Z" fill="#44ff00"/><path d="M753.3 510.8L757.9 513.1L763.5 489.3L758.9 487.3Z" fill="#42ff00"/><path d="M757.9 513.1L763.5 515.9L769.1 491.7L763.5 489.3Z" fill="#40ff00"/><path d="M594.8 548.7L602.2 538.2L607.8 535.0L600.4 545.7Z" fill="#0024ff"/><path d="M602.2 538.2L611.5 532.1L617.1 528.7L607.8 535.0Z" fill="#0064ff"/><path d="M611.5 532.1L615.2 529.4L620.8 525.7L617.1 528.7Z" fill="#008bff"/><path d="M615.2 529.4L619.8 525.9L625.4 521.8L620.8 525.7Z" fill="#00a5ff"/><path d="M619.8 525.9L622.6 524.5L628.2 520.3L625.4 521.8Z" fill="#00bbff"/><path d="M622.6 524.5L627.3 522.1L632.8 517.2L628.2 520.3Z" fill="#00cfff"/><path d="M627.3 522.1L630.0 520.8L635.6 515.6L632.8 517.2Z" fill="#00e2ff"/><path d="M630.0 520.8L631.9 519.9L637.5 514.5L635.6 515.6Z" fill="#00eeff"/><path d="M631.9 519.9L636.5 518.1L642.1 512.0L637.5 514.5Z" fill="#00feff"/><path d="M636.5 518.1L641.2 516.8L646.7 509.9L642.1 512.0Z" fill="#00ffeb"/><path d="M641.2 516.8L645.8 515.7L651.4 508.1L646.7 509.9Z" fill="#00ffd8"/><path d="M645.8 515.7L650.4 514.9L656.0 506.5L651.4 508.1Z" fill="#00ffc7"/><path d="M650.4 514.9L655.1 514.1L660.6 504.8L656.0 506.5Z" fill="#00ffb6"/><path d="M655.1 514.1L659.7 513.6L665.3 503.5L660.6 504.8Z" fill="#00ffa7"/><path d="M659.7 513.6L664.3 513.7L669.9 502.9L665.3 503.5Z" fill="#00ff99"/><path d="M664.3 513.7L669.0 513.6L674.5 501.9L669.9 502.9Z" fill="#00ff8d"/><path d="M669.0 513.6L678.2 512.5L683.8 498.2L674.5 501.9Z" fill="#00ff76"/><path d="M678.2 512.5L682.9 510.8L688.4 494.6L683.8 498.2Z" fill="#00ff59"/><path d="M682.9 510.8L687.5 511.1L693.1 493.2L688.4 494.6Z" fill="#00ff46"/><path d="M687.5 511.1L692.1 511.9L697.7 492.2L693.1 493.2Z" fill="#00ff3a"/><path d="M692.1 511.9L701.4 515.0L707.0 495.0L697.7 492.2Z" fill="#00ff33"/><path d="M701.4 515.0L707.9 517.5L713.5 496.0L707.0 495.0Z" fill="#00ff2e"/><path d="M707.9 517.5L715.3 521.3L720.9 499.8L713.5 496.0Z" fill="#00ff2e"/><path d="M715.3 521.3L724.6 524.8L730.1 502.8L720.9 499.8Z" fill="#00ff2f"/><path d="M724.6 524.8L729.2 525.6L734.8 503.9L730.1 502.8Z" fill="#00ff2c"/><path d="M729.2 525.6L733.8 527.2L739.4 505.8L734.8 503.9Z" fill="#00ff29"/><path d="M733.8 527.2L738.5 528.9L744.0 507.0L739.4 505.8Z" fill="#00ff27"/><path d="M738.5 528.9L743.1 530.6L748.7 508.2L744.0 507.0Z" fill="#00ff25"/><path d="M743.1 530.6L747.7 533.5L753.3 510.8L748.7 508.2Z" fill="#00ff26"/><path d="M747.7 533.5L752.4 536.1L757.9 513.1L753.3 510.8Z" fill="#00ff2a"/><path d="M752.4 536.1L757.9 539.1L763.5 515.9L757.9 513.1Z" fill="#00ff2e"/><path d="M589.9 551.4L597.4 540.9L602.2 538.2L594.8 548.7Z" fill="#0024ff"/><path d="M597.4 540.9L606.6 535.3L611.5 532.1L602.2 538.2Z" fill="#0063ff"/><path d="M606.6 535.3L610.3 532.8L615.2 529.4L611.5 532.1Z" fill="#0088ff"/><path d="M610.3 532.8L615.0 529.9L619.8 525.9L615.2 529.4Z" fill="#00a0ff"/><path d="M615.0 529.9L617.7 528.8L622.6 524.5L619.8 525.9Z" fill="#00b4ff"/><path d="M617.7 528.8L622.4 527.0L627.3 522.1L622.6 524.5Z" fill="#00c6ff"/><path d="M622.4 527.0L625.2 526.1L630.0 520.8L627.3 522.1Z" fill="#00d6ff"/><path d="M625.2 526.1L627.0 525.5L631.9 519.9L630.0 520.8Z" fill="#00e0ff"/><path d="M627.0 525.5L631.6 524.5L636.5 518.1L631.9 519.9Z" fill="#00edff"/><path d="M631.6 524.5L636.3 523.9L641.2 516.8L636.5 518.1Z" fill="#00feff"/><path d="M636.3 523.9L640.9 523.5L645.8 515.7L641.2 516.8Z" fill="#00fff0"/><path d="M640.9 523.5L645.5 523.4L650.4 514.9L645.8 515.7Z" fill="#00ffe3"/><path d="M645.5 523.4L650.2 523.4L655.1 514.1L650.4 514.9Z" fill="#00ffd7"/><path d="M650.2 523.4L654.8 523.7L659.7 513.6L655.1 514.1Z" fill="#00ffcb"/><path d="M654.8 523.7L659.4 524.3L664.3 513.7L659.7 513.6Z" fill="#00ffc2"/><path d="M659.4 524.3L664.1 524.9L669.0 513.6L664.3 513.7Z" fill="#00ffba"/><path d="M664.1 524.9L673.3 525.5L678.2 512.5L669.0 513.6Z" fill="#00ffaa"/><path d="M673.3 525.5L678.0 525.3L682.9 510.8L678.2 512.5Z" fill="#00ff98"/><path d="M678.0 525.3L682.6 527.7L687.5 511.1L682.9 510.8Z" fill="#00ff8f"/><path d="M682.6 527.7L687.2 529.4L692.1 511.9L687.5 511.1Z" fill="#00ff8c"/><path d="M687.2 529.4L696.5 533.0L701.4 515.0L692.1 511.9Z" fill="#00ff89"/><path d="M696.5 533.0L703.0 535.8L707.9 517.5L701.4 515.0Z" fill="#00ff88"/><path d="M703.0 535.8L710.4 539.5L715.3 521.3L707.9 517.5Z" fill="#00ff8a"/><path d="M710.4 539.5L719.7 542.5L724.6 524.8L715.3 521.3Z" fill="#00ff8b"/><path d="M719.7 542.5L724.3 543.5L729.2 525.6L724.6 524.8Z" fill="#00ff87"/><path d="M724.3 543.5L728.9 545.1L733.8 527.2L729.2 525.6Z" fill="#00ff84"/><path d="M728.9 545.1L733.6 547.0L738.5 528.9L733.8 527.2Z" fill="#00ff83"/><path d="M733.6 547.0L738.2 548.9L743.1 530.6L738.5 528.9Z" fill="#00ff83"/><path d="M738.2 548.9L742.8 551.0L747.7 533.5L743.1 530.6Z" fill="#00ff84"/><path d="M742.8 551.0L747.5 552.9L752.4 536.1L747.7 533.5Z" fill="#00ff87"/><path d="M747.5 552.9L753.0 555.3L757.9 539.1L752.4 536.1Z" fill="#00ff89"/><path d="M585.0 554.1L592.5 545.9L597.4 540.9L589.9 551.4Z" fill="#0021ff"/><path d="M592.5 545.9L601.7 542.0L606.6 535.3L597.4 540.9Z" fill="#0059ff"/><path d="M601.7 542.0L605.4 540.2L610.3 532.8L606.6 535.3Z" fill="#007aff"/><path d="M605.4 540.2L610.1 537.4L615.0 529.9L610.3 532.8Z" fill="#0091ff"/><path d="M610.1 537.4L612.8 536.4L617.7 528.8L615.0 529.9Z" fill="#00a3ff"/><path d="M612.8 536.4L617.5 535.5L622.4 527.0L617.7 528.8Z" fill="#00b2ff"/><path d="M617.5 535.5L620.3 534.6L625.2 526.1L622.4 527.0Z" fill="#00c0ff"/><path d="M620.3 534.6L622.1 534.3L627.0 525.5L625.2 526.1Z" fill="#00c9ff"/><path d="M622.1 534.3L626.7 533.9L631.6 524.5L627.0 525.5Z" fill="#00d3ff"/><path d="M626.7 533.9L631.4 533.4L636.3 523.9L631.6 524.5Z" fill="#00e1ff"/><path d="M631.4 533.4L636.0 533.1L640.9 523.5L636.3 523.9Z" fill="#00edff"/><path d="M636.0 533.1L640.6 533.2L645.5 523.4L640.9 523.5Z" fill="#00f8ff"/><path d="M640.6 533.2L645.3 533.7L650.2 523.4L645.5 523.4Z" fill="#00fffb"/><path d="M645.3 533.7L649.9 534.6L654.8 523.7L650.2 523.4Z" fill="#00fff4"/><path d="M649.9 534.6L654.5 535.7L659.4 524.3L654.8 523.7Z" fill="#00ffee"/><path d="M654.5 535.7L659.2 536.9L664.1 524.9L659.4 524.3Z" fill="#00ffe8"/><path d="M659.2 536.9L668.4 540.0L673.3 525.5L664.1 524.9Z" fill="#00ffe0"/><path d="M668.4 540.0L673.1 542.2L678.0 525.3L673.3 525.5Z" fill="#00ffd9"/><path d="M673.1 542.2L677.7 544.4L682.6 527.7L678.0 525.3Z" fill="#00ffd8"/><path d="M677.7 544.4L682.3 546.6L687.2 529.4L682.6 527.7Z" fill="#00ffd9"/><path d="M682.3 546.6L691.6 550.5L696.5 533.0L687.2 529.4Z" fill="#00ffd9"/><path d="M691.6 550.5L698.1 553.6L703.0 535.8L696.5 533.0Z" fill="#00ffda"/><path d="M698.1 553.6L705.5 556.9L710.4 539.5L703.0 535.8Z" fill="#00ffdd"/><path d="M705.5 556.9L714.8 559.7L719.7 542.5L710.4 539.5Z" fill="#00ffdc"/><path d="M714.8 559.7L719.4 561.5L724.3 543.5L719.7 542.5Z" fill="#00ffd8"/><path d="M719.4 561.5L724.0 563.1L728.9 545.1L724.3 543.5Z" fill="#00ffd6"/><path d="M724.0 563.1L728.7 565.0L733.6 547.0L728.9 545.1Z" fill="#00ffd6"/><path d="M728.7 565.0L733.3 567.0L738.2 548.9L733.6 547.0Z" fill="#00ffd6"/><path d="M733.3 567.0L737.9 569.0L742.8 551.0L738.2 548.9Z" fill="#00ffd7"/><path d="M737.9 569.0L742.6 570.9L747.5 552.9L742.8 551.0Z" fill="#00ffd7"/><path d="M742.6 570.9L748.1 573.2L753.0 555.3L747.5 552.9Z" fill="#00ffd8"/><path d="M580.8 556.4L588.2 548.4L592.5 545.9L585.0 554.1Z" fill="#001eff"/><path d="M588.2 548.4L597.5 544.9L601.7 542.0L592.5 545.9Z" fill="#0050ff"/><path d="M597.5 544.9L601.2 543.7L605.4 540.2L601.7 542.0Z" fill="#006cff"/><path d="M601.2 543.7L605.9 541.8L610.1 537.4L605.4 540.2Z" fill="#0080ff"/><path d="M605.9 541.8L608.6 541.1L612.8 536.4L610.1 537.4Z" fill="#0090ff"/><path d="M608.6 541.1L613.3 540.7L617.5 535.5L612.8 536.4Z" fill="#009cff"/><path d="M613.3 540.7L616.0 540.7L620.3 534.6L617.5 535.5Z" fill="#00a8ff"/><path d="M616.0 540.7L617.9 540.6L622.1 534.3L620.3 534.6Z" fill="#00aeff"/><path d="M617.9 540.6L622.5 540.9L626.7 533.9L622.1 534.3Z" fill="#00b6ff"/><path d="M622.5 540.9L627.2 541.5L631.4 533.4L626.7 533.9Z" fill="#00c0ff"/><path d="M627.2 541.5L631.8 541.9L636.0 533.1L631.4 533.4Z" fill="#00caff"/><path d="M631.8 541.9L636.4 542.7L640.6 533.2L636.0 533.1Z" fill="#00d3ff"/><path d="M636.4 542.7L641.1 543.9L645.3 533.7L640.6 533.2Z" fill="#00d9ff"/><path d="M641.1 543.9L645.7 545.4L649.9 534.6L645.3 533.7Z" fill="#00deff"/><path d="M645.7 545.4L650.3 547.1L654.5 535.7L649.9 534.6Z" fill="#00e1ff"/><path d="M650.3 547.1L655.0 549.1L659.2 536.9L654.5 535.7Z" fill="#00e3ff"/><path d="M655.0 549.1L664.2 553.3L668.4 540.0L659.2 536.9Z" fill="#00e4ff"/><path d="M664.2 553.3L668.9 555.5L673.1 542.2L668.4 540.0Z" fill="#00e3ff"/><path d="M668.9 555.5L673.5 557.5L677.7 544.4L673.1 542.2Z" fill="#00e1ff"/><path d="M673.5 557.5L678.1 559.4L682.3 546.6L677.7 544.4Z" fill="#00e0ff"/><path d="M678.1 559.4L687.4 563.2L691.6 550.5L682.3 546.6Z" fill="#00e0ff"/><path d="M687.4 563.2L693.9 565.8L698.1 553.6L691.6 550.5Z" fill="#00dfff"/><path d="M693.9 565.8L701.3 568.9L705.5 556.9L698.1 553.6Z" fill="#00ddff"/><path d="M701.3 568.9L710.6 572.8L714.8 559.7L705.5 556.9Z" fill="#00deff"/><path d="M710.6 572.8L715.2 574.6L719.4 561.5L714.8 559.7Z" fill="#00dfff"/><path d="M715.2 574.6L719.8 576.6L724.0 563.1L719.4 561.5Z" fill="#00e0ff"/><path d="M719.8 576.6L724.5 578.9L728.7 565.0L724.0 563.1Z" fill="#00dfff"/><path d="M724.5 578.9L729.1 581.2L733.3 567.0L728.7 565.0Z" fill="#00deff"/><path d="M729.1 581.2L733.7 583.3L737.9 569.0L733.3 567.0Z" fill="#00dcff"/><path d="M733.7 583.3L738.4 585.4L742.6 570.9L737.9 569.0Z" fill="#00dcff"/><path d="M738.4 585.4L743.9 587.8L748.1 573.2L742.6 570.9Z" fill="#00dbff"/><path d="M576.6 558.8L584.1 551.1L588.2 548.4L580.8 556.4Z" fill="#001dff"/><path d="M584.1 551.1L593.3 548.4L597.5 544.9L588.2 548.4Z" fill="#004dff"/><path d="M593.3 548.4L597.0 547.7L601.2 543.7L597.5 544.9Z" fill="#0066ff"/><path d="M597.0 547.7L601.7 546.7L605.9 541.8L601.2 543.7Z" fill="#0075ff"/><path d="M601.7 546.7L604.4 546.7L608.6 541.1L605.9 541.8Z" fill="#0082ff"/><path d="M604.4 546.7L609.1 547.0L613.3 540.7L608.6 541.1Z" fill="#008bff"/><path d="M609.1 547.0L611.9 547.3L616.0 540.7L613.3 540.7Z" fill="#0093ff"/><path d="M611.9 547.3L613.7 547.7L617.9 540.6L616.0 540.7Z" fill="#0098ff"/><path d="M613.7 547.7L618.3 548.9L622.5 540.9L617.9 540.6Z" fill="#009cff"/><path d="M618.3 548.9L623.0 549.9L627.2 541.5L622.5 540.9Z" fill="#00a2ff"/><path d="M623.0 549.9L627.6 551.4L631.8 541.9L627.2 541.5Z" fill="#00a7ff"/><path d="M627.6 551.4L632.2 553.0L636.4 542.7L631.8 541.9Z" fill="#00acff"/><path d="M632.2 553.0L636.9 554.7L641.1 543.9L636.4 542.7Z" fill="#00afff"/><path d="M636.9 554.7L641.5 556.4L645.7 545.4L641.1 543.9Z" fill="#00b0ff"/><path d="M641.5 556.4L646.1 558.5L650.3 547.1L645.7 545.4Z" fill="#00b1ff"/><path d="M646.1 558.5L650.8 560.5L655.0 549.1L650.3 547.1Z" fill="#00b1ff"/><path d="M650.8 560.5L660.0 564.7L664.2 553.3L655.0 549.1Z" fill="#00afff"/><path d="M660.0 564.7L664.7 567.0L668.9 555.5L664.2 553.3Z" fill="#00adff"/><path d="M664.7 567.0L669.3 569.2L673.5 557.5L668.9 555.5Z" fill="#00abff"/><path d="M669.3 569.2L673.9 571.4L678.1 559.4L673.5 557.5Z" fill="#00aaff"/><path d="M673.9 571.4L683.2 575.6L687.4 563.2L678.1 559.4Z" fill="#00a9ff"/><path d="M683.2 575.6L689.7 578.6L693.9 565.8L687.4 563.2Z" fill="#00a7ff"/><path d="M689.7 578.6L697.1 582.1L701.3 568.9L693.9 565.8Z" fill="#00a6ff"/><path d="M697.1 582.1L706.4 586.2L710.6 572.8L701.3 568.9Z" fill="#00a5ff"/><path d="M706.4 586.2L711.0 588.0L715.2 574.6L710.6 572.8Z" fill="#00a4ff"/><path d="M711.0 588.0L715.6 589.8L719.8 576.6L715.2 574.6Z" fill="#00a4ff"/><path d="M715.6 589.8L720.3 591.7L724.5 578.9L719.8 576.6Z" fill="#00a3ff"/><path d="M720.3 591.7L724.9 593.7L729.1 581.2L724.5 578.9Z" fill="#00a2ff"/><path d="M724.9 593.7L729.5 595.6L733.7 583.3L729.1 581.2Z" fill="#00a1ff"/><path d="M729.5 595.6L734.2 597.5L738.4 585.4L733.7 583.3Z" fill="#00a0ff"/><path d="M734.2 597.5L739.7 599.7L743.9 587.8L738.4 585.4Z" fill="#00a0ff"/><path d="M572.5 561.1L579.9 553.7L584.1 551.1L576.6 558.8Z" fill="#001cff"/><path d="M579.9 553.7L589.2 552.5L593.3 548.4L584.1 551.1Z" fill="#0048ff"/><path d="M589.2 552.5L592.9 552.6L597.0 547.7L593.3 548.4Z" fill="#005cff"/><path d="M592.9 552.6L597.5 553.0L601.7 546.7L597.0 547.7Z" fill="#0067ff"/><path d="M597.5 553.0L600.3 553.5L604.4 546.7L601.7 546.7Z" fill="#006fff"/><path d="M600.3 553.5L604.9 554.7L609.1 547.0L604.4 546.7Z" fill="#0074ff"/><path d="M604.9 554.7L607.7 555.6L611.9 547.3L609.1 547.0Z" fill="#0079ff"/><path d="M607.7 555.6L609.5 556.3L613.7 547.7L611.9 547.3Z" fill="#007bff"/><path d="M609.5 556.3L614.2 558.1L618.3 548.9L613.7 547.7Z" fill="#007cff"/><path d="M614.2 558.1L618.8 559.9L623.0 549.9L618.3 548.9Z" fill="#007eff"/><path d="M618.8 559.9L623.4 561.8L627.6 551.4L623.0 549.9Z" fill="#0080ff"/><path d="M623.4 561.8L628.1 563.6L632.2 553.0L627.6 551.4Z" fill="#0081ff"/><path d="M628.1 563.6L632.7 565.4L636.9 554.7L632.2 553.0Z" fill="#0082ff"/><path d="M632.7 565.4L637.3 567.2L641.5 556.4L636.9 554.7Z" fill="#0082ff"/><path d="M637.3 567.2L642.0 569.1L646.1 558.5L641.5 556.4Z" fill="#0082ff"/><path d="M642.0 569.1L646.6 570.9L650.8 560.5L646.1 558.5Z" fill="#0082ff"/><path d="M646.6 570.9L655.9 574.5L660.0 564.7L650.8 560.5Z" fill="#0081ff"/><path d="M655.9 574.5L660.5 576.3L664.7 567.0L660.0 564.7Z" fill="#0080ff"/><path d="M660.5 576.3L665.1 578.2L669.3 569.2L664.7 567.0Z" fill="#007fff"/><path d="M665.1 578.2L669.8 580.0L673.9 571.4L669.3 569.2Z" fill="#007fff"/><path d="M669.8 580.0L679.0 583.6L683.2 575.6L673.9 571.4Z" fill="#007eff"/><path d="M679.0 583.6L685.5 586.2L689.7 578.6L683.2 575.6Z" fill="#007dff"/><path d="M685.5 586.2L692.9 589.1L697.1 582.1L689.7 578.6Z" fill="#007cff"/><path d="M692.9 589.1L702.2 592.8L706.4 586.2L697.1 582.1Z" fill="#007bff"/><path d="M702.2 592.8L706.9 594.6L711.0 588.0L706.4 586.2Z" fill="#007aff"/><path d="M706.9 594.6L711.5 596.4L715.6 589.8L711.0 588.0Z" fill="#007bff"/><path d="M711.5 596.4L716.1 598.2L720.3 591.7L715.6 589.8Z" fill="#007bff"/><path d="M716.1 598.2L720.8 600.1L724.9 593.7L720.3 591.7Z" fill="#007bff"/><path d="M720.8 600.1L725.4 601.9L729.5 595.6L724.9 593.7Z" fill="#007bff"/><path d="M725.4 601.9L730.0 603.7L734.2 597.5L729.5 595.6Z" fill="#007bff"/><path d="M730.0 603.7L735.6 606.0L739.7 599.7L734.2 597.5Z" fill="#007bff"/><path d="M568.3 563.4L575.7 556.9L579.9 553.7L572.5 561.1Z" fill="#001aff"/><path d="M575.7 556.9L585.0 558.0L589.2 552.5L579.9 553.7Z" fill="#003fff"/><path d="M585.0 558.0L588.7 559.5L592.9 552.6L589.2 552.5Z" fill="#004bff"/><path d="M588.7 559.5L593.3 561.3L597.5 553.0L592.9 552.6Z" fill="#004fff"/><path d="M593.3 561.3L596.1 562.4L600.3 553.5L597.5 553.0Z" fill="#0052ff"/><path d="M596.1 562.4L600.7 564.2L604.9 554.7L600.3 553.5Z" fill="#0054ff"/><path d="M600.7 564.2L603.5 565.3L607.7 555.6L604.9 554.7Z" fill="#0055ff"/><path d="M603.5 565.3L605.4 566.1L609.5 556.3L607.7 555.6Z" fill="#0056ff"/><path d="M605.4 566.1L610.0 567.9L614.2 558.1L609.5 556.3Z" fill="#0056ff"/><path d="M610.0 567.9L614.6 569.7L618.8 559.9L614.2 558.1Z" fill="#0056ff"/><path d="M614.6 569.7L619.3 571.5L623.4 561.8L618.8 559.9Z" fill="#0056ff"/><path d="M619.3 571.5L623.9 573.4L628.1 563.6L623.4 561.8Z" fill="#0057ff"/><path d="M623.9 573.4L628.5 575.2L632.7 565.4L628.1 563.6Z" fill="#0057ff"/><path d="M628.5 575.2L633.2 577.0L637.3 567.2L632.7 565.4Z" fill="#0057ff"/><path d="M633.2 577.0L637.8 578.8L642.0 569.1L637.3 567.2Z" fill="#0057ff"/><path d="M637.8 578.8L642.4 580.7L646.6 570.9L642.0 569.1Z" fill="#0058ff"/><path d="M642.4 580.7L651.7 584.3L655.9 574.5L646.6 570.9Z" fill="#0058ff"/><path d="M651.7 584.3L656.3 586.1L660.5 576.3L655.9 574.5Z" fill="#0058ff"/><path d="M656.3 586.1L661.0 588.0L665.1 578.2L660.5 576.3Z" fill="#0059ff"/><path d="M661.0 588.0L665.6 589.8L669.8 580.0L665.1 578.2Z" fill="#0059ff"/><path d="M665.6 589.8L674.9 593.4L679.0 583.6L669.8 580.0Z" fill="#0059ff"/><path d="M674.9 593.4L681.3 596.0L685.5 586.2L679.0 583.6Z" fill="#0059ff"/><path d="M681.3 596.0L688.8 598.9L692.9 589.1L685.5 586.2Z" fill="#005aff"/><path d="M688.8 598.9L698.0 602.6L702.2 592.8L692.9 589.1Z" fill="#005aff"/><path d="M698.0 602.6L702.7 604.4L706.9 594.6L702.2 592.8Z" fill="#005bff"/><path d="M702.7 604.4L707.3 606.2L711.5 596.4L706.9 594.6Z" fill="#005bff"/><path d="M707.3 606.2L711.9 608.0L716.1 598.2L711.5 596.4Z" fill="#005bff"/><path d="M711.9 608.0L716.6 609.9L720.8 600.1L716.1 598.2Z" fill="#005bff"/><path d="M716.6 609.9L721.2 611.7L725.4 601.9L720.8 600.1Z" fill="#005bff"/><path d="M721.2 611.7L725.8 613.6L730.0 603.7L725.4 601.9Z" fill="#005cff"/><path d="M725.8 613.6L731.4 615.8L735.6 606.0L730.0 603.7Z" fill="#005cff"/><path d="M565.5 564.9L572.9 560.0L575.7 556.9L568.3 563.4Z" fill="#0017ff"/><path d="M572.9 560.0L582.2 562.8L585.0 558.0L575.7 556.9Z" fill="#0033ff"/><path d="M582.2 562.8L585.9 564.3L588.7 559.5L585.0 558.0Z" fill="#0038ff"/><path d="M585.9 564.3L590.5 566.1L593.3 561.3L588.7 559.5Z" fill="#0038ff"/><path d="M590.5 566.1L593.3 567.2L596.1 562.4L593.3 561.3Z" fill="#0038ff"/><path d="M593.3 567.2L597.9 569.0L600.7 564.2L596.1 562.4Z" fill="#0039ff"/><path d="M597.9 569.0L600.7 570.1L603.5 565.3L600.7 564.2Z" fill="#0039ff"/><path d="M600.7 570.1L602.6 570.9L605.4 566.1L603.5 565.3Z" fill="#0039ff"/><path d="M602.6 570.9L607.2 572.7L610.0 567.9L605.4 566.1Z" fill="#0039ff"/><path d="M607.2 572.7L611.8 574.5L614.6 569.7L610.0 567.9Z" fill="#0039ff"/><path d="M611.8 574.5L616.5 576.3L619.3 571.5L614.6 569.7Z" fill="#003aff"/><path d="M616.5 576.3L621.1 578.1L623.9 573.4L619.3 571.5Z" fill="#003aff"/><path d="M621.1 578.1L625.7 579.9L628.5 575.2L623.9 573.4Z" fill="#003aff"/><path d="M625.7 579.9L630.4 581.8L633.2 577.0L628.5 575.2Z" fill="#003aff"/><path d="M630.4 581.8L635.0 583.6L637.8 578.8L633.2 577.0Z" fill="#003aff"/><path d="M635.0 583.6L639.6 585.4L642.4 580.7L637.8 578.8Z" fill="#003bff"/><path d="M639.6 585.4L648.9 589.0L651.7 584.3L642.4 580.7Z" fill="#003bff"/><path d="M648.9 589.0L653.5 590.8L656.3 586.1L651.7 584.3Z" fill="#003cff"/><path d="M653.5 590.8L658.2 592.6L661.0 588.0L656.3 586.1Z" fill="#003cff"/><path d="M658.2 592.6L662.8 594.4L665.6 589.8L661.0 588.0Z" fill="#003cff"/><path d="M662.8 594.4L672.1 598.1L674.9 593.4L665.6 589.8Z" fill="#003cff"/><path d="M672.1 598.1L678.6 600.6L681.3 596.0L674.9 593.4Z" fill="#003dff"/><path d="M678.6 600.6L686.0 603.5L688.8 598.9L681.3 596.0Z" fill="#003dff"/><path d="M686.0 603.5L695.2 607.1L698.0 602.6L688.8 598.9Z" fill="#003eff"/><path d="M695.2 607.1L699.9 608.9L702.7 604.4L698.0 602.6Z" fill="#003eff"/><path d="M699.9 608.9L704.5 610.8L707.3 606.2L702.7 604.4Z" fill="#003eff"/><path d="M704.5 610.8L709.1 612.6L711.9 608.0L707.3 606.2Z" fill="#003fff"/><path d="M709.1 612.6L713.8 614.4L716.6 609.9L711.9 608.0Z" fill="#003fff"/><path d="M713.8 614.4L718.4 616.2L721.2 611.7L716.6 609.9Z" fill="#003fff"/><path d="M718.4 616.2L723.0 618.0L725.8 613.6L721.2 611.7Z" fill="#003fff"/><path d="M723.0 618.0L728.6 620.2L731.4 615.8L725.8 613.6Z" fill="#003fff"/><path d="M564.1 565.7L571.5 562.4L572.9 560.0L565.5 564.9Z" fill="#0013ff"/><path d="M571.5 562.4L580.8 565.3L582.2 562.8L572.9 560.0Z" fill="#0028ff"/><path d="M580.8 565.3L584.5 566.7L585.9 564.3L582.2 562.8Z" fill="#002bff"/><path d="M584.5 566.7L589.1 568.5L590.5 566.1L585.9 564.3Z" fill="#002bff"/><path d="M589.1 568.5L591.9 569.6L593.3 567.2L590.5 566.1Z" fill="#002bff"/><path d="M591.9 569.6L596.5 571.4L597.9 569.0L593.3 567.2Z" fill="#002bff"/><path d="M596.5 571.4L599.3 572.5L600.7 570.1L597.9 569.0Z" fill="#002cff"/><path d="M599.3 572.5L601.2 573.2L602.6 570.9L600.7 570.1Z" fill="#002cff"/><path d="M601.2 573.2L605.8 575.1L607.2 572.7L602.6 570.9Z" fill="#002cff"/><path d="M605.8 575.1L610.4 576.9L611.8 574.5L607.2 572.7Z" fill="#002cff"/><path d="M610.4 576.9L615.1 578.8L616.5 576.3L611.8 574.5Z" fill="#002cff"/><path d="M615.1 578.8L619.7 580.6L621.1 578.1L616.5 576.3Z" fill="#002cff"/><path d="M619.7 580.6L624.3 582.4L625.7 579.9L621.1 578.1Z" fill="#002dff"/><path d="M624.3 582.4L629.0 584.3L630.4 581.8L625.7 579.9Z" fill="#002dff"/><path d="M629.0 584.3L633.6 586.1L635.0 583.6L630.4 581.8Z" fill="#002dff"/><path d="M633.6 586.1L638.2 587.9L639.6 585.4L635.0 583.6Z" fill="#002dff"/><path d="M638.2 587.9L647.5 591.6L648.9 589.0L639.6 585.4Z" fill="#002eff"/><path d="M647.5 591.6L652.1 593.5L653.5 590.8L648.9 589.0Z" fill="#002eff"/><path d="M652.1 593.5L656.8 595.3L658.2 592.6L653.5 590.8Z" fill="#002eff"/><path d="M656.8 595.3L661.4 597.1L662.8 594.4L658.2 592.6Z" fill="#002eff"/><path d="M661.4 597.1L670.7 600.8L672.1 598.1L662.8 594.4Z" fill="#002fff"/><path d="M670.7 600.8L677.2 603.4L678.6 600.6L672.1 598.1Z" fill="#002fff"/><path d="M677.2 603.4L684.6 606.3L686.0 603.5L678.6 600.6Z" fill="#002fff"/><path d="M684.6 606.3L693.8 610.0L695.2 607.1L686.0 603.5Z" fill="#0030ff"/><path d="M693.8 610.0L698.5 611.8L699.9 608.9L695.2 607.1Z" fill="#0030ff"/><path d="M698.5 611.8L703.1 613.7L704.5 610.8L699.9 608.9Z" fill="#0030ff"/><path d="M703.1 613.7L707.7 615.5L709.1 612.6L704.5 610.8Z" fill="#0031ff"/><path d="M707.7 615.5L712.4 617.3L713.8 614.4L709.1 612.6Z" fill="#0031ff"/><path d="M712.4 617.3L717.0 619.2L718.4 616.2L713.8 614.4Z" fill="#0031ff"/><path d="M717.0 619.2L721.6 621.0L723.0 618.0L718.4 616.2Z" fill="#0031ff"/><path d="M721.6 621.0L727.2 623.3L728.6 620.2L723.0 618.0Z" fill="#0031ff"/><path d="M562.7 566.4L570.1 564.5L571.5 562.4L564.1 565.7Z" fill="#000fff"/><path d="M570.1 564.5L579.4 567.3L580.8 565.3L571.5 562.4Z" fill="#0020ff"/><path d="M579.4 567.3L583.1 568.8L584.5 566.7L580.8 565.3Z" fill="#0023ff"/><path d="M583.1 568.8L587.7 570.6L589.1 568.5L584.5 566.7Z" fill="#0023ff"/><path d="M587.7 570.6L590.5 571.7L591.9 569.6L589.1 568.5Z" fill="#0023ff"/><path d="M590.5 571.7L595.1 573.6L596.5 571.4L591.9 569.6Z" fill="#0023ff"/><path d="M595.1 573.6L597.9 574.7L599.3 572.5L596.5 571.4Z" fill="#0023ff"/><path d="M597.9 574.7L599.8 575.4L601.2 573.2L599.3 572.5Z" fill="#0024ff"/><path d="M599.8 575.4L604.4 577.2L605.8 575.1L601.2 573.2Z" fill="#0024ff"/><path d="M604.4 577.2L609.0 579.1L610.4 576.9L605.8 575.1Z" fill="#0024ff"/><path d="M609.0 579.1L613.7 580.9L615.1 578.8L610.4 576.9Z" fill="#0024ff"/><path d="M613.7 580.9L618.3 582.8L619.7 580.6L615.1 578.8Z" fill="#0024ff"/><path d="M618.3 582.8L622.9 584.6L624.3 582.4L619.7 580.6Z" fill="#0024ff"/><path d="M622.9 584.6L627.6 586.4L629.0 584.3L624.3 582.4Z" fill="#0024ff"/><path d="M627.6 586.4L632.2 588.3L633.6 586.1L629.0 584.3Z" fill="#0025ff"/><path d="M632.2 588.3L636.8 590.1L638.2 587.9L633.6 586.1Z" fill="#0025ff"/><path d="M636.8 590.1L646.1 593.8L647.5 591.6L638.2 587.9Z" fill="#0025ff"/><path d="M646.1 593.8L650.7 595.6L652.1 593.5L647.5 591.6Z" fill="#0025ff"/><path d="M650.7 595.6L655.4 597.5L656.8 595.3L652.1 593.5Z" fill="#0025ff"/><path d="M655.4 597.5L660.0 599.3L661.4 597.1L656.8 595.3Z" fill="#0025ff"/><path d="M660.0 599.3L669.3 603.0L670.7 600.8L661.4 597.1Z" fill="#0026ff"/><path d="M669.3 603.0L675.7 605.6L677.2 603.4L670.7 600.8Z" fill="#0026ff"/><path d="M675.7 605.6L683.2 608.5L684.6 606.3L677.2 603.4Z" fill="#0026ff"/><path d="M683.2 608.5L692.4 612.2L693.8 610.0L684.6 606.3Z" fill="#0026ff"/><path d="M692.4 612.2L697.1 614.1L698.5 611.8L693.8 610.0Z" fill="#0027ff"/><path d="M697.1 614.1L701.7 615.9L703.1 613.7L698.5 611.8Z" fill="#0027ff"/><path d="M701.7 615.9L706.3 617.7L707.7 615.5L703.1 613.7Z" fill="#0027ff"/><path d="M706.3 617.7L711.0 619.6L712.4 617.3L707.7 615.5Z" fill="#0027ff"/><path d="M711.0 619.6L715.6 621.4L717.0 619.2L712.4 617.3Z" fill="#0027ff"/><path d="M715.6 621.4L720.2 623.3L721.6 621.0L717.0 619.2Z" fill="#0027ff"/><path d="M720.2 623.3L725.8 625.5L727.2 623.3L721.6 621.0Z" fill="#0027ff"/><path d="M561.3 567.2L568.7 566.6L570.1 564.5L562.7 566.4Z" fill="#000bff"/><path d="M568.7 566.6L578.0 569.7L579.4 567.3L570.1 564.5Z" fill="#0019ff"/><path d="M578.0 569.7L581.7 571.2L583.1 568.8L579.4 567.3Z" fill="#001bff"/><path d="M581.7 571.2L586.3 572.9L587.7 570.6L583.1 568.8Z" fill="#001bff"/><path d="M586.3 572.9L589.1 574.0L590.5 571.7L587.7 570.6Z" fill="#001bff"/><path d="M589.1 574.0L593.7 575.8L595.1 573.6L590.5 571.7Z" fill="#001cff"/><path d="M593.7 575.8L596.5 576.8L597.9 574.7L595.1 573.6Z" fill="#001cff"/><path d="M596.5 576.8L598.4 577.6L599.8 575.4L597.9 574.7Z" fill="#001cff"/><path d="M598.4 577.6L603.0 579.4L604.4 577.2L599.8 575.4Z" fill="#001cff"/><path d="M603.0 579.4L607.6 581.2L609.0 579.1L604.4 577.2Z" fill="#001cff"/><path d="M607.6 581.2L612.3 583.0L613.7 580.9L609.0 579.1Z" fill="#001dff"/><path d="M612.3 583.0L616.9 584.8L618.3 582.8L613.7 580.9Z" fill="#001dff"/><path d="M616.9 584.8L621.5 586.6L622.9 584.6L618.3 582.8Z" fill="#001dff"/><path d="M621.5 586.6L626.2 588.4L627.6 586.4L622.9 584.6Z" fill="#001dff"/><path d="M626.2 588.4L630.8 590.2L632.2 588.3L627.6 586.4Z" fill="#001eff"/><path d="M630.8 590.2L635.4 592.0L636.8 590.1L632.2 588.3Z" fill="#001eff"/><path d="M635.4 592.0L644.7 595.7L646.1 593.8L636.8 590.1Z" fill="#001eff"/><path d="M644.7 595.7L649.3 597.5L650.7 595.6L646.1 593.8Z" fill="#001eff"/><path d="M649.3 597.5L654.0 599.3L655.4 597.5L650.7 595.6Z" fill="#001fff"/><path d="M654.0 599.3L658.6 601.2L660.0 599.3L655.4 597.5Z" fill="#001fff"/><path d="M658.6 601.2L667.9 604.8L669.3 603.0L660.0 599.3Z" fill="#001fff"/><path d="M667.9 604.8L674.3 607.4L675.7 605.6L669.3 603.0Z" fill="#001fff"/><path d="M674.3 607.4L681.8 610.3L683.2 608.5L675.7 605.6Z" fill="#0020ff"/><path d="M681.8 610.3L691.0 613.9L692.4 612.2L683.2 608.5Z" fill="#0020ff"/><path d="M691.0 613.9L695.7 615.8L697.1 614.1L692.4 612.2Z" fill="#0020ff"/><path d="M695.7 615.8L700.3 617.6L701.7 615.9L697.1 614.1Z" fill="#0020ff"/><path d="M700.3 617.6L704.9 619.4L706.3 617.7L701.7 615.9Z" fill="#0021ff"/><path d="M704.9 619.4L709.6 621.2L711.0 619.6L706.3 617.7Z" fill="#0021ff"/><path d="M709.6 621.2L714.2 623.1L715.6 621.4L711.0 619.6Z" fill="#0021ff"/><path d="M714.2 623.1L718.8 624.9L720.2 623.3L715.6 621.4Z" fill="#0021ff"/><path d="M718.8 624.9L724.4 627.2L725.8 625.5L720.2 623.3Z" fill="#0021ff"/><path d="M560.6 567.6L568.0 567.4L568.7 566.6L561.3 567.2Z" fill="#0009ff"/><path d="M568.0 567.4L577.3 570.8L578.0 569.7L568.7 566.6Z" fill="#0013ff"/><path d="M577.3 570.8L581.0 572.1L581.7 571.2L578.0 569.7Z" fill="#0015ff"/><path d="M581.0 572.1L585.6 573.8L586.3 572.9L581.7 571.2Z" fill="#0015ff"/><path d="M585.6 573.8L588.4 574.8L589.1 574.0L586.3 572.9Z" fill="#0016ff"/><path d="M588.4 574.8L593.0 576.5L593.7 575.8L589.1 574.0Z" fill="#0017ff"/><path d="M593.0 576.5L595.8 577.6L596.5 576.8L593.7 575.8Z" fill="#0017ff"/><path d="M595.8 577.6L597.6 578.3L598.4 577.6L596.5 576.8Z" fill="#0017ff"/><path d="M597.6 578.3L602.3 580.1L603.0 579.4L598.4 577.6Z" fill="#0018ff"/><path d="M602.3 580.1L606.9 581.9L607.6 581.2L603.0 579.4Z" fill="#0018ff"/><path d="M606.9 581.9L611.5 583.7L612.3 583.0L607.6 581.2Z" fill="#0018ff"/><path d="M611.5 583.7L616.2 585.5L616.9 584.8L612.3 583.0Z" fill="#0019ff"/><path d="M616.2 585.5L620.8 587.4L621.5 586.6L616.9 584.8Z" fill="#0019ff"/><path d="M620.8 587.4L625.4 589.2L626.2 588.4L621.5 586.6Z" fill="#0019ff"/><path d="M625.4 589.2L630.1 591.0L630.8 590.2L626.2 588.4Z" fill="#0019ff"/><path d="M630.1 591.0L634.7 592.9L635.4 592.0L630.8 590.2Z" fill="#0019ff"/><path d="M634.7 592.9L644.0 596.6L644.7 595.7L635.4 592.0Z" fill="#001aff"/><path d="M644.0 596.6L648.6 598.4L649.3 597.5L644.7 595.7Z" fill="#001aff"/><path d="M648.6 598.4L653.2 600.3L654.0 599.3L649.3 597.5Z" fill="#001aff"/><path d="M653.2 600.3L657.9 602.1L658.6 601.2L654.0 599.3Z" fill="#001aff"/><path d="M657.9 602.1L667.1 605.8L667.9 604.8L658.6 601.2Z" fill="#001bff"/><path d="M667.1 605.8L673.6 608.4L674.3 607.4L667.9 604.8Z" fill="#001bff"/><path d="M673.6 608.4L681.0 611.3L681.8 610.3L674.3 607.4Z" fill="#001bff"/><path d="M681.0 611.3L690.3 615.0L691.0 613.9L681.8 610.3Z" fill="#001bff"/><path d="M690.3 615.0L694.9 616.9L695.7 615.8L691.0 613.9Z" fill="#001cff"/><path d="M694.9 616.9L699.6 618.7L700.3 617.6L695.7 615.8Z" fill="#001cff"/><path d="M699.6 618.7L704.2 620.6L704.9 619.4L700.3 617.6Z" fill="#001cff"/><path d="M704.2 620.6L708.8 622.4L709.6 621.2L704.9 619.4Z" fill="#001cff"/><path d="M708.8 622.4L713.5 624.2L714.2 623.1L709.6 621.2Z" fill="#001cff"/><path d="M713.5 624.2L718.1 626.1L718.8 624.9L714.2 623.1Z" fill="#001dff"/><path d="M718.1 626.1L723.7 628.3L724.4 627.2L718.8 624.9Z" fill="#001dff"/><path d="M559.9 568.0L567.3 568.3L568.0 567.4L560.6 567.6Z" fill="#0007ff"/><path d="M567.3 568.3L576.6 571.6L577.3 570.8L568.0 567.4Z" fill="#0010ff"/><path d="M576.6 571.6L580.3 572.9L581.0 572.1L577.3 570.8Z" fill="#0012ff"/><path d="M580.3 572.9L584.9 574.5L585.6 573.8L581.0 572.1Z" fill="#0013ff"/><path d="M584.9 574.5L587.7 575.5L588.4 574.8L585.6 573.8Z" fill="#0014ff"/><path d="M587.7 575.5L592.3 577.3L593.0 576.5L588.4 574.8Z" fill="#0015ff"/><path d="M592.3 577.3L595.1 578.4L595.8 577.6L593.0 576.5Z" fill="#0015ff"/><path d="M595.1 578.4L597.0 579.1L597.6 578.3L595.8 577.6Z" fill="#0015ff"/><path d="M597.0 579.1L601.6 580.9L602.3 580.1L597.6 578.3Z" fill="#0016ff"/><path d="M601.6 580.9L606.2 582.7L606.9 581.9L602.3 580.1Z" fill="#0016ff"/><path d="M606.2 582.7L610.9 584.6L611.5 583.7L606.9 581.9Z" fill="#0016ff"/><path d="M610.9 584.6L615.5 586.4L616.2 585.5L611.5 583.7Z" fill="#0016ff"/><path d="M615.5 586.4L620.1 588.2L620.8 587.4L616.2 585.5Z" fill="#0017ff"/><path d="M620.1 588.2L624.8 590.0L625.4 589.2L620.8 587.4Z" fill="#0017ff"/><path d="M624.8 590.0L629.4 591.8L630.1 591.0L625.4 589.2Z" fill="#0017ff"/><path d="M629.4 591.8L634.0 593.7L634.7 592.9L630.1 591.0Z" fill="#0017ff"/><path d="M634.0 593.7L643.3 597.3L644.0 596.6L634.7 592.9Z" fill="#0017ff"/><path d="M643.3 597.3L647.9 599.1L648.6 598.4L644.0 596.6Z" fill="#0018ff"/><path d="M647.9 599.1L652.6 601.0L653.2 600.3L648.6 598.4Z" fill="#0018ff"/><path d="M652.6 601.0L657.2 602.8L657.9 602.1L653.2 600.3Z" fill="#0018ff"/><path d="M657.2 602.8L666.5 606.4L667.1 605.8L657.9 602.1Z" fill="#0018ff"/><path d="M666.5 606.4L672.9 609.0L673.6 608.4L667.1 605.8Z" fill="#0019ff"/><path d="M672.9 609.0L680.4 611.9L681.0 611.3L673.6 608.4Z" fill="#0019ff"/><path d="M680.4 611.9L689.6 615.6L690.3 615.0L681.0 611.3Z" fill="#0019ff"/><path d="M689.6 615.6L694.3 617.4L694.9 616.9L690.3 615.0Z" fill="#0019ff"/><path d="M694.3 617.4L698.9 619.2L699.6 618.7L694.9 616.9Z" fill="#001aff"/><path d="M698.9 619.2L703.5 621.0L704.2 620.6L699.6 618.7Z" fill="#001aff"/><path d="M703.5 621.0L708.2 622.9L708.8 622.4L704.2 620.6Z" fill="#001aff"/><path d="M708.2 622.9L712.8 624.7L713.5 624.2L708.8 622.4Z" fill="#001aff"/><path d="M712.8 624.7L717.4 626.5L718.1 626.1L713.5 624.2Z" fill="#001aff"/><path d="M717.4 626.5L723.0 628.8L723.7 628.3L718.1 626.1Z" fill="#001aff"/><path d="M559.2 568.4L566.6 569.3L567.3 568.3L559.9 568.0Z" fill="#0006ff"/><path d="M566.6 569.3L575.9 572.3L576.6 571.6L567.3 568.3Z" fill="#000eff"/><path d="M575.9 572.3L579.6 573.6L580.3 572.9L576.6 571.6Z" fill="#0010ff"/><path d="M579.6 573.6L584.2 575.1L584.9 574.5L580.3 572.9Z" fill="#0011ff"/><path d="M584.2 575.1L587.0 576.2L587.7 575.5L584.9 574.5Z" fill="#0012ff"/><path d="M587.0 576.2L591.6 578.0L592.3 577.3L587.7 575.5Z" fill="#0013ff"/><path d="M591.6 578.0L594.4 579.1L595.1 578.4L592.3 577.3Z" fill="#0013ff"/><path d="M594.4 579.1L596.2 579.9L597.0 579.1L595.1 578.4Z" fill="#0013ff"/><path d="M596.2 579.9L600.9 581.7L601.6 580.9L597.0 579.1Z" fill="#0013ff"/><path d="M600.9 581.7L605.5 583.5L606.2 582.7L601.6 580.9Z" fill="#0014ff"/><path d="M605.5 583.5L610.1 585.3L610.9 584.6L606.2 582.7Z" fill="#0014ff"/><path d="M610.1 585.3L614.8 587.2L615.5 586.4L610.9 584.6Z" fill="#0014ff"/><path d="M614.8 587.2L619.4 589.0L620.1 588.2L615.5 586.4Z" fill="#0014ff"/><path d="M619.4 589.0L624.0 590.8L624.8 590.0L620.1 588.2Z" fill="#0015ff"/><path d="M624.0 590.8L628.7 592.6L629.4 591.8L624.8 590.0Z" fill="#0015ff"/><path d="M628.7 592.6L633.3 594.5L634.0 593.7L629.4 591.8Z" fill="#0015ff"/><path d="M633.3 594.5L642.6 598.1L643.3 597.3L634.0 593.7Z" fill="#0015ff"/><path d="M642.6 598.1L647.2 599.9L647.9 599.1L643.3 597.3Z" fill="#0016ff"/><path d="M647.2 599.9L651.8 601.8L652.6 601.0L647.9 599.1Z" fill="#0016ff"/><path d="M651.8 601.8L656.5 603.6L657.2 602.8L652.6 601.0Z" fill="#0016ff"/><path d="M656.5 603.6L665.7 607.2L666.5 606.4L657.2 602.8Z" fill="#0016ff"/><path d="M665.7 607.2L672.2 609.8L672.9 609.0L666.5 606.4Z" fill="#0017ff"/><path d="M672.2 609.8L679.7 612.7L680.4 611.9L672.9 609.0Z" fill="#0017ff"/><path d="M679.7 612.7L688.9 616.4L689.6 615.6L680.4 611.9Z" fill="#0018ff"/><path d="M688.9 616.4L693.6 618.2L694.3 617.4L689.6 615.6Z" fill="#0018ff"/><path d="M693.6 618.2L698.2 620.0L698.9 619.2L694.3 617.4Z" fill="#0018ff"/><path d="M698.2 620.0L702.8 621.8L703.5 621.0L698.9 619.2Z" fill="#0018ff"/><path d="M702.8 621.8L707.5 623.7L708.2 622.9L703.5 621.0Z" fill="#0019ff"/><path d="M707.5 623.7L712.1 625.5L712.8 624.7L708.2 622.9Z" fill="#0019ff"/><path d="M712.1 625.5L716.7 627.4L717.4 626.5L712.8 624.7Z" fill="#0019ff"/><path d="M716.7 627.4L722.3 629.6L723.0 628.8L717.4 626.5Z" fill="#0019ff"/><path d="M557.1 569.5L564.5 571.3L566.6 569.3L559.2 568.4Z" fill="#0004ff"/><path d="M564.5 571.3L573.8 574.0L575.9 572.3L566.6 569.3Z" fill="#000bff"/><path d="M573.8 574.0L577.5 575.3L579.6 573.6L575.9 572.3Z" fill="#000eff"/><path d="M577.5 575.3L582.1 577.1L584.2 575.1L579.6 573.6Z" fill="#000fff"/><path d="M582.1 577.1L584.9 578.1L587.0 576.2L584.2 575.1Z" fill="#0010ff"/><path d="M584.9 578.1L589.5 579.8L591.6 578.0L587.0 576.2Z" fill="#0010ff"/><path d="M589.5 579.8L592.3 580.9L594.4 579.1L591.6 578.0Z" fill="#0010ff"/><path d="M592.3 580.9L594.2 581.6L596.2 579.9L594.4 579.1Z" fill="#0011ff"/><path d="M594.2 581.6L598.8 583.4L600.9 581.7L596.2 579.9Z" fill="#0011ff"/><path d="M598.8 583.4L603.4 585.3L605.5 583.5L600.9 581.7Z" fill="#0011ff"/><path d="M603.4 585.3L608.1 587.1L610.1 585.3L605.5 583.5Z" fill="#0011ff"/><path d="M608.1 587.1L612.7 588.9L614.8 587.2L610.1 585.3Z" fill="#0011ff"/><path d="M612.7 588.9L617.3 590.7L619.4 589.0L614.8 587.2Z" fill="#0012ff"/><path d="M617.3 590.7L622.0 592.6L624.0 590.8L619.4 589.0Z" fill="#0012ff"/><path d="M622.0 592.6L626.6 594.4L628.7 592.6L624.0 590.8Z" fill="#0012ff"/><path d="M626.6 594.4L631.2 596.2L633.3 594.5L628.7 592.6Z" fill="#0012ff"/><path d="M631.2 596.2L640.5 599.9L642.6 598.1L633.3 594.5Z" fill="#0013ff"/><path d="M640.5 599.9L645.1 601.7L647.2 599.9L642.6 598.1Z" fill="#0013ff"/><path d="M645.1 601.7L649.8 603.5L651.8 601.8L647.2 599.9Z" fill="#0013ff"/><path d="M649.8 603.5L654.4 605.3L656.5 603.6L651.8 601.8Z" fill="#0013ff"/><path d="M654.4 605.3L663.7 609.0L665.7 607.2L656.5 603.6Z" fill="#0014ff"/><path d="M663.7 609.0L670.2 611.5L672.2 609.8L665.7 607.2Z" fill="#0014ff"/><path d="M670.2 611.5L677.6 614.5L679.7 612.7L672.2 609.8Z" fill="#0014ff"/><path d="M677.6 614.5L686.8 618.1L688.9 616.4L679.7 612.7Z" fill="#0015ff"/><path d="M686.8 618.1L691.5 619.9L693.6 618.2L688.9 616.4Z" fill="#0015ff"/><path d="M691.5 619.9L696.1 621.7L698.2 620.0L693.6 618.2Z" fill="#0015ff"/><path d="M696.1 621.7L700.7 623.6L702.8 621.8L698.2 620.0Z" fill="#0016ff"/><path d="M700.7 623.6L705.4 625.4L707.5 623.7L702.8 621.8Z" fill="#0016ff"/><path d="M705.4 625.4L710.0 627.2L712.1 625.5L707.5 623.7Z" fill="#0016ff"/><path d="M710.0 627.2L714.6 629.1L716.7 627.4L712.1 625.5Z" fill="#0016ff"/><path d="M714.6 629.1L720.2 631.3L722.3 629.6L716.7 627.4Z" fill="#0016ff"/><path d="M555.7 570.3L563.1 572.5L564.5 571.3L557.1 569.5Z" fill="#0002ff"/><path d="M563.1 572.5L572.4 574.9L573.8 574.0L564.5 571.3Z" fill="#0008ff"/><path d="M572.4 574.9L576.1 576.3L577.5 575.3L573.8 574.0Z" fill="#000cff"/><path d="M576.1 576.3L580.7 578.1L582.1 577.1L577.5 575.3Z" fill="#000cff"/><path d="M580.7 578.1L583.5 579.2L584.9 578.1L582.1 577.1Z" fill="#000dff"/><path d="M583.5 579.2L588.1 581.0L589.5 579.8L584.9 578.1Z" fill="#000dff"/><path d="M588.1 581.0L590.9 582.1L592.3 580.9L589.5 579.8Z" fill="#000eff"/><path d="M590.9 582.1L592.8 582.8L594.2 581.6L592.3 580.9Z" fill="#000eff"/><path d="M592.8 582.8L597.4 584.6L598.8 583.4L594.2 581.6Z" fill="#000eff"/><path d="M597.4 584.6L602.0 586.5L603.4 585.3L598.8 583.4Z" fill="#000eff"/><path d="M602.0 586.5L606.7 588.3L608.1 587.1L603.4 585.3Z" fill="#000eff"/><path d="M606.7 588.3L611.3 590.1L612.7 588.9L608.1 587.1Z" fill="#000fff"/><path d="M611.3 590.1L615.9 592.0L617.3 590.7L612.7 588.9Z" fill="#000fff"/><path d="M615.9 592.0L620.6 593.8L622.0 592.6L617.3 590.7Z" fill="#000fff"/><path d="M620.6 593.8L625.2 595.6L626.6 594.4L622.0 592.6Z" fill="#000fff"/><path d="M625.2 595.6L629.8 597.5L631.2 596.2L626.6 594.4Z" fill="#000fff"/><path d="M629.8 597.5L639.1 601.1L640.5 599.9L631.2 596.2Z" fill="#0010ff"/><path d="M639.1 601.1L643.7 603.0L645.1 601.7L640.5 599.9Z" fill="#0010ff"/><path d="M643.7 603.0L648.4 604.8L649.8 603.5L645.1 601.7Z" fill="#0010ff"/><path d="M648.4 604.8L653.0 606.6L654.4 605.3L649.8 603.5Z" fill="#0010ff"/><path d="M653.0 606.6L662.3 610.3L663.7 609.0L654.4 605.3Z" fill="#0011ff"/><path d="M662.3 610.3L668.8 612.9L670.2 611.5L663.7 609.0Z" fill="#0011ff"/><path d="M668.8 612.9L676.2 615.8L677.6 614.5L670.2 611.5Z" fill="#0011ff"/><path d="M676.2 615.8L685.4 619.5L686.8 618.1L677.6 614.5Z" fill="#0012ff"/><path d="M685.4 619.5L690.1 621.3L691.5 619.9L686.8 618.1Z" fill="#0012ff"/><path d="M690.1 621.3L694.7 623.1L696.1 621.7L691.5 619.9Z" fill="#0012ff"/><path d="M694.7 623.1L699.3 625.0L700.7 623.6L696.1 621.7Z" fill="#0012ff"/><path d="M699.3 625.0L704.0 626.8L705.4 625.4L700.7 623.6Z" fill="#0013ff"/><path d="M704.0 626.8L708.6 628.7L710.0 627.2L705.4 625.4Z" fill="#0013ff"/><path d="M708.6 628.7L713.2 630.5L714.6 629.1L710.0 627.2Z" fill="#0013ff"/><path d="M713.2 630.5L718.8 632.7L720.2 631.3L714.6 629.1Z" fill="#0013ff"/></g><g font-size="6.7"><text x="553.1" y="537.2" text-anchor="end" fill="#1a1aff">180.78</text><text x="861.3" y="525.5" fill="#1a1aff">180.78</text><text x="553.1" y="499.5" text-anchor="end" fill="#1a1aff">361.56</text><text x="861.3" y="487.8" fill="#1a1aff">361.56</text><text x="553.1" y="461.8" text-anchor="end" fill="#1a1aff">542.34</text><text x="861.3" y="450.1" fill="#1a1aff">542.34</text><text x="553.1" y="424.1" text-anchor="end" fill="#1a1aff">723.12</text><text x="861.3" y="412.4" fill="#1a1aff">723.12</text><text x="553.1" y="386.4" text-anchor="end" fill="#1a1aff">903.90</text><text x="861.3" y="374.7" fill="#1a1aff">903.90</text><text x="553.4" y="575.1" text-anchor="end" fill="#404040">0</text><text x="570.1" y="581.8" text-anchor="end" fill="#404040">900</text><text x="588.6" y="589.3" text-anchor="end" fill="#404040">1900</text><text x="609.0" y="597.5" text-anchor="end" fill="#404040">3000</text><text x="627.5" y="605.0" text-anchor="end" fill="#404040">4000</text><text x="646.1" y="612.4" text-anchor="end" fill="#404040">5000</text><text x="666.5" y="620.6" text-anchor="end" fill="#404040">6100</text><text x="683.1" y="627.4" text-anchor="end" fill="#404040">7000</text><text x="701.7" y="634.8" text-anchor="end" fill="#404040">8000</text><text x="721.2" y="641.6" fill="#ff2020">0.00</text><text x="738.0" y="632.4" fill="#ff2020">12.01</text><text x="755.4" y="622.7" fill="#ff2020">24.51</text><text x="771.5" y="613.9" fill="#ff2020">36.01</text><text x="791.0" y="603.1" fill="#ff2020">50.00</text><text x="821.8" y="586.2" fill="#ff2020">72.00</text><text x="840.0" y="576.1" fill="#ff2020">85.01</text><text x="860.9" y="564.6" fill="#ff2020">100.00</text></g><text x="617.2" y="632.4" font-size="7.75" font-weight="bold" fill="#6a6a6a" text-anchor="middle">RPM</text><text x="822.7" y="625" font-size="7.9" font-weight="bold" fill="#ff1010" text-anchor="middle">% Throttle</text><text transform="translate(509.9 476.2) rotate(-90)" font-size="7.8" letter-spacing="0.6" font-weight="bold" fill="#1010e0" text-anchor="middle">kg/h</text><text transform="translate(904.2 464.8) rotate(-90)" font-size="7.8" letter-spacing="0.6" font-weight="bold" fill="#1010e0" text-anchor="middle">kg/h</text><text x="707.5" y="306" font-size="11.24" font-weight="bold" fill="#111" text-anchor="middle">Real mass flow over throttle valve 1</text><text x="707.5" y="292" font-size="7" fill="#d2d2d2" text-anchor="middle">TunerPro - Version 5.00</text></svg>
<svg class="abs" style="left:0;top:0;pointer-events:none" width="1445" height="691" viewBox="0 0 1445 691"><g opacity="0.31"><g fill="#000" stroke="none"><defs><mask id="lm" maskUnits="userSpaceOnUse" x="0" y="0" width="1445" height="691"><rect width="1445" height="691" fill="#fff"/><path d="M217.9 305.3m-8 0a8 8 0 1 0 16 0a8 8 0 1 0 -16 0ZM341.6 388.7m-9.3 0a9.3 9.3 0 1 0 18.6 0a9.3 9.3 0 1 0 -18.6 0ZM394.7 305.3m-8 0a8 8 0 1 0 16 0a8 8 0 1 0 -16 0ZM271.0 388.7m-9.3 0a9.3 9.3 0 1 0 18.6 0a9.3 9.3 0 1 0 -18.6 0Z" fill="#000"/></mask></defs><g mask="url(#lm)"><path d="M176.5 313.8L183.0 318.2L216.8 268.1L210.3 263.7"/><path d="M185.8 320.1L219.6 270.0L255.1 294.0L252.8 298.4L245.4 297.7L236.7 307.1L226.6 322.0L222.5 333.4L226.2 341.3L222.6 344.9"/><path d="M226.4 319.7L234.4 307.7L334.7 375.4L326.7 387.3"/><path d="M341.6 388.7m-22 0a22 22 0 1 0 44 0a22 22 0 1 0 -44 0Z"/><path d="M436.1 313.8L429.6 318.2L395.8 268.1L402.3 263.7"/><path d="M426.8 320.1L393.0 270.0L357.5 294.0L359.8 298.4L367.2 297.7L375.9 307.1L386.0 322.0L390.1 333.4L386.4 341.3L390.0 344.9"/><path d="M386.2 319.7L378.2 307.7L277.9 375.4L285.9 387.3"/><path d="M271.0 388.7m-22 0a22 22 0 1 0 44 0a22 22 0 1 0 -44 0Z"/></g><path d="M191.3 351.4L196.9 361.8L208.5 360.2L200.4 368.6L205.5 379.2L194.9 374.1L186.5 382.2L188.1 370.6L177.7 365.0L189.3 363.0ZM421.2 351.4L423.2 363.0L434.8 365.0L424.4 370.6L426.0 382.2L417.6 374.1L407.0 379.2L412.1 368.6L404.0 360.2L415.6 361.8Z"/><path d="M240 224.2C252 219.5 276 222 295.3 237.6C284 249 262 254.5 248.5 244.5C243.5 240 240.8 232 240 224.2Z"/><path d="M318.4 237.6C332 224.5 352 219 370.4 223.2C369.8 234 366 243 359.6 248.2L352.9 267L344 250.6C334 248.5 325 244 318.4 237.6Z"/><path d="M305.3 249.2L321 276L312.6 291.4L305.8 275L299 292.8L290 276.6Z"/><path d="M273.2 300.3L280.0 307.4L284.0 305.0L291.0 312.4L295.0 309.6L302.2 314.6L306.2 312.6L311.4 313.6L317.4 310.4L320.4 307.4L326.4 308.4L331.4 304.4L334.6 305.4L339.3 301.2L335.6 309.8L333.0 315.0L329.6 312.4L324.6 321.0L320.0 316.6L314.6 327.0L309.4 319.6L303.6 318.6L298.0 327.0L293.4 317.6L289.6 321.4L285.0 312.6L281.4 316.0L278.0 308.6Z"/></g><g fill="none" stroke="#000"><path d="M225.6 216.6C223.6 204 223.6 190 224.8 166.6L243.9 161.2L261.1 188.5L276.5 176.8L298.6 208.8" stroke-width="5.2" stroke-linejoin="miter" stroke-miterlimit="10"/><path d="M243.6 144.6L264.2 171.9L280.2 161.2L298.6 208.8" stroke-width="5.2" stroke-linejoin="miter" stroke-miterlimit="10"/><path d="M231 150C250 127 278 116.5 308 115.2C338 116 362 132 376 151C384.5 165 387.6 185 387.3 201C387 213 385 226 380.5 238" stroke-width="5.2"/></g><g fill="#000" stroke="#000" stroke-linejoin="miter" font-family="Liberation Sans, sans-serif" font-weight="bold"><text transform="translate(76.86 503.85) scale(0.4489 1.2514)" font-size="100" x="0" y="0" stroke-width="7.0" vector-effect="non-scaling-stroke">O</text><text transform="translate(135.66 505.10) scale(0.5731 1.1366)" font-size="100" x="0" y="0" stroke-width="7.0" vector-effect="non-scaling-stroke">L</text><text transform="translate(192.21 505.10) scale(0.5514 1.0058)" font-size="100" x="0" y="0" stroke-width="7.0" vector-effect="non-scaling-stroke">D</text><text transform="translate(256.92 504.20) scale(0.5793 0.9040)" font-size="100" x="0" y="0" stroke-width="7.0" vector-effect="non-scaling-stroke">S</text><text transform="translate(317.96 505.10) scale(0.5581 0.9302)" font-size="100" x="0" y="0" stroke-width="7.0" vector-effect="non-scaling-stroke">K</text><text transform="translate(381.49 504.10) scale(0.5857 1.0000)" font-size="100" x="0" y="0" stroke-width="7.0" vector-effect="non-scaling-stroke">U</text><text transform="translate(444.26 505.10) scale(0.5731 1.1047)" font-size="100" x="0" y="0" stroke-width="7.0" vector-effect="non-scaling-stroke">L</text><text transform="translate(500.25 505.10) scale(0.5750 1.2573)" font-size="100" x="0" y="0" stroke-width="7.0" vector-effect="non-scaling-stroke">L</text><text transform="translate(141.72 562.30) scale(0.4363 0.3663)" font-size="100" x="0" y="0" stroke-width="1.4" vector-effect="non-scaling-stroke">T</text><text transform="translate(201.43 562.92) scale(0.4609 0.3754)" font-size="100" x="0" y="0" stroke-width="1.4" vector-effect="non-scaling-stroke">U</text><text transform="translate(265.30 562.30) scale(0.4184 0.3663)" font-size="100" x="0" y="0" stroke-width="1.4" vector-effect="non-scaling-stroke">N</text><text transform="translate(331.75 562.30) scale(0.4097 0.3663)" font-size="100" x="0" y="0" stroke-width="1.4" vector-effect="non-scaling-stroke">I</text><text transform="translate(379.48 562.30) scale(0.4065 0.3663)" font-size="100" x="0" y="0" stroke-width="1.4" vector-effect="non-scaling-stroke">N</text><text transform="translate(445.11 562.92) scale(0.3644 0.3814)" font-size="100" x="0" y="0" stroke-width="1.4" vector-effect="non-scaling-stroke">G</text></g></g></svg>
</body></html>
